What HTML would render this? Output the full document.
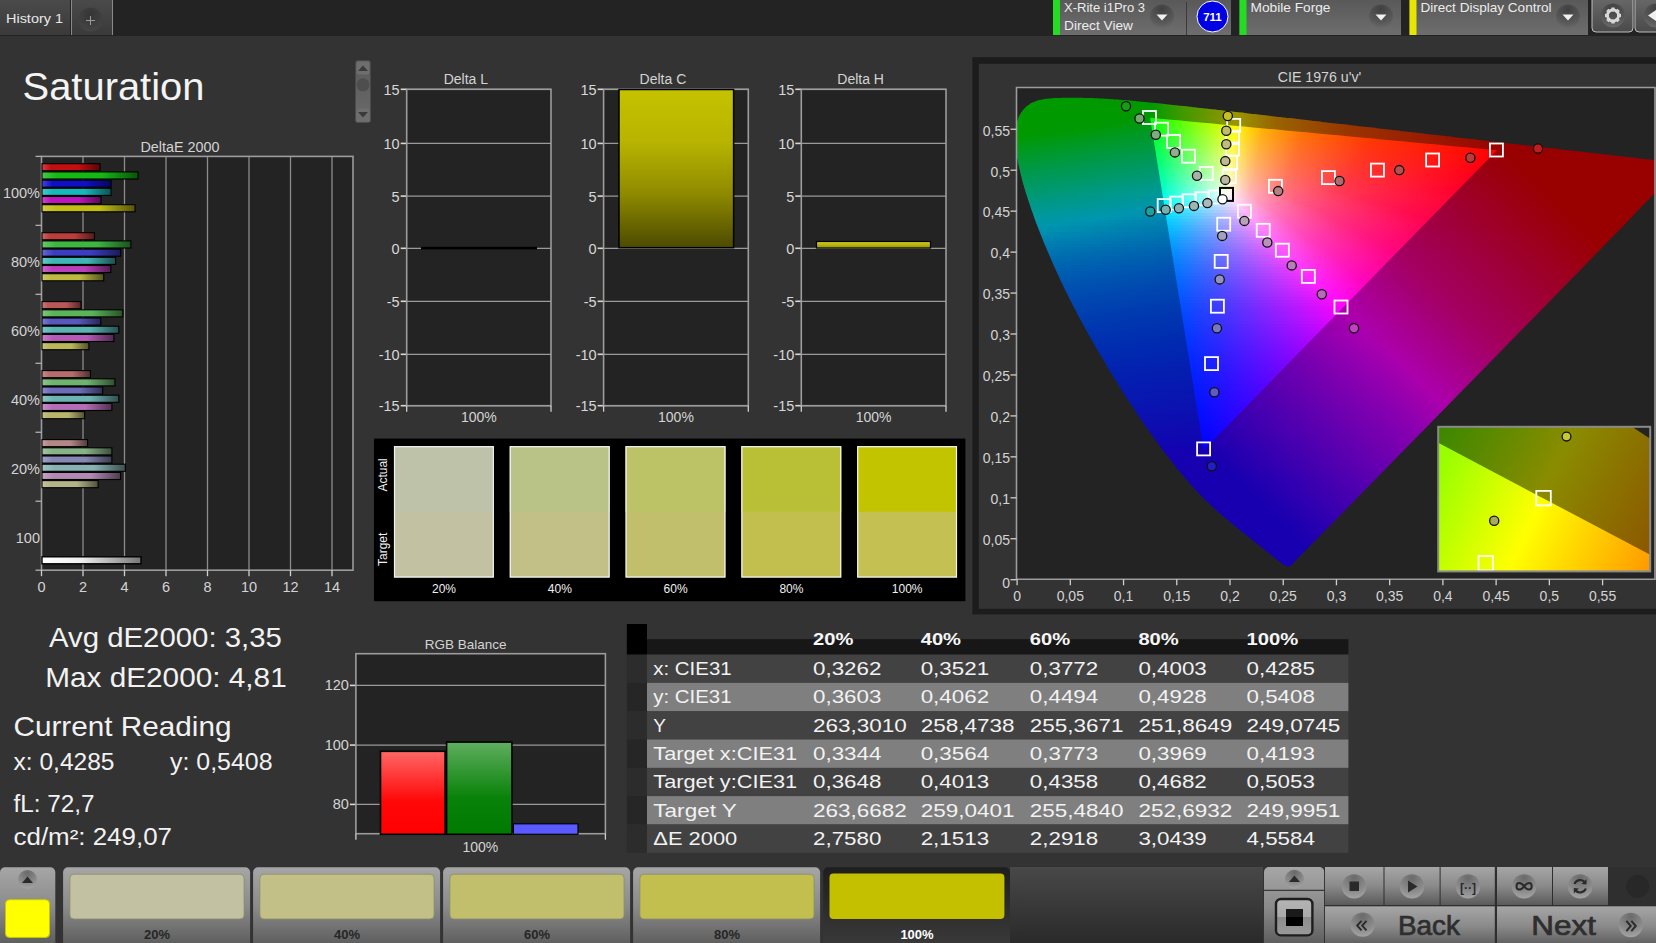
<!DOCTYPE html>
<html><head><meta charset="utf-8"><style>
html,body{margin:0;padding:0;background:#333;overflow:hidden;width:1656px;height:943px}
svg{display:block;font-family:"Liberation Sans",sans-serif}
</style></head><body>
<svg width="1656" height="943" viewBox="0 0 1656 943">
<defs><linearGradient id="tabg" x1="0" y1="0" x2="0" y2="1"><stop offset="0" stop-color="#4a4a4a"/><stop offset="1" stop-color="#3a3a3a"/></linearGradient><radialGradient id="plusg" cx="0.5" cy="0.3" r="0.7"><stop offset="0" stop-color="#353535"/><stop offset="1" stop-color="#454545"/></radialGradient><linearGradient id="devg" x1="0" y1="0" x2="0" y2="1"><stop offset="0" stop-color="#595959"/><stop offset="1" stop-color="#6e6e6e"/></linearGradient><radialGradient id="ddg" cx="0.5" cy="0.2" r="0.8"><stop offset="0" stop-color="#404040"/><stop offset="0.7" stop-color="#585858"/><stop offset="1" stop-color="#6a6a6a"/></radialGradient><linearGradient id="gearg" x1="0" y1="0" x2="0" y2="1"><stop offset="0" stop-color="#6a6a6a"/><stop offset="1" stop-color="#4a4a4a"/></linearGradient><linearGradient id="sbg" x1="0" y1="0" x2="0" y2="1"><stop offset="0" stop-color="#5a5a5a"/><stop offset="1" stop-color="#6a6a6a"/></linearGradient><linearGradient id="de0" x1="0" y1="0" x2="1" y2="0"><stop offset="0" stop-color="#d04444"/><stop offset="0.15" stop-color="#c30f0f"/><stop offset="0.62" stop-color="#c30f0f"/><stop offset="1" stop-color="#570606"/></linearGradient><linearGradient id="de1" x1="0" y1="0" x2="1" y2="0"><stop offset="0" stop-color="#48c848"/><stop offset="0.15" stop-color="#14b914"/><stop offset="0.62" stop-color="#14b914"/><stop offset="1" stop-color="#095309"/></linearGradient><linearGradient id="de2" x1="0" y1="0" x2="1" y2="0"><stop offset="0" stop-color="#4444d4"/><stop offset="0.15" stop-color="#0f0fc8"/><stop offset="0.62" stop-color="#0f0fc8"/><stop offset="1" stop-color="#06065a"/></linearGradient><linearGradient id="de3" x1="0" y1="0" x2="1" y2="0"><stop offset="0" stop-color="#48c8c8"/><stop offset="0.15" stop-color="#14b9b9"/><stop offset="0.62" stop-color="#14b9b9"/><stop offset="1" stop-color="#095353"/></linearGradient><linearGradient id="de4" x1="0" y1="0" x2="1" y2="0"><stop offset="0" stop-color="#cc48cc"/><stop offset="0.15" stop-color="#be14be"/><stop offset="0.62" stop-color="#be14be"/><stop offset="1" stop-color="#550955"/></linearGradient><linearGradient id="de5" x1="0" y1="0" x2="1" y2="0"><stop offset="0" stop-color="#d0cc48"/><stop offset="0.15" stop-color="#c3be14"/><stop offset="0.62" stop-color="#c3be14"/><stop offset="1" stop-color="#575509"/></linearGradient><linearGradient id="de6" x1="0" y1="0" x2="1" y2="0"><stop offset="0" stop-color="#cc6767"/><stop offset="0.15" stop-color="#bd3c3c"/><stop offset="0.62" stop-color="#bd3c3c"/><stop offset="1" stop-color="#551b1b"/></linearGradient><linearGradient id="de7" x1="0" y1="0" x2="1" y2="0"><stop offset="0" stop-color="#69c669"/><stop offset="0.15" stop-color="#3fb63f"/><stop offset="0.62" stop-color="#3fb63f"/><stop offset="1" stop-color="#1c511c"/></linearGradient><linearGradient id="de8" x1="0" y1="0" x2="1" y2="0"><stop offset="0" stop-color="#6767cf"/><stop offset="0.15" stop-color="#3c3cc1"/><stop offset="0.62" stop-color="#3c3cc1"/><stop offset="1" stop-color="#1b1b56"/></linearGradient><linearGradient id="de9" x1="0" y1="0" x2="1" y2="0"><stop offset="0" stop-color="#69c6c6"/><stop offset="0.15" stop-color="#3fb6b6"/><stop offset="0.62" stop-color="#3fb6b6"/><stop offset="1" stop-color="#1c5151"/></linearGradient><linearGradient id="de10" x1="0" y1="0" x2="1" y2="0"><stop offset="0" stop-color="#c969c9"/><stop offset="0.15" stop-color="#ba3fba"/><stop offset="0.62" stop-color="#ba3fba"/><stop offset="1" stop-color="#531c53"/></linearGradient><linearGradient id="de11" x1="0" y1="0" x2="1" y2="0"><stop offset="0" stop-color="#ccc969"/><stop offset="0.15" stop-color="#bdba3f"/><stop offset="0.62" stop-color="#bdba3f"/><stop offset="1" stop-color="#55531c"/></linearGradient><linearGradient id="de12" x1="0" y1="0" x2="1" y2="0"><stop offset="0" stop-color="#c97c7c"/><stop offset="0.15" stop-color="#ba5757"/><stop offset="0.62" stop-color="#ba5757"/><stop offset="1" stop-color="#532727"/></linearGradient><linearGradient id="de13" x1="0" y1="0" x2="1" y2="0"><stop offset="0" stop-color="#7ec47e"/><stop offset="0.15" stop-color="#5ab45a"/><stop offset="0.62" stop-color="#5ab45a"/><stop offset="1" stop-color="#285128"/></linearGradient><linearGradient id="de14" x1="0" y1="0" x2="1" y2="0"><stop offset="0" stop-color="#7c7ccc"/><stop offset="0.15" stop-color="#5757bd"/><stop offset="0.62" stop-color="#5757bd"/><stop offset="1" stop-color="#272755"/></linearGradient><linearGradient id="de15" x1="0" y1="0" x2="1" y2="0"><stop offset="0" stop-color="#7ec4c4"/><stop offset="0.15" stop-color="#5ab4b4"/><stop offset="0.62" stop-color="#5ab4b4"/><stop offset="1" stop-color="#285151"/></linearGradient><linearGradient id="de16" x1="0" y1="0" x2="1" y2="0"><stop offset="0" stop-color="#c77ec7"/><stop offset="0.15" stop-color="#b75ab7"/><stop offset="0.62" stop-color="#b75ab7"/><stop offset="1" stop-color="#522852"/></linearGradient><linearGradient id="de17" x1="0" y1="0" x2="1" y2="0"><stop offset="0" stop-color="#c9c77e"/><stop offset="0.15" stop-color="#bab75a"/><stop offset="0.62" stop-color="#bab75a"/><stop offset="1" stop-color="#535228"/></linearGradient><linearGradient id="de18" x1="0" y1="0" x2="1" y2="0"><stop offset="0" stop-color="#c78c8c"/><stop offset="0.15" stop-color="#b76c6c"/><stop offset="0.62" stop-color="#b76c6c"/><stop offset="1" stop-color="#523030"/></linearGradient><linearGradient id="de19" x1="0" y1="0" x2="1" y2="0"><stop offset="0" stop-color="#8ec48e"/><stop offset="0.15" stop-color="#6eb36e"/><stop offset="0.62" stop-color="#6eb36e"/><stop offset="1" stop-color="#315031"/></linearGradient><linearGradient id="de20" x1="0" y1="0" x2="1" y2="0"><stop offset="0" stop-color="#8c8cc9"/><stop offset="0.15" stop-color="#6c6cba"/><stop offset="0.62" stop-color="#6c6cba"/><stop offset="1" stop-color="#303053"/></linearGradient><linearGradient id="de21" x1="0" y1="0" x2="1" y2="0"><stop offset="0" stop-color="#8ec4c4"/><stop offset="0.15" stop-color="#6eb3b3"/><stop offset="0.62" stop-color="#6eb3b3"/><stop offset="1" stop-color="#315050"/></linearGradient><linearGradient id="de22" x1="0" y1="0" x2="1" y2="0"><stop offset="0" stop-color="#c58ec5"/><stop offset="0.15" stop-color="#b56eb5"/><stop offset="0.62" stop-color="#b56eb5"/><stop offset="1" stop-color="#513151"/></linearGradient><linearGradient id="de23" x1="0" y1="0" x2="1" y2="0"><stop offset="0" stop-color="#c7c58e"/><stop offset="0.15" stop-color="#b7b56e"/><stop offset="0.62" stop-color="#b7b56e"/><stop offset="1" stop-color="#525131"/></linearGradient><linearGradient id="de24" x1="0" y1="0" x2="1" y2="0"><stop offset="0" stop-color="#c4a1a1"/><stop offset="0.15" stop-color="#b48787"/><stop offset="0.62" stop-color="#b48787"/><stop offset="1" stop-color="#513c3c"/></linearGradient><linearGradient id="de25" x1="0" y1="0" x2="1" y2="0"><stop offset="0" stop-color="#a2c3a2"/><stop offset="0.15" stop-color="#88b288"/><stop offset="0.62" stop-color="#88b288"/><stop offset="1" stop-color="#3d503d"/></linearGradient><linearGradient id="de26" x1="0" y1="0" x2="1" y2="0"><stop offset="0" stop-color="#a1a1c5"/><stop offset="0.15" stop-color="#8787b5"/><stop offset="0.62" stop-color="#8787b5"/><stop offset="1" stop-color="#3c3c51"/></linearGradient><linearGradient id="de27" x1="0" y1="0" x2="1" y2="0"><stop offset="0" stop-color="#a2c3c3"/><stop offset="0.15" stop-color="#88b2b2"/><stop offset="0.62" stop-color="#88b2b2"/><stop offset="1" stop-color="#3d5050"/></linearGradient><linearGradient id="de28" x1="0" y1="0" x2="1" y2="0"><stop offset="0" stop-color="#c4a2c4"/><stop offset="0.15" stop-color="#b388b3"/><stop offset="0.62" stop-color="#b388b3"/><stop offset="1" stop-color="#503d50"/></linearGradient><linearGradient id="de29" x1="0" y1="0" x2="1" y2="0"><stop offset="0" stop-color="#c4c4a2"/><stop offset="0.15" stop-color="#b4b388"/><stop offset="0.62" stop-color="#b4b388"/><stop offset="1" stop-color="#51503d"/></linearGradient><linearGradient id="dew" x1="0" y1="0" x2="1" y2="0"><stop offset="0" stop-color="#ffffff"/><stop offset="0.4" stop-color="#eeeeee"/><stop offset="1" stop-color="#777777"/></linearGradient><linearGradient id="dcg" x1="0" y1="0" x2="0" y2="1"><stop offset="0" stop-color="#c4c200"/><stop offset="0.33" stop-color="#b8b400"/><stop offset="0.66" stop-color="#8e8a00"/><stop offset="1" stop-color="#4c4a00"/></linearGradient><linearGradient id="dhg" x1="0" y1="0" x2="0" y2="1"><stop offset="0" stop-color="#d4d020"/><stop offset="1" stop-color="#9a9600"/></linearGradient><linearGradient id="rbr" x1="0" y1="0" x2="0" y2="1"><stop offset="0" stop-color="#ff6666"/><stop offset="0.6" stop-color="#ff0808"/><stop offset="1" stop-color="#ff0000"/></linearGradient><linearGradient id="rbg" x1="0" y1="0" x2="0" y2="1"><stop offset="0" stop-color="#5fae5f"/><stop offset="0.6" stop-color="#0a820a"/><stop offset="1" stop-color="#007a00"/></linearGradient><linearGradient id="btng" x1="0" y1="0" x2="0" y2="1"><stop offset="0" stop-color="#a6a6a6"/><stop offset="0.5" stop-color="#8a8a8a"/><stop offset="1" stop-color="#5a5a5a"/></linearGradient><linearGradient id="btnsel" x1="0" y1="0" x2="0" y2="1"><stop offset="0" stop-color="#1e1e1e"/><stop offset="1" stop-color="#3a3a3a"/></linearGradient><linearGradient id="barbg" x1="0" y1="0" x2="0" y2="1"><stop offset="0" stop-color="#484848"/><stop offset="1" stop-color="#2a2a2a"/></linearGradient><radialGradient id="circg" cx="0.5" cy="0.15" r="0.9"><stop offset="0" stop-color="#6a6a6a"/><stop offset="0.6" stop-color="#8a8a8a"/><stop offset="1" stop-color="#a8a8a8"/></radialGradient><linearGradient id="glossg" x1="0" y1="0" x2="0" y2="1"><stop offset="0" stop-color="#b4b4b4"/><stop offset="0.5" stop-color="#aaaaaa"/><stop offset="0.5" stop-color="#8c8c8c"/><stop offset="1" stop-color="#9a9a9a"/></linearGradient><linearGradient id="glossk" x1="0" y1="0" x2="0" y2="1"><stop offset="0" stop-color="#1a1a1a"/><stop offset="0.5" stop-color="#1a1a1a"/><stop offset="0.5" stop-color="#000"/><stop offset="1" stop-color="#000"/></linearGradient><clipPath id="clipLoc"><path d="M1290.3,566.0 L1290.3,566.0 L1290.3,566.0 L1290.3,566.0 L1290.3,566.0 L1290.3,566.0 L1290.3,566.0 L1290.2,566.0 L1290.2,566.0 L1290.2,566.0 L1290.2,566.0 L1290.2,566.0 L1290.2,566.0 L1290.1,566.0 L1290.1,566.0 L1290.1,566.0 L1290.1,566.0 L1290.1,566.0 L1290.1,566.0 L1290.0,566.0 L1290.0,566.0 L1290.0,566.1 L1290.0,566.1 L1290.0,566.1 L1289.9,566.1 L1289.9,566.1 L1289.9,566.1 L1289.9,566.1 L1289.8,566.1 L1289.8,566.1 L1289.8,566.1 L1289.8,566.1 L1289.7,566.1 L1289.7,566.1 L1289.7,566.1 L1289.7,566.1 L1289.6,566.1 L1289.6,566.1 L1289.6,566.1 L1289.6,566.1 L1289.5,566.1 L1289.5,566.2 L1289.5,566.2 L1289.5,566.2 L1289.5,566.2 L1289.4,566.2 L1289.4,566.2 L1289.4,566.2 L1289.4,566.3 L1289.4,566.3 L1289.4,566.3 L1289.4,566.3 L1289.3,566.3 L1289.3,566.4 L1289.3,566.4 L1289.3,566.4 L1289.2,566.4 L1289.2,566.4 L1289.2,566.4 L1289.2,566.4 L1289.1,566.4 L1289.1,566.4 L1289.1,566.4 L1289.0,566.4 L1289.0,566.5 L1289.0,566.5 L1288.9,566.5 L1288.9,566.5 L1288.9,566.5 L1288.8,566.5 L1288.8,566.5 L1288.8,566.5 L1288.7,566.5 L1288.7,566.5 L1288.6,566.5 L1288.6,566.5 L1288.5,566.5 L1288.5,566.5 L1288.4,566.5 L1288.4,566.5 L1288.3,566.5 L1288.3,566.5 L1288.2,566.4 L1288.2,566.4 L1288.1,566.4 L1288.1,566.4 L1288.0,566.4 L1288.0,566.4 L1287.9,566.4 L1287.9,566.4 L1287.8,566.4 L1287.8,566.4 L1287.7,566.4 L1287.7,566.4 L1287.6,566.4 L1287.5,566.4 L1287.5,566.4 L1287.4,566.4 L1287.4,566.4 L1287.3,566.4 L1287.2,566.4 L1287.2,566.4 L1287.1,566.4 L1287.0,566.3 L1287.0,566.3 L1286.9,566.3 L1286.8,566.3 L1286.7,566.2 L1286.6,566.2 L1286.6,566.2 L1286.5,566.1 L1286.4,566.1 L1286.3,566.1 L1286.2,566.0 L1286.1,566.0 L1286.0,565.9 L1285.9,565.9 L1285.7,565.8 L1285.6,565.8 L1285.5,565.7 L1285.4,565.6 L1285.2,565.5 L1285.1,565.5 L1284.9,565.4 L1284.8,565.3 L1284.6,565.2 L1284.5,565.1 L1284.3,565.0 L1284.1,564.9 L1284.0,564.8 L1283.8,564.7 L1283.6,564.5 L1283.4,564.4 L1283.2,564.3 L1283.0,564.2 L1282.8,564.0 L1282.6,563.9 L1282.4,563.7 L1282.2,563.6 L1282.0,563.4 L1281.8,563.3 L1281.5,563.1 L1281.3,563.0 L1281.1,562.8 L1280.8,562.6 L1280.6,562.5 L1280.4,562.3 L1280.1,562.1 L1279.8,561.9 L1279.6,561.7 L1279.3,561.5 L1279.0,561.3 L1278.7,561.1 L1278.5,560.9 L1278.2,560.6 L1277.9,560.4 L1277.6,560.2 L1277.2,559.9 L1276.9,559.7 L1276.6,559.4 L1276.3,559.2 L1275.9,558.9 L1275.6,558.7 L1275.2,558.4 L1274.9,558.1 L1274.5,557.8 L1274.2,557.5 L1273.8,557.2 L1273.4,556.9 L1273.0,556.6 L1272.6,556.3 L1272.2,556.0 L1271.8,555.7 L1271.4,555.3 L1271.0,555.0 L1270.6,554.7 L1270.2,554.3 L1269.7,554.0 L1269.3,553.6 L1268.8,553.2 L1268.4,552.9 L1267.9,552.5 L1267.5,552.1 L1267.0,551.7 L1266.5,551.3 L1266.0,550.9 L1265.5,550.5 L1265.0,550.1 L1264.5,549.7 L1264.0,549.3 L1263.5,548.9 L1262.9,548.5 L1262.4,548.0 L1261.8,547.6 L1261.3,547.1 L1260.7,546.7 L1260.1,546.2 L1259.5,545.8 L1258.9,545.3 L1258.3,544.8 L1257.7,544.3 L1257.1,543.8 L1256.4,543.3 L1255.8,542.8 L1255.1,542.2 L1254.5,541.7 L1253.8,541.2 L1253.1,540.6 L1252.4,540.1 L1251.7,539.5 L1250.9,538.9 L1250.2,538.3 L1249.5,537.7 L1248.7,537.1 L1248.0,536.5 L1247.2,535.9 L1246.4,535.3 L1245.6,534.7 L1244.8,534.0 L1244.0,533.4 L1243.2,532.7 L1242.3,532.1 L1241.5,531.4 L1240.6,530.7 L1239.8,530.0 L1238.9,529.3 L1238.0,528.6 L1237.1,527.9 L1236.2,527.2 L1235.3,526.4 L1234.4,525.7 L1233.4,524.9 L1232.5,524.1 L1231.5,523.3 L1230.5,522.5 L1229.5,521.6 L1228.5,520.8 L1227.5,519.9 L1226.5,519.1 L1225.4,518.2 L1224.4,517.3 L1223.3,516.4 L1222.2,515.4 L1221.1,514.5 L1220.0,513.5 L1218.9,512.5 L1217.7,511.5 L1216.6,510.5 L1215.4,509.4 L1214.2,508.3 L1213.0,507.2 L1211.8,506.1 L1210.6,505.0 L1209.4,503.8 L1208.1,502.6 L1206.9,501.4 L1205.6,500.2 L1204.3,499.0 L1203.0,497.7 L1201.6,496.3 L1200.3,494.9 L1198.9,493.5 L1197.5,492.0 L1196.1,490.5 L1194.6,488.9 L1193.1,487.3 L1191.6,485.6 L1190.1,483.9 L1188.5,482.1 L1187.0,480.3 L1185.4,478.4 L1183.7,476.5 L1182.1,474.5 L1180.4,472.5 L1178.7,470.5 L1177.0,468.4 L1175.3,466.2 L1173.5,464.0 L1171.8,461.8 L1170.0,459.5 L1168.2,457.2 L1166.3,454.8 L1164.5,452.4 L1162.6,449.9 L1160.8,447.4 L1158.9,444.8 L1157.0,442.2 L1155.0,439.6 L1153.1,436.9 L1151.1,434.1 L1149.1,431.3 L1147.1,428.5 L1145.1,425.6 L1143.1,422.7 L1141.1,419.7 L1139.0,416.7 L1137.0,413.7 L1134.9,410.6 L1132.9,407.5 L1130.8,404.3 L1128.7,401.1 L1126.6,397.9 L1124.5,394.6 L1122.4,391.3 L1120.3,387.9 L1118.2,384.5 L1116.0,381.1 L1113.9,377.6 L1111.8,374.1 L1109.7,370.7 L1107.6,367.2 L1105.5,363.6 L1103.4,360.1 L1101.3,356.5 L1099.2,353.0 L1097.1,349.4 L1095.0,345.8 L1093.0,342.2 L1090.9,338.5 L1088.8,334.8 L1086.8,331.2 L1084.7,327.5 L1082.7,323.8 L1080.7,320.1 L1078.7,316.4 L1076.8,312.8 L1074.9,309.1 L1073.0,305.5 L1071.1,301.8 L1069.3,298.2 L1067.5,294.6 L1065.7,291.0 L1064.0,287.4 L1062.2,283.8 L1060.5,280.2 L1058.9,276.7 L1057.2,273.1 L1055.6,269.6 L1054.0,266.0 L1052.5,262.6 L1051.0,259.1 L1049.5,255.7 L1048.1,252.3 L1046.6,249.0 L1045.3,245.7 L1043.9,242.4 L1042.6,239.1 L1041.3,235.9 L1040.0,232.8 L1038.8,229.6 L1037.6,226.5 L1036.4,223.5 L1035.3,220.4 L1034.2,217.4 L1033.2,214.5 L1032.1,211.6 L1031.1,208.7 L1030.2,205.9 L1029.2,203.1 L1028.3,200.4 L1027.5,197.7 L1026.6,195.1 L1025.8,192.5 L1025.1,190.0 L1024.3,187.5 L1023.6,185.1 L1022.9,182.7 L1022.3,180.4 L1021.7,178.1 L1021.1,175.8 L1020.6,173.6 L1020.1,171.5 L1019.6,169.3 L1019.1,167.2 L1018.7,165.2 L1018.2,163.2 L1017.9,161.2 L1017.5,159.3 L1017.2,157.4 L1016.9,155.6 L1016.6,153.8 L1016.3,152.0 L1016.1,150.3 L1015.9,148.6 L1015.7,147.0 L1015.6,145.4 L1015.5,143.8 L1015.4,142.3 L1015.3,140.8 L1015.3,139.3 L1015.2,137.9 L1015.3,136.4 L1015.3,135.0 L1015.3,133.7 L1015.4,132.3 L1015.5,131.0 L1015.6,129.7 L1015.8,128.5 L1016.0,127.2 L1016.2,126.0 L1016.4,124.9 L1016.6,123.7 L1016.9,122.6 L1017.2,121.5 L1017.5,120.5 L1017.9,119.4 L1018.2,118.4 L1018.6,117.5 L1019.0,116.5 L1019.5,115.6 L1019.9,114.7 L1020.4,113.8 L1020.9,113.0 L1021.4,112.1 L1022.0,111.4 L1022.6,110.6 L1023.2,109.9 L1023.8,109.2 L1024.4,108.5 L1025.1,107.8 L1025.7,107.2 L1026.4,106.6 L1027.1,106.0 L1027.7,105.5 L1028.4,104.9 L1029.2,104.4 L1029.9,104.0 L1030.6,103.5 L1031.4,103.1 L1032.1,102.7 L1032.9,102.3 L1033.7,102.0 L1034.5,101.7 L1035.3,101.4 L1036.1,101.1 L1036.9,100.8 L1037.7,100.6 L1038.5,100.4 L1039.3,100.1 L1040.2,99.9 L1041.0,99.7 L1041.8,99.5 L1042.7,99.4 L1043.5,99.2 L1044.4,99.1 L1045.2,98.9 L1046.1,98.8 L1047.0,98.7 L1047.8,98.6 L1048.7,98.5 L1049.6,98.5 L1050.5,98.4 L1051.4,98.3 L1052.3,98.3 L1053.2,98.2 L1054.1,98.1 L1055.0,98.1 L1055.9,98.0 L1056.8,98.0 L1057.7,98.0 L1058.6,97.9 L1059.5,97.9 L1060.5,97.9 L1061.4,97.9 L1062.3,97.8 L1063.3,97.8 L1064.2,97.8 L1065.1,97.8 L1066.1,97.8 L1067.0,97.8 L1068.0,97.8 L1068.9,97.8 L1069.8,97.8 L1070.8,97.8 L1071.7,97.8 L1072.7,97.8 L1073.6,97.8 L1074.6,97.8 L1075.5,97.8 L1076.5,97.8 L1077.4,97.8 L1078.4,97.8 L1079.3,97.8 L1080.3,97.8 L1081.2,97.8 L1082.2,97.8 L1083.1,97.9 L1084.1,97.9 L1085.1,97.9 L1086.1,97.9 L1087.0,97.9 L1088.0,98.0 L1089.0,98.0 L1090.0,98.0 L1090.9,98.1 L1091.9,98.1 L1092.9,98.1 L1093.9,98.2 L1094.9,98.2 L1095.9,98.3 L1096.9,98.3 L1097.9,98.3 L1098.9,98.4 L1100.0,98.4 L1101.0,98.5 L1102.0,98.6 L1103.1,98.6 L1104.1,98.7 L1105.1,98.7 L1106.2,98.8 L1107.2,98.9 L1108.3,98.9 L1109.4,99.0 L1110.4,99.1 L1111.5,99.2 L1112.6,99.2 L1113.7,99.3 L1114.8,99.4 L1115.8,99.5 L1117.0,99.5 L1118.1,99.6 L1119.2,99.7 L1120.3,99.8 L1121.4,99.9 L1122.6,100.0 L1123.7,100.1 L1124.8,100.2 L1126.0,100.3 L1127.1,100.4 L1128.3,100.5 L1129.5,100.6 L1130.6,100.7 L1131.8,100.8 L1133.0,100.9 L1134.2,101.0 L1135.4,101.1 L1136.6,101.2 L1137.8,101.3 L1139.1,101.5 L1140.3,101.6 L1141.5,101.7 L1142.8,101.8 L1144.1,101.9 L1145.3,102.1 L1146.6,102.2 L1147.9,102.3 L1149.1,102.4 L1150.4,102.6 L1151.7,102.7 L1153.1,102.8 L1154.4,103.0 L1155.7,103.1 L1157.0,103.3 L1158.4,103.4 L1159.7,103.5 L1161.1,103.7 L1162.5,103.8 L1163.8,104.0 L1165.2,104.1 L1166.6,104.3 L1168.0,104.4 L1169.4,104.6 L1170.9,104.7 L1172.3,104.9 L1173.7,105.0 L1175.2,105.2 L1176.6,105.3 L1178.1,105.5 L1179.6,105.7 L1181.1,105.8 L1182.6,106.0 L1184.1,106.1 L1185.6,106.3 L1187.1,106.5 L1188.7,106.7 L1190.2,106.8 L1191.8,107.0 L1193.3,107.2 L1194.9,107.3 L1196.5,107.5 L1198.1,107.7 L1199.7,107.9 L1201.3,108.1 L1202.9,108.2 L1204.6,108.4 L1206.2,108.6 L1207.9,108.8 L1209.5,109.0 L1211.2,109.2 L1212.9,109.4 L1214.6,109.5 L1216.3,109.7 L1218.0,109.9 L1219.7,110.1 L1221.5,110.3 L1223.2,110.5 L1225.0,110.7 L1226.8,110.9 L1228.5,111.1 L1230.3,111.3 L1232.1,111.5 L1233.9,111.8 L1235.8,112.0 L1237.6,112.2 L1239.5,112.4 L1241.3,112.6 L1243.2,112.8 L1245.1,113.0 L1247.0,113.2 L1248.9,113.5 L1250.8,113.7 L1252.7,113.9 L1254.6,114.1 L1256.6,114.3 L1258.5,114.6 L1260.5,114.8 L1262.5,115.0 L1264.5,115.3 L1266.5,115.5 L1268.5,115.7 L1270.5,115.9 L1272.5,116.2 L1274.6,116.4 L1276.6,116.7 L1278.7,116.9 L1280.8,117.1 L1282.8,117.4 L1284.9,117.6 L1287.0,117.9 L1289.2,118.1 L1291.3,118.3 L1293.4,118.6 L1295.6,118.8 L1297.7,119.1 L1299.9,119.3 L1302.1,119.6 L1304.2,119.8 L1306.4,120.1 L1308.6,120.3 L1310.9,120.6 L1313.1,120.9 L1315.3,121.1 L1317.6,121.4 L1319.8,121.6 L1322.1,121.9 L1324.3,122.2 L1326.6,122.4 L1328.9,122.7 L1331.2,122.9 L1333.5,123.2 L1335.8,123.5 L1338.1,123.7 L1340.4,124.0 L1342.8,124.3 L1345.1,124.5 L1347.5,124.8 L1349.8,125.1 L1352.2,125.4 L1354.5,125.6 L1356.9,125.9 L1359.3,126.2 L1361.7,126.5 L1364.1,126.7 L1366.5,127.0 L1368.9,127.3 L1371.3,127.6 L1373.7,127.8 L1376.1,128.1 L1378.5,128.4 L1380.9,128.7 L1383.3,128.9 L1385.7,129.2 L1388.2,129.5 L1390.6,129.8 L1393.0,130.1 L1395.5,130.4 L1397.9,130.6 L1400.3,130.9 L1402.7,131.2 L1405.1,131.5 L1407.5,131.7 L1409.9,132.0 L1412.3,132.3 L1414.7,132.6 L1417.1,132.8 L1419.5,133.1 L1421.8,133.4 L1424.2,133.7 L1426.6,133.9 L1428.9,134.2 L1431.3,134.5 L1433.6,134.8 L1436.0,135.0 L1438.3,135.3 L1440.6,135.6 L1443.0,135.8 L1445.3,136.1 L1447.6,136.4 L1449.9,136.6 L1452.3,136.9 L1454.6,137.2 L1456.9,137.4 L1459.2,137.7 L1461.5,138.0 L1463.8,138.2 L1466.1,138.5 L1468.4,138.8 L1470.6,139.0 L1472.9,139.3 L1475.1,139.5 L1477.3,139.8 L1479.5,140.0 L1481.7,140.3 L1483.9,140.5 L1486.1,140.8 L1488.3,141.0 L1490.4,141.3 L1492.5,141.5 L1494.6,141.8 L1496.7,142.0 L1498.8,142.3 L1500.9,142.5 L1503.0,142.7 L1505.0,143.0 L1507.0,143.2 L1509.0,143.4 L1511.0,143.7 L1513.0,143.9 L1515.0,144.1 L1516.9,144.3 L1518.9,144.6 L1520.8,144.8 L1522.7,145.0 L1524.6,145.2 L1526.5,145.4 L1528.3,145.7 L1530.2,145.9 L1532.0,146.1 L1533.8,146.3 L1535.6,146.5 L1537.4,146.7 L1539.2,146.9 L1540.9,147.1 L1542.7,147.3 L1544.4,147.5 L1546.1,147.7 L1547.8,147.9 L1549.4,148.1 L1551.1,148.3 L1552.7,148.5 L1554.3,148.6 L1555.9,148.8 L1557.5,149.0 L1559.1,149.2 L1560.6,149.4 L1562.2,149.6 L1563.7,149.7 L1565.2,149.9 L1566.7,150.1 L1568.1,150.2 L1569.6,150.4 L1571.0,150.6 L1572.5,150.7 L1573.9,150.9 L1575.3,151.1 L1576.6,151.2 L1578.0,151.4 L1579.3,151.5 L1580.7,151.7 L1582.0,151.8 L1583.3,152.0 L1584.6,152.1 L1585.8,152.3 L1587.1,152.4 L1588.3,152.6 L1589.6,152.7 L1590.8,152.8 L1592.0,153.0 L1593.2,153.1 L1594.4,153.3 L1595.5,153.4 L1596.7,153.5 L1597.8,153.7 L1599.0,153.8 L1600.1,153.9 L1601.2,154.0 L1602.3,154.2 L1603.3,154.3 L1604.4,154.4 L1605.5,154.5 L1606.5,154.7 L1607.6,154.8 L1608.6,154.9 L1609.7,155.0 L1610.7,155.1 L1611.7,155.3 L1612.7,155.4 L1613.7,155.5 L1614.7,155.6 L1615.6,155.7 L1616.6,155.8 L1617.6,155.9 L1618.5,156.0 L1619.5,156.1 L1620.4,156.3 L1621.3,156.4 L1622.2,156.5 L1623.1,156.6 L1624.0,156.7 L1624.9,156.8 L1625.8,156.9 L1626.6,157.0 L1627.5,157.1 L1628.3,157.2 L1629.2,157.3 L1630.0,157.4 L1630.8,157.5 L1631.6,157.6 L1632.4,157.7 L1633.3,157.7 L1634.2,157.8 L1635.1,158.0 L1636.0,158.1 L1636.9,158.2 L1637.9,158.3 L1638.9,158.4 L1639.9,158.5 L1640.9,158.6 L1642.0,158.7 L1643.0,158.9 L1644.1,159.0 L1645.2,159.1 L1646.4,159.3 L1647.5,159.4 L1648.7,159.5 L1649.8,159.6 L1650.9,159.8 L1651.9,159.9 L1653.0,160.0 L1654.0,160.1 L1655.0,160.2 L1655.9,160.4 L1656.8,160.5 L1657.8,160.6 L1658.6,160.7 L1659.5,160.8 L1660.3,160.9 L1661.1,161.0 L1661.9,161.0 L1662.6,161.1 L1663.4,161.2 L1664.1,161.3 L1664.9,161.4 L1665.6,161.5 L1666.4,161.6 L1667.1,161.6 L1667.8,161.7 L1668.6,161.8 L1669.3,161.9 L1670.0,162.0 L1670.8,162.1 L1671.5,162.2 L1672.2,162.2 L1672.9,162.3 L1673.7,162.4 L1674.4,162.5 L1675.1,162.6 L1675.7,162.7 L1676.3,162.8 L1676.9,162.9 L1677.5,163.0 L1678.0,163.1 L1678.5,163.2 L1678.9,163.3 L1679.3,163.5 L1679.7,163.6 L1680.1,163.7 L1680.4,163.9 L1680.7,164.0 L1680.9,164.2 L1681.1,164.3 L1681.3,164.5 L1679.9,166.2 L1677.0,169.4 L1672.6,174.3 L1666.6,180.6 L1659.0,188.6 L1650.0,198.1 L1639.3,209.1 L1627.2,221.7 L1613.5,235.8 L1598.2,251.5 L1581.4,268.8 L1563.1,287.6 L1543.2,307.9 L1521.8,329.8 L1498.8,353.3 L1474.3,378.3 L1451.3,401.8 L1429.8,423.7 L1409.9,444.0 L1391.5,462.8 L1374.7,480.0 L1359.4,495.6 L1345.6,509.7 L1333.3,522.2 L1322.6,533.1 L1313.4,542.5 L1305.7,550.3 L1299.6,556.6 L1295.0,561.3 L1291.9,564.4 Z"/></clipPath><clipPath id="clipTri"><path d="M1496.8,150.2 L1150.1,117.7 L1203.8,449.9 Z"/></clipPath><clipPath id="clipPlot"><rect x="1016.5" y="87.5" width="638.5" height="491.79999999999995"/></clipPath><linearGradient id="e0" gradientUnits="userSpaceOnUse" x1="1016.5" y1="0" x2="1655" y2="0"><stop offset="0.0000" stop-color="#009900"/><stop offset="0.2130" stop-color="#039900"/><stop offset="0.2584" stop-color="#3c9900"/><stop offset="0.3477" stop-color="#999600"/><stop offset="0.4103" stop-color="#996400"/><stop offset="0.5215" stop-color="#993500"/><stop offset="0.7784" stop-color="#990000"/><stop offset="1.0008" stop-color="#990000"/></linearGradient><linearGradient id="e1" gradientUnits="userSpaceOnUse" x1="1016.5" y1="0" x2="1655" y2="0"><stop offset="0.0000" stop-color="#009900"/><stop offset="0.2114" stop-color="#009900"/><stop offset="0.2428" stop-color="#2c9900"/><stop offset="0.3477" stop-color="#999500"/><stop offset="0.4103" stop-color="#996300"/><stop offset="0.5231" stop-color="#993500"/><stop offset="0.7784" stop-color="#990000"/><stop offset="1.0008" stop-color="#990000"/></linearGradient><linearGradient id="e2" gradientUnits="userSpaceOnUse" x1="1016.5" y1="0" x2="1655" y2="0"><stop offset="0.0000" stop-color="#009900"/><stop offset="0.2114" stop-color="#019900"/><stop offset="0.2490" stop-color="#339900"/><stop offset="0.3461" stop-color="#999600"/><stop offset="0.4088" stop-color="#996400"/><stop offset="0.5200" stop-color="#993600"/><stop offset="0.7784" stop-color="#990000"/><stop offset="1.0008" stop-color="#990000"/></linearGradient><linearGradient id="e3" gradientUnits="userSpaceOnUse" x1="1016.5" y1="0" x2="1655" y2="0"><stop offset="0.0000" stop-color="#009900"/><stop offset="0.2114" stop-color="#039900"/><stop offset="0.2537" stop-color="#399900"/><stop offset="0.3461" stop-color="#999600"/><stop offset="0.4088" stop-color="#996400"/><stop offset="0.5200" stop-color="#993600"/><stop offset="0.7768" stop-color="#990000"/><stop offset="1.0008" stop-color="#990000"/></linearGradient><linearGradient id="e4" gradientUnits="userSpaceOnUse" x1="1016.5" y1="0" x2="1655" y2="0"><stop offset="0.0000" stop-color="#009900"/><stop offset="0.2114" stop-color="#049900"/><stop offset="0.2600" stop-color="#409900"/><stop offset="0.3461" stop-color="#999600"/><stop offset="0.4088" stop-color="#996300"/><stop offset="0.5200" stop-color="#993500"/><stop offset="0.7768" stop-color="#990000"/><stop offset="1.0008" stop-color="#990000"/></linearGradient><linearGradient id="e5" gradientUnits="userSpaceOnUse" x1="1016.5" y1="0" x2="1655" y2="0"><stop offset="0.0000" stop-color="#009900"/><stop offset="0.2099" stop-color="#009900"/><stop offset="0.2428" stop-color="#2e9900"/><stop offset="0.3461" stop-color="#999500"/><stop offset="0.4088" stop-color="#996300"/><stop offset="0.5215" stop-color="#993500"/><stop offset="0.7768" stop-color="#990000"/><stop offset="1.0008" stop-color="#990000"/></linearGradient><linearGradient id="e6" gradientUnits="userSpaceOnUse" x1="1016.5" y1="0" x2="1655" y2="0"><stop offset="0.0000" stop-color="#009900"/><stop offset="0.2099" stop-color="#029900"/><stop offset="0.2490" stop-color="#359900"/><stop offset="0.3446" stop-color="#999600"/><stop offset="0.4072" stop-color="#996400"/><stop offset="0.5184" stop-color="#993600"/><stop offset="0.7753" stop-color="#990000"/><stop offset="1.0008" stop-color="#990000"/></linearGradient><linearGradient id="e7" gradientUnits="userSpaceOnUse" x1="1016.5" y1="0" x2="1655" y2="0"><stop offset="0.0000" stop-color="#009900"/><stop offset="0.1989" stop-color="#009904"/><stop offset="0.2114" stop-color="#009908"/><stop offset="0.2130" stop-color="#099900"/><stop offset="0.2960" stop-color="#679900"/><stop offset="0.3446" stop-color="#999600"/><stop offset="0.4072" stop-color="#996400"/><stop offset="0.5184" stop-color="#993600"/><stop offset="0.7753" stop-color="#990000"/><stop offset="1.0008" stop-color="#990000"/></linearGradient><linearGradient id="e8" gradientUnits="userSpaceOnUse" x1="1016.5" y1="0" x2="1655" y2="0"><stop offset="0.0000" stop-color="#009900"/><stop offset="0.1707" stop-color="#009904"/><stop offset="0.2161" stop-color="#009911"/><stop offset="0.2177" stop-color="#119900"/><stop offset="0.3446" stop-color="#999500"/><stop offset="0.4072" stop-color="#996300"/><stop offset="0.5200" stop-color="#993500"/><stop offset="0.7753" stop-color="#990000"/><stop offset="1.0008" stop-color="#990000"/></linearGradient><linearGradient id="e9" gradientUnits="userSpaceOnUse" x1="1016.5" y1="0" x2="1655" y2="0"><stop offset="0.0000" stop-color="#009900"/><stop offset="0.1410" stop-color="#009904"/><stop offset="0.2208" stop-color="#009919"/><stop offset="0.2224" stop-color="#189900"/><stop offset="0.3430" stop-color="#999700"/><stop offset="0.4056" stop-color="#996400"/><stop offset="0.5168" stop-color="#993600"/><stop offset="0.7753" stop-color="#990000"/><stop offset="1.0008" stop-color="#990000"/></linearGradient><linearGradient id="e10" gradientUnits="userSpaceOnUse" x1="1016.5" y1="0" x2="1655" y2="0"><stop offset="0.0000" stop-color="#009900"/><stop offset="0.1128" stop-color="#009904"/><stop offset="0.2271" stop-color="#009921"/><stop offset="0.2287" stop-color="#209900"/><stop offset="0.3430" stop-color="#999600"/><stop offset="0.4056" stop-color="#996400"/><stop offset="0.5168" stop-color="#993600"/><stop offset="0.7737" stop-color="#990000"/><stop offset="1.0008" stop-color="#990000"/></linearGradient><linearGradient id="e11" gradientUnits="userSpaceOnUse" x1="1016.5" y1="0" x2="1655" y2="0"><stop offset="0.0000" stop-color="#009900"/><stop offset="0.0830" stop-color="#009904"/><stop offset="0.2318" stop-color="#009928"/><stop offset="0.2334" stop-color="#269900"/><stop offset="0.3430" stop-color="#999600"/><stop offset="0.4056" stop-color="#996300"/><stop offset="0.5168" stop-color="#993500"/><stop offset="0.7737" stop-color="#990000"/><stop offset="1.0008" stop-color="#990000"/></linearGradient><linearGradient id="e12" gradientUnits="userSpaceOnUse" x1="1016.5" y1="0" x2="1655" y2="0"><stop offset="0.0000" stop-color="#009900"/><stop offset="0.0564" stop-color="#009905"/><stop offset="0.2365" stop-color="#00992f"/><stop offset="0.2381" stop-color="#2c9900"/><stop offset="0.3430" stop-color="#999500"/><stop offset="0.4056" stop-color="#996300"/><stop offset="0.5184" stop-color="#993500"/><stop offset="0.7737" stop-color="#990000"/><stop offset="1.0008" stop-color="#990000"/></linearGradient><linearGradient id="e13" gradientUnits="userSpaceOnUse" x1="1016.5" y1="0" x2="1655" y2="0"><stop offset="0.0000" stop-color="#009900"/><stop offset="0.0439" stop-color="#00990a"/><stop offset="0.2412" stop-color="#009935"/><stop offset="0.2428" stop-color="#329900"/><stop offset="0.3414" stop-color="#999600"/><stop offset="0.4041" stop-color="#996400"/><stop offset="0.5153" stop-color="#993600"/><stop offset="0.7721" stop-color="#990000"/><stop offset="1.0008" stop-color="#990000"/></linearGradient><linearGradient id="e14" gradientUnits="userSpaceOnUse" x1="1016.5" y1="0" x2="1655" y2="0"><stop offset="0.0000" stop-color="#009906"/><stop offset="0.2459" stop-color="#00993b"/><stop offset="0.2475" stop-color="#379900"/><stop offset="0.3414" stop-color="#999600"/><stop offset="0.4041" stop-color="#996400"/><stop offset="0.5153" stop-color="#993600"/><stop offset="0.7721" stop-color="#990000"/><stop offset="1.0008" stop-color="#990000"/></linearGradient><linearGradient id="e15" gradientUnits="userSpaceOnUse" x1="1016.5" y1="0" x2="1655" y2="0"><stop offset="0.0000" stop-color="#00990e"/><stop offset="0.2522" stop-color="#009942"/><stop offset="0.2537" stop-color="#3e9900"/><stop offset="0.3414" stop-color="#999500"/><stop offset="0.4041" stop-color="#996300"/><stop offset="0.5168" stop-color="#993500"/><stop offset="0.7721" stop-color="#990000"/><stop offset="1.0008" stop-color="#990000"/></linearGradient><linearGradient id="e16" gradientUnits="userSpaceOnUse" x1="1016.5" y1="0" x2="1655" y2="0"><stop offset="0.0000" stop-color="#009915"/><stop offset="0.2569" stop-color="#009948"/><stop offset="0.2584" stop-color="#449900"/><stop offset="0.3414" stop-color="#999500"/><stop offset="0.4041" stop-color="#996300"/><stop offset="0.5168" stop-color="#993500"/><stop offset="0.7721" stop-color="#990000"/><stop offset="1.0008" stop-color="#990000"/></linearGradient><linearGradient id="e17" gradientUnits="userSpaceOnUse" x1="1016.5" y1="0" x2="1655" y2="0"><stop offset="0.0000" stop-color="#00991c"/><stop offset="0.2616" stop-color="#00994e"/><stop offset="0.2631" stop-color="#499900"/><stop offset="0.3399" stop-color="#999600"/><stop offset="0.4025" stop-color="#996400"/><stop offset="0.5137" stop-color="#993600"/><stop offset="0.7706" stop-color="#990000"/><stop offset="1.0008" stop-color="#990000"/></linearGradient><linearGradient id="e18" gradientUnits="userSpaceOnUse" x1="1016.5" y1="0" x2="1655" y2="0"><stop offset="0.0000" stop-color="#009922"/><stop offset="0.2662" stop-color="#009955"/><stop offset="0.2678" stop-color="#4f9900"/><stop offset="0.3399" stop-color="#999600"/><stop offset="0.4025" stop-color="#996300"/><stop offset="0.5137" stop-color="#993500"/><stop offset="0.7424" stop-color="#990300"/><stop offset="0.7455" stop-color="#9a0006"/><stop offset="0.7847" stop-color="#990000"/><stop offset="1.0008" stop-color="#990000"/></linearGradient><linearGradient id="e19" gradientUnits="userSpaceOnUse" x1="1016.5" y1="0" x2="1655" y2="0"><stop offset="0.0000" stop-color="#009928"/><stop offset="0.2709" stop-color="#00995b"/><stop offset="0.2725" stop-color="#549900"/><stop offset="0.3399" stop-color="#999500"/><stop offset="0.4025" stop-color="#996300"/><stop offset="0.5153" stop-color="#993500"/><stop offset="0.7283" stop-color="#990600"/><stop offset="0.7298" stop-color="#9a000d"/><stop offset="0.7753" stop-color="#990000"/><stop offset="1.0008" stop-color="#990000"/></linearGradient><linearGradient id="e20" gradientUnits="userSpaceOnUse" x1="1016.5" y1="0" x2="1655" y2="0"><stop offset="0.0000" stop-color="#00992e"/><stop offset="0.2772" stop-color="#009961"/><stop offset="0.2788" stop-color="#5b9900"/><stop offset="0.3383" stop-color="#999600"/><stop offset="0.4009" stop-color="#996400"/><stop offset="0.5121" stop-color="#993600"/><stop offset="0.7157" stop-color="#990900"/><stop offset="0.7173" stop-color="#9b0012"/><stop offset="0.7784" stop-color="#990000"/><stop offset="1.0008" stop-color="#990000"/></linearGradient><linearGradient id="e21" gradientUnits="userSpaceOnUse" x1="1016.5" y1="0" x2="1655" y2="0"><stop offset="0.0000" stop-color="#009933"/><stop offset="0.2819" stop-color="#009968"/><stop offset="0.2835" stop-color="#609900"/><stop offset="0.3383" stop-color="#999600"/><stop offset="0.4009" stop-color="#996400"/><stop offset="0.5121" stop-color="#993600"/><stop offset="0.7032" stop-color="#990b00"/><stop offset="0.7048" stop-color="#9c0017"/><stop offset="0.7831" stop-color="#990000"/><stop offset="1.0008" stop-color="#990000"/></linearGradient><linearGradient id="e22" gradientUnits="userSpaceOnUse" x1="1016.5" y1="0" x2="1655" y2="0"><stop offset="0.0000" stop-color="#009939"/><stop offset="0.2866" stop-color="#00996e"/><stop offset="0.2882" stop-color="#669900"/><stop offset="0.3383" stop-color="#999500"/><stop offset="0.4009" stop-color="#996300"/><stop offset="0.5121" stop-color="#993500"/><stop offset="0.6907" stop-color="#990d00"/><stop offset="0.6922" stop-color="#9c001c"/><stop offset="0.7878" stop-color="#990000"/><stop offset="1.0008" stop-color="#990000"/></linearGradient><linearGradient id="e23" gradientUnits="userSpaceOnUse" x1="1016.5" y1="0" x2="1655" y2="0"><stop offset="0.0000" stop-color="#00993e"/><stop offset="0.2913" stop-color="#009974"/><stop offset="0.2929" stop-color="#6b9900"/><stop offset="0.3383" stop-color="#999500"/><stop offset="0.4009" stop-color="#996300"/><stop offset="0.5137" stop-color="#993500"/><stop offset="0.6782" stop-color="#991000"/><stop offset="0.6797" stop-color="#9d0021"/><stop offset="0.7925" stop-color="#990000"/><stop offset="1.0008" stop-color="#990000"/></linearGradient><linearGradient id="e24" gradientUnits="userSpaceOnUse" x1="1016.5" y1="0" x2="1655" y2="0"><stop offset="0.0000" stop-color="#009944"/><stop offset="0.2976" stop-color="#00997b"/><stop offset="0.2991" stop-color="#729900"/><stop offset="0.3367" stop-color="#999600"/><stop offset="0.3994" stop-color="#996400"/><stop offset="0.5106" stop-color="#993600"/><stop offset="0.6641" stop-color="#991200"/><stop offset="0.6656" stop-color="#9d0026"/><stop offset="0.7987" stop-color="#990000"/><stop offset="1.0008" stop-color="#990000"/></linearGradient><linearGradient id="e25" gradientUnits="userSpaceOnUse" x1="1016.5" y1="0" x2="1655" y2="0"><stop offset="0.0000" stop-color="#009949"/><stop offset="0.3023" stop-color="#009981"/><stop offset="0.3038" stop-color="#789900"/><stop offset="0.3367" stop-color="#999600"/><stop offset="0.3994" stop-color="#996400"/><stop offset="0.5106" stop-color="#993500"/><stop offset="0.6515" stop-color="#991500"/><stop offset="0.6531" stop-color="#9e002b"/><stop offset="0.8034" stop-color="#990000"/><stop offset="1.0008" stop-color="#990000"/></linearGradient><linearGradient id="e26" gradientUnits="userSpaceOnUse" x1="1016.5" y1="0" x2="1655" y2="0"><stop offset="0.0000" stop-color="#00994f"/><stop offset="0.3070" stop-color="#009987"/><stop offset="0.3085" stop-color="#7d9900"/><stop offset="0.3367" stop-color="#999500"/><stop offset="0.3994" stop-color="#996300"/><stop offset="0.5121" stop-color="#993500"/><stop offset="0.6390" stop-color="#991700"/><stop offset="0.6406" stop-color="#9e002f"/><stop offset="0.8081" stop-color="#990000"/><stop offset="1.0008" stop-color="#990000"/></linearGradient><linearGradient id="e27" gradientUnits="userSpaceOnUse" x1="1016.5" y1="0" x2="1655" y2="0"><stop offset="0.0000" stop-color="#009954"/><stop offset="0.3117" stop-color="#00998e"/><stop offset="0.3132" stop-color="#839900"/><stop offset="0.3367" stop-color="#999500"/><stop offset="0.4009" stop-color="#996200"/><stop offset="0.5153" stop-color="#993400"/><stop offset="0.6265" stop-color="#991900"/><stop offset="0.6280" stop-color="#9f0034"/><stop offset="0.8144" stop-color="#990000"/><stop offset="1.0008" stop-color="#990000"/></linearGradient><linearGradient id="e28" gradientUnits="userSpaceOnUse" x1="1016.5" y1="0" x2="1655" y2="0"><stop offset="0.0000" stop-color="#009959"/><stop offset="0.3164" stop-color="#009994"/><stop offset="0.3179" stop-color="#899900"/><stop offset="0.3367" stop-color="#999400"/><stop offset="0.4009" stop-color="#996200"/><stop offset="0.5153" stop-color="#993400"/><stop offset="0.6139" stop-color="#991c00"/><stop offset="0.6155" stop-color="#9f0039"/><stop offset="0.8191" stop-color="#990000"/><stop offset="1.0008" stop-color="#990000"/></linearGradient><linearGradient id="e29" gradientUnits="userSpaceOnUse" x1="1016.5" y1="0" x2="1655" y2="0"><stop offset="0.0000" stop-color="#00995e"/><stop offset="0.3226" stop-color="#00999b"/><stop offset="0.3242" stop-color="#909900"/><stop offset="0.3383" stop-color="#999200"/><stop offset="0.4041" stop-color="#996000"/><stop offset="0.5215" stop-color="#993200"/><stop offset="0.6014" stop-color="#991e00"/><stop offset="0.6030" stop-color="#a0003e"/><stop offset="0.8238" stop-color="#990000"/><stop offset="1.0008" stop-color="#990000"/></linearGradient><linearGradient id="e30" gradientUnits="userSpaceOnUse" x1="1016.5" y1="0" x2="1655" y2="0"><stop offset="0.0000" stop-color="#009964"/><stop offset="0.3273" stop-color="#0099a2"/><stop offset="0.3289" stop-color="#969900"/><stop offset="0.4025" stop-color="#996000"/><stop offset="0.5184" stop-color="#993300"/><stop offset="0.5873" stop-color="#992100"/><stop offset="0.5889" stop-color="#a10044"/><stop offset="0.8285" stop-color="#990000"/><stop offset="1.0008" stop-color="#990000"/></linearGradient><linearGradient id="e31" gradientUnits="userSpaceOnUse" x1="1016.5" y1="0" x2="1655" y2="0"><stop offset="0.0000" stop-color="#009969"/><stop offset="0.3320" stop-color="#0099a9"/><stop offset="0.3336" stop-color="#999600"/><stop offset="0.3962" stop-color="#996400"/><stop offset="0.5074" stop-color="#993600"/><stop offset="0.5748" stop-color="#992400"/><stop offset="0.5764" stop-color="#a10049"/><stop offset="0.8332" stop-color="#990000"/><stop offset="1.0008" stop-color="#990000"/></linearGradient><linearGradient id="e32" gradientUnits="userSpaceOnUse" x1="1016.5" y1="0" x2="1655" y2="0"><stop offset="0.0000" stop-color="#00996e"/><stop offset="0.3367" stop-color="#0099b0"/><stop offset="0.3383" stop-color="#999100"/><stop offset="0.4041" stop-color="#995f00"/><stop offset="0.5231" stop-color="#993100"/><stop offset="0.5623" stop-color="#992700"/><stop offset="0.5638" stop-color="#a2004e"/><stop offset="0.8363" stop-color="#990000"/><stop offset="1.0008" stop-color="#990000"/></linearGradient><linearGradient id="e33" gradientUnits="userSpaceOnUse" x1="1016.5" y1="0" x2="1655" y2="0"><stop offset="0.0000" stop-color="#009974"/><stop offset="0.3305" stop-color="#0095b0"/><stop offset="0.3414" stop-color="#0093b0"/><stop offset="0.3430" stop-color="#998c00"/><stop offset="0.4135" stop-color="#995a00"/><stop offset="0.5419" stop-color="#992c00"/><stop offset="0.5497" stop-color="#992a00"/><stop offset="0.5513" stop-color="#a20054"/><stop offset="0.8410" stop-color="#990000"/><stop offset="1.0008" stop-color="#990000"/></linearGradient><linearGradient id="e34" gradientUnits="userSpaceOnUse" x1="1016.5" y1="0" x2="1655" y2="0"><stop offset="0.0000" stop-color="#009979"/><stop offset="0.3023" stop-color="#0095b0"/><stop offset="0.3477" stop-color="#008eb0"/><stop offset="0.3493" stop-color="#998500"/><stop offset="0.4244" stop-color="#995400"/><stop offset="0.5372" stop-color="#992d00"/><stop offset="0.5388" stop-color="#a30059"/><stop offset="0.8457" stop-color="#990000"/><stop offset="1.0008" stop-color="#990000"/></linearGradient><linearGradient id="e35" gradientUnits="userSpaceOnUse" x1="1016.5" y1="0" x2="1655" y2="0"><stop offset="0.0000" stop-color="#00997f"/><stop offset="0.2725" stop-color="#0095b0"/><stop offset="0.3524" stop-color="#0089b0"/><stop offset="0.3540" stop-color="#998100"/><stop offset="0.4323" stop-color="#995000"/><stop offset="0.5231" stop-color="#993100"/><stop offset="0.5247" stop-color="#a40060"/><stop offset="0.8504" stop-color="#990000"/><stop offset="1.0008" stop-color="#990000"/></linearGradient><linearGradient id="e36" gradientUnits="userSpaceOnUse" x1="1016.5" y1="0" x2="1655" y2="0"><stop offset="0.0000" stop-color="#009984"/><stop offset="0.2443" stop-color="#0095b0"/><stop offset="0.3571" stop-color="#0084b0"/><stop offset="0.3587" stop-color="#997c00"/><stop offset="0.4417" stop-color="#994c00"/><stop offset="0.5106" stop-color="#993400"/><stop offset="0.5121" stop-color="#a40066"/><stop offset="0.8551" stop-color="#990000"/><stop offset="1.0008" stop-color="#990000"/></linearGradient><linearGradient id="e37" gradientUnits="userSpaceOnUse" x1="1016.5" y1="0" x2="1655" y2="0"><stop offset="0.0000" stop-color="#00998a"/><stop offset="0.2146" stop-color="#0095b0"/><stop offset="0.3618" stop-color="#007fb0"/><stop offset="0.3634" stop-color="#997800"/><stop offset="0.4495" stop-color="#994900"/><stop offset="0.4980" stop-color="#993800"/><stop offset="0.4996" stop-color="#a5006c"/><stop offset="0.8598" stop-color="#990000"/><stop offset="1.0008" stop-color="#990000"/></linearGradient><linearGradient id="e38" gradientUnits="userSpaceOnUse" x1="1016.5" y1="0" x2="1655" y2="0"><stop offset="0.0000" stop-color="#00998f"/><stop offset="0.1864" stop-color="#0095b0"/><stop offset="0.3665" stop-color="#007bb0"/><stop offset="0.3681" stop-color="#997400"/><stop offset="0.4589" stop-color="#994500"/><stop offset="0.4855" stop-color="#993c00"/><stop offset="0.4871" stop-color="#a60073"/><stop offset="0.7659" stop-color="#9c001d"/><stop offset="0.8645" stop-color="#990000"/><stop offset="1.0008" stop-color="#990000"/></linearGradient><linearGradient id="e39" gradientUnits="userSpaceOnUse" x1="1016.5" y1="0" x2="1655" y2="0"><stop offset="0.0000" stop-color="#009995"/><stop offset="0.1582" stop-color="#0095b0"/><stop offset="0.3727" stop-color="#0076b0"/><stop offset="0.3743" stop-color="#997000"/><stop offset="0.4699" stop-color="#994100"/><stop offset="0.4730" stop-color="#994000"/><stop offset="0.4745" stop-color="#a7007a"/><stop offset="0.7220" stop-color="#9e002a"/><stop offset="0.8708" stop-color="#990000"/><stop offset="1.0008" stop-color="#990000"/></linearGradient><linearGradient id="e40" gradientUnits="userSpaceOnUse" x1="1016.5" y1="0" x2="1655" y2="0"><stop offset="0.0000" stop-color="#00999b"/><stop offset="0.1300" stop-color="#0095b0"/><stop offset="0.3774" stop-color="#0072b0"/><stop offset="0.3790" stop-color="#996c00"/><stop offset="0.4605" stop-color="#994400"/><stop offset="0.4620" stop-color="#a70081"/><stop offset="0.6907" stop-color="#9f0034"/><stop offset="0.8755" stop-color="#990000"/><stop offset="1.0008" stop-color="#990000"/></linearGradient><linearGradient id="e41" gradientUnits="userSpaceOnUse" x1="1016.5" y1="0" x2="1655" y2="0"><stop offset="0.0000" stop-color="#0099a0"/><stop offset="0.1034" stop-color="#0094b0"/><stop offset="0.3821" stop-color="#006eb0"/><stop offset="0.3837" stop-color="#996900"/><stop offset="0.4464" stop-color="#994900"/><stop offset="0.4479" stop-color="#a80089"/><stop offset="0.6594" stop-color="#a0003f"/><stop offset="0.8802" stop-color="#990000"/><stop offset="1.0008" stop-color="#990000"/></linearGradient><linearGradient id="e42" gradientUnits="userSpaceOnUse" x1="1016.5" y1="0" x2="1655" y2="0"><stop offset="0.0000" stop-color="#0099a6"/><stop offset="0.0814" stop-color="#0093b0"/><stop offset="0.3868" stop-color="#006bb0"/><stop offset="0.3884" stop-color="#996600"/><stop offset="0.4338" stop-color="#994e00"/><stop offset="0.4354" stop-color="#a90091"/><stop offset="0.6343" stop-color="#a10047"/><stop offset="0.8865" stop-color="#990000"/><stop offset="1.0008" stop-color="#990000"/></linearGradient><linearGradient id="e43" gradientUnits="userSpaceOnUse" x1="1016.5" y1="0" x2="1655" y2="0"><stop offset="0.0000" stop-color="#0099ac"/><stop offset="0.3915" stop-color="#0067b0"/><stop offset="0.3931" stop-color="#996300"/><stop offset="0.4213" stop-color="#995400"/><stop offset="0.4229" stop-color="#aa0099"/><stop offset="0.6092" stop-color="#a20051"/><stop offset="0.8896" stop-color="#990000"/><stop offset="1.0008" stop-color="#990000"/></linearGradient><linearGradient id="e44" gradientUnits="userSpaceOnUse" x1="1016.5" y1="0" x2="1655" y2="0"><stop offset="0.0000" stop-color="#0097b0"/><stop offset="0.3978" stop-color="#0064b0"/><stop offset="0.3994" stop-color="#995f00"/><stop offset="0.4088" stop-color="#995a00"/><stop offset="0.4103" stop-color="#ab00a2"/><stop offset="0.5857" stop-color="#a3005a"/><stop offset="0.8943" stop-color="#990000"/><stop offset="1.0008" stop-color="#990000"/></linearGradient><linearGradient id="e45" gradientUnits="userSpaceOnUse" x1="1016.5" y1="0" x2="1655" y2="0"><stop offset="0.0000" stop-color="#0092b0"/><stop offset="0.3994" stop-color="#0061b0"/><stop offset="0.4009" stop-color="#ac00a9"/><stop offset="0.5670" stop-color="#a40062"/><stop offset="0.8990" stop-color="#990000"/><stop offset="1.0008" stop-color="#990000"/></linearGradient><linearGradient id="e46" gradientUnits="userSpaceOnUse" x1="1016.5" y1="0" x2="1655" y2="0"><stop offset="0.0000" stop-color="#008eb0"/><stop offset="0.3978" stop-color="#005fb0"/><stop offset="0.3994" stop-color="#ac00ad"/><stop offset="0.5623" stop-color="#a40065"/><stop offset="0.9037" stop-color="#990000"/><stop offset="1.0008" stop-color="#990000"/></linearGradient><linearGradient id="e47" gradientUnits="userSpaceOnUse" x1="1016.5" y1="0" x2="1655" y2="0"><stop offset="0.0000" stop-color="#0089b0"/><stop offset="0.3962" stop-color="#005cb0"/><stop offset="0.3978" stop-color="#ad00b0"/><stop offset="0.5607" stop-color="#a50067"/><stop offset="0.9084" stop-color="#990000"/><stop offset="1.0008" stop-color="#990000"/></linearGradient><linearGradient id="e48" gradientUnits="userSpaceOnUse" x1="1016.5" y1="0" x2="1655" y2="0"><stop offset="0.0000" stop-color="#0085b0"/><stop offset="0.3947" stop-color="#005ab0"/><stop offset="0.3962" stop-color="#a900b0"/><stop offset="0.5983" stop-color="#a3005c"/><stop offset="0.9131" stop-color="#990000"/><stop offset="1.0008" stop-color="#990000"/></linearGradient><linearGradient id="e49" gradientUnits="userSpaceOnUse" x1="1016.5" y1="0" x2="1655" y2="0"><stop offset="0.0000" stop-color="#0081b0"/><stop offset="0.3947" stop-color="#0057b0"/><stop offset="0.3962" stop-color="#a700b0"/><stop offset="0.4291" stop-color="#ac00a4"/><stop offset="0.6014" stop-color="#a3005d"/><stop offset="0.9178" stop-color="#990000"/><stop offset="1.0008" stop-color="#990000"/></linearGradient><linearGradient id="e50" gradientUnits="userSpaceOnUse" x1="1016.5" y1="0" x2="1655" y2="0"><stop offset="0.0000" stop-color="#007db0"/><stop offset="0.3931" stop-color="#0055b0"/><stop offset="0.3947" stop-color="#a400b0"/><stop offset="0.4244" stop-color="#ac00a9"/><stop offset="0.5904" stop-color="#a40062"/><stop offset="0.9225" stop-color="#990000"/><stop offset="1.0008" stop-color="#990000"/></linearGradient><linearGradient id="e51" gradientUnits="userSpaceOnUse" x1="1016.5" y1="0" x2="1655" y2="0"><stop offset="0.0000" stop-color="#0079b0"/><stop offset="0.3915" stop-color="#0053b0"/><stop offset="0.3931" stop-color="#a100b0"/><stop offset="0.4276" stop-color="#ac00aa"/><stop offset="0.5936" stop-color="#a40063"/><stop offset="0.9272" stop-color="#990000"/><stop offset="1.0008" stop-color="#990000"/></linearGradient><linearGradient id="e52" gradientUnits="userSpaceOnUse" x1="1016.5" y1="0" x2="1655" y2="0"><stop offset="0.0000" stop-color="#0076b0"/><stop offset="0.3900" stop-color="#0051b0"/><stop offset="0.3915" stop-color="#9e00b0"/><stop offset="0.4307" stop-color="#ac00ab"/><stop offset="0.5951" stop-color="#a40064"/><stop offset="0.9319" stop-color="#990000"/><stop offset="1.0008" stop-color="#990000"/></linearGradient><linearGradient id="e53" gradientUnits="userSpaceOnUse" x1="1016.5" y1="0" x2="1655" y2="0"><stop offset="0.0000" stop-color="#0072b0"/><stop offset="0.3884" stop-color="#004fb0"/><stop offset="0.3900" stop-color="#9c00b0"/><stop offset="0.4354" stop-color="#ac00ab"/><stop offset="0.5998" stop-color="#a40064"/><stop offset="0.9366" stop-color="#990000"/><stop offset="1.0008" stop-color="#990000"/></linearGradient><linearGradient id="e54" gradientUnits="userSpaceOnUse" x1="1016.5" y1="0" x2="1655" y2="0"><stop offset="0.0000" stop-color="#006fb0"/><stop offset="0.3868" stop-color="#004db0"/><stop offset="0.3884" stop-color="#9900b0"/><stop offset="0.4401" stop-color="#ac00ab"/><stop offset="0.6045" stop-color="#a40064"/><stop offset="0.9413" stop-color="#990000"/><stop offset="1.0008" stop-color="#990000"/></linearGradient><linearGradient id="e55" gradientUnits="userSpaceOnUse" x1="1016.5" y1="0" x2="1655" y2="0"><stop offset="0.0000" stop-color="#006cb0"/><stop offset="0.3853" stop-color="#004bb0"/><stop offset="0.3868" stop-color="#9600b0"/><stop offset="0.4448" stop-color="#ac00ab"/><stop offset="0.6092" stop-color="#a40064"/><stop offset="0.9475" stop-color="#990000"/><stop offset="1.0008" stop-color="#990000"/></linearGradient><linearGradient id="e56" gradientUnits="userSpaceOnUse" x1="1016.5" y1="0" x2="1655" y2="0"><stop offset="0.0000" stop-color="#0069b0"/><stop offset="0.3837" stop-color="#0049b0"/><stop offset="0.3853" stop-color="#9300b0"/><stop offset="0.4495" stop-color="#ac00ac"/><stop offset="0.6139" stop-color="#a40064"/><stop offset="0.9522" stop-color="#990000"/><stop offset="1.0008" stop-color="#990000"/></linearGradient><linearGradient id="e57" gradientUnits="userSpaceOnUse" x1="1016.5" y1="0" x2="1655" y2="0"><stop offset="0.0000" stop-color="#0066b0"/><stop offset="0.3821" stop-color="#0048b0"/><stop offset="0.3837" stop-color="#9100b0"/><stop offset="0.4542" stop-color="#ac00ac"/><stop offset="0.6186" stop-color="#a40064"/><stop offset="0.9569" stop-color="#990000"/><stop offset="1.0008" stop-color="#990000"/></linearGradient><linearGradient id="e58" gradientUnits="userSpaceOnUse" x1="1016.5" y1="0" x2="1655" y2="0"><stop offset="0.0000" stop-color="#0063b0"/><stop offset="0.3806" stop-color="#0046b0"/><stop offset="0.3821" stop-color="#8e00b0"/><stop offset="0.4589" stop-color="#ac00ac"/><stop offset="0.6233" stop-color="#a40064"/><stop offset="0.9616" stop-color="#990000"/><stop offset="1.0008" stop-color="#990000"/></linearGradient><linearGradient id="e59" gradientUnits="userSpaceOnUse" x1="1016.5" y1="0" x2="1655" y2="0"><stop offset="0.0000" stop-color="#0060b0"/><stop offset="0.3790" stop-color="#0044b0"/><stop offset="0.3806" stop-color="#8b00b0"/><stop offset="0.4636" stop-color="#ac00ac"/><stop offset="0.6280" stop-color="#a40064"/><stop offset="0.9663" stop-color="#990000"/><stop offset="1.0008" stop-color="#990000"/></linearGradient><linearGradient id="e60" gradientUnits="userSpaceOnUse" x1="1016.5" y1="0" x2="1655" y2="0"><stop offset="0.0000" stop-color="#005eb0"/><stop offset="0.3774" stop-color="#0042b0"/><stop offset="0.3790" stop-color="#8900b0"/><stop offset="0.4683" stop-color="#ac00ac"/><stop offset="0.6327" stop-color="#a40064"/><stop offset="0.9710" stop-color="#990000"/><stop offset="1.0008" stop-color="#990000"/></linearGradient><linearGradient id="e61" gradientUnits="userSpaceOnUse" x1="1016.5" y1="0" x2="1655" y2="0"><stop offset="0.0000" stop-color="#005bb0"/><stop offset="0.3759" stop-color="#0041b0"/><stop offset="0.3774" stop-color="#8600b0"/><stop offset="0.4730" stop-color="#ac00ac"/><stop offset="0.6374" stop-color="#a40064"/><stop offset="0.9757" stop-color="#990000"/><stop offset="1.0008" stop-color="#990000"/></linearGradient><linearGradient id="e62" gradientUnits="userSpaceOnUse" x1="1016.5" y1="0" x2="1655" y2="0"><stop offset="0.0000" stop-color="#0059b0"/><stop offset="0.3743" stop-color="#003fb0"/><stop offset="0.3759" stop-color="#8400b0"/><stop offset="0.4777" stop-color="#ac00ac"/><stop offset="0.6421" stop-color="#a40064"/><stop offset="0.9804" stop-color="#990000"/><stop offset="1.0008" stop-color="#990000"/></linearGradient><linearGradient id="e63" gradientUnits="userSpaceOnUse" x1="1016.5" y1="0" x2="1655" y2="0"><stop offset="0.0000" stop-color="#0056b0"/><stop offset="0.3727" stop-color="#003eb0"/><stop offset="0.3743" stop-color="#8100b0"/><stop offset="0.4824" stop-color="#ac00ac"/><stop offset="0.6468" stop-color="#a40064"/><stop offset="0.9851" stop-color="#990000"/><stop offset="1.0008" stop-color="#990000"/></linearGradient><linearGradient id="e64" gradientUnits="userSpaceOnUse" x1="1016.5" y1="0" x2="1655" y2="0"><stop offset="0.0000" stop-color="#0054b0"/><stop offset="0.3712" stop-color="#003cb0"/><stop offset="0.3727" stop-color="#7f00b0"/><stop offset="0.4871" stop-color="#ac00ac"/><stop offset="0.6515" stop-color="#a40064"/><stop offset="0.9898" stop-color="#990000"/><stop offset="1.0008" stop-color="#990000"/></linearGradient><linearGradient id="e65" gradientUnits="userSpaceOnUse" x1="1016.5" y1="0" x2="1655" y2="0"><stop offset="0.0000" stop-color="#0052b0"/><stop offset="0.3696" stop-color="#003bb0"/><stop offset="0.3712" stop-color="#7d00b0"/><stop offset="0.4918" stop-color="#ac00ac"/><stop offset="0.6562" stop-color="#a40064"/><stop offset="0.9945" stop-color="#990000"/><stop offset="1.0008" stop-color="#990000"/></linearGradient><linearGradient id="e66" gradientUnits="userSpaceOnUse" x1="1016.5" y1="0" x2="1655" y2="0"><stop offset="0.0000" stop-color="#0050b0"/><stop offset="0.3681" stop-color="#0039b0"/><stop offset="0.3696" stop-color="#7a00b0"/><stop offset="0.4965" stop-color="#ac00ac"/><stop offset="0.6594" stop-color="#a40065"/><stop offset="0.9992" stop-color="#990000"/><stop offset="1.0008" stop-color="#990000"/></linearGradient><linearGradient id="e67" gradientUnits="userSpaceOnUse" x1="1016.5" y1="0" x2="1655" y2="0"><stop offset="0.0000" stop-color="#004eb0"/><stop offset="0.3665" stop-color="#0038b0"/><stop offset="0.3681" stop-color="#7800b0"/><stop offset="0.5012" stop-color="#ac00ac"/><stop offset="0.6641" stop-color="#a40065"/><stop offset="1.0008" stop-color="#990000"/></linearGradient><linearGradient id="e68" gradientUnits="userSpaceOnUse" x1="1016.5" y1="0" x2="1655" y2="0"><stop offset="0.0000" stop-color="#004cb0"/><stop offset="0.3649" stop-color="#0036b0"/><stop offset="0.3665" stop-color="#7600b0"/><stop offset="0.5059" stop-color="#ac00ac"/><stop offset="0.6688" stop-color="#a40065"/><stop offset="1.0008" stop-color="#990000"/></linearGradient><linearGradient id="e69" gradientUnits="userSpaceOnUse" x1="1016.5" y1="0" x2="1655" y2="0"><stop offset="0.0000" stop-color="#004ab0"/><stop offset="0.3649" stop-color="#0035b0"/><stop offset="0.3665" stop-color="#7400b0"/><stop offset="0.5106" stop-color="#ac00ac"/><stop offset="0.6735" stop-color="#a40065"/><stop offset="1.0008" stop-color="#990000"/></linearGradient><linearGradient id="e70" gradientUnits="userSpaceOnUse" x1="1016.5" y1="0" x2="1655" y2="0"><stop offset="0.0000" stop-color="#0048b0"/><stop offset="0.3634" stop-color="#0033b0"/><stop offset="0.3649" stop-color="#7200b0"/><stop offset="0.5153" stop-color="#ac00ac"/><stop offset="0.6782" stop-color="#a40065"/><stop offset="1.0008" stop-color="#990003"/></linearGradient><linearGradient id="e71" gradientUnits="userSpaceOnUse" x1="1016.5" y1="0" x2="1655" y2="0"><stop offset="0.0000" stop-color="#0046b0"/><stop offset="0.3618" stop-color="#0032b0"/><stop offset="0.3634" stop-color="#7000b0"/><stop offset="0.5200" stop-color="#ac00ac"/><stop offset="0.6829" stop-color="#a40065"/><stop offset="1.0008" stop-color="#9a0005"/></linearGradient><linearGradient id="e72" gradientUnits="userSpaceOnUse" x1="1016.5" y1="0" x2="1655" y2="0"><stop offset="0.0000" stop-color="#0044b0"/><stop offset="0.3602" stop-color="#0031b0"/><stop offset="0.3618" stop-color="#6e00b0"/><stop offset="0.5247" stop-color="#ac00ac"/><stop offset="0.6875" stop-color="#a40065"/><stop offset="1.0008" stop-color="#9a0007"/></linearGradient><linearGradient id="e73" gradientUnits="userSpaceOnUse" x1="1016.5" y1="0" x2="1655" y2="0"><stop offset="0.0000" stop-color="#0042b0"/><stop offset="0.3587" stop-color="#002fb0"/><stop offset="0.3602" stop-color="#6b00b0"/><stop offset="0.5294" stop-color="#ac00ad"/><stop offset="0.6922" stop-color="#a40065"/><stop offset="1.0008" stop-color="#9a0009"/></linearGradient><linearGradient id="e74" gradientUnits="userSpaceOnUse" x1="1016.5" y1="0" x2="1655" y2="0"><stop offset="0.0000" stop-color="#0041b0"/><stop offset="0.3571" stop-color="#002eb0"/><stop offset="0.3587" stop-color="#6900b0"/><stop offset="0.5341" stop-color="#ac00ad"/><stop offset="0.6969" stop-color="#a40065"/><stop offset="1.0008" stop-color="#9a000b"/></linearGradient><linearGradient id="e75" gradientUnits="userSpaceOnUse" x1="1016.5" y1="0" x2="1655" y2="0"><stop offset="0.0000" stop-color="#003fb0"/><stop offset="0.3555" stop-color="#002db0"/><stop offset="0.3571" stop-color="#6700b0"/><stop offset="0.5403" stop-color="#ac00ac"/><stop offset="0.7048" stop-color="#a40064"/><stop offset="1.0008" stop-color="#9a000c"/></linearGradient><linearGradient id="e76" gradientUnits="userSpaceOnUse" x1="1016.5" y1="0" x2="1655" y2="0"><stop offset="0.0000" stop-color="#003db0"/><stop offset="0.3540" stop-color="#002cb0"/><stop offset="0.3555" stop-color="#6500b0"/><stop offset="0.5450" stop-color="#ac00ac"/><stop offset="0.7095" stop-color="#a40064"/><stop offset="1.0008" stop-color="#9a000e"/></linearGradient><linearGradient id="e77" gradientUnits="userSpaceOnUse" x1="1016.5" y1="0" x2="1655" y2="0"><stop offset="0.0000" stop-color="#003cb0"/><stop offset="0.3524" stop-color="#002bb0"/><stop offset="0.3540" stop-color="#6300b0"/><stop offset="0.5497" stop-color="#ac00ac"/><stop offset="0.7142" stop-color="#a40064"/><stop offset="1.0008" stop-color="#9b000f"/></linearGradient><linearGradient id="e78" gradientUnits="userSpaceOnUse" x1="1016.5" y1="0" x2="1655" y2="0"><stop offset="0.0000" stop-color="#003ab0"/><stop offset="0.3508" stop-color="#0029b0"/><stop offset="0.3524" stop-color="#6100b0"/><stop offset="0.5435" stop-color="#ab00b0"/><stop offset="0.7283" stop-color="#a40061"/><stop offset="1.0008" stop-color="#9b0011"/></linearGradient><linearGradient id="e79" gradientUnits="userSpaceOnUse" x1="1016.5" y1="0" x2="1655" y2="0"><stop offset="0.0000" stop-color="#0039b0"/><stop offset="0.3493" stop-color="#0028b0"/><stop offset="0.3508" stop-color="#5f00b0"/><stop offset="0.5450" stop-color="#a900b0"/><stop offset="0.7486" stop-color="#a3005c"/><stop offset="1.0008" stop-color="#9b0012"/></linearGradient><linearGradient id="e80" gradientUnits="userSpaceOnUse" x1="1016.5" y1="0" x2="1655" y2="0"><stop offset="0.0000" stop-color="#0037b0"/><stop offset="0.3477" stop-color="#0027b0"/><stop offset="0.3493" stop-color="#5d00b0"/><stop offset="0.5466" stop-color="#a800b0"/><stop offset="0.5842" stop-color="#ab00a1"/><stop offset="0.7596" stop-color="#a30059"/><stop offset="1.0008" stop-color="#9b0013"/></linearGradient><linearGradient id="e81" gradientUnits="userSpaceOnUse" x1="1016.5" y1="0" x2="1655" y2="0"><stop offset="0.0000" stop-color="#0036b0"/><stop offset="0.3461" stop-color="#0026b0"/><stop offset="0.3477" stop-color="#5b00b0"/><stop offset="0.5466" stop-color="#a600b0"/><stop offset="0.5764" stop-color="#ac00a8"/><stop offset="0.7439" stop-color="#a40060"/><stop offset="1.0008" stop-color="#9b0015"/></linearGradient><linearGradient id="e82" gradientUnits="userSpaceOnUse" x1="1016.5" y1="0" x2="1655" y2="0"><stop offset="0.0000" stop-color="#0034b0"/><stop offset="0.3446" stop-color="#0125b0"/><stop offset="0.3461" stop-color="#5900b0"/><stop offset="0.5482" stop-color="#a400b0"/><stop offset="0.5779" stop-color="#ac00aa"/><stop offset="0.7439" stop-color="#a40062"/><stop offset="1.0008" stop-color="#9b0016"/></linearGradient><linearGradient id="e83" gradientUnits="userSpaceOnUse" x1="1016.5" y1="0" x2="1655" y2="0"><stop offset="0.0000" stop-color="#0033b0"/><stop offset="0.3430" stop-color="#0124b0"/><stop offset="0.3446" stop-color="#5700b0"/><stop offset="0.5497" stop-color="#a300b0"/><stop offset="0.5826" stop-color="#ac00aa"/><stop offset="0.7486" stop-color="#a40062"/><stop offset="1.0008" stop-color="#9c0018"/></linearGradient><linearGradient id="e84" gradientUnits="userSpaceOnUse" x1="1016.5" y1="0" x2="1655" y2="0"><stop offset="0.0000" stop-color="#0031b0"/><stop offset="0.3414" stop-color="#0223b0"/><stop offset="0.3430" stop-color="#5500b0"/><stop offset="0.5513" stop-color="#a100b0"/><stop offset="0.5857" stop-color="#ac00ab"/><stop offset="0.7502" stop-color="#a40063"/><stop offset="1.0008" stop-color="#9c0019"/></linearGradient><linearGradient id="e85" gradientUnits="userSpaceOnUse" x1="1016.5" y1="0" x2="1655" y2="0"><stop offset="0.0000" stop-color="#0030b0"/><stop offset="0.3399" stop-color="#0222b0"/><stop offset="0.3414" stop-color="#5300b0"/><stop offset="0.5513" stop-color="#9f00b0"/><stop offset="0.5904" stop-color="#ac00ab"/><stop offset="0.7549" stop-color="#a40063"/><stop offset="1.0008" stop-color="#9c001a"/></linearGradient><linearGradient id="e86" gradientUnits="userSpaceOnUse" x1="1016.5" y1="0" x2="1655" y2="0"><stop offset="0.0000" stop-color="#002fb0"/><stop offset="0.3383" stop-color="#0320b0"/><stop offset="0.3399" stop-color="#5100b0"/><stop offset="0.5529" stop-color="#9d00b0"/><stop offset="0.5936" stop-color="#ac00ac"/><stop offset="0.7580" stop-color="#a40064"/><stop offset="1.0008" stop-color="#9c001c"/></linearGradient><linearGradient id="e87" gradientUnits="userSpaceOnUse" x1="1016.5" y1="0" x2="1655" y2="0"><stop offset="0.0000" stop-color="#002db0"/><stop offset="0.3367" stop-color="#041fb0"/><stop offset="0.3383" stop-color="#4f00b0"/><stop offset="0.5544" stop-color="#9c00b0"/><stop offset="0.5983" stop-color="#ac00ac"/><stop offset="0.7627" stop-color="#a40064"/><stop offset="1.0008" stop-color="#9c001d"/></linearGradient><linearGradient id="e88" gradientUnits="userSpaceOnUse" x1="1016.5" y1="0" x2="1655" y2="0"><stop offset="0.0000" stop-color="#002cb0"/><stop offset="0.3352" stop-color="#041eb0"/><stop offset="0.3367" stop-color="#4e00b0"/><stop offset="0.5560" stop-color="#9b00b0"/><stop offset="0.6030" stop-color="#ac00ac"/><stop offset="0.7674" stop-color="#a40064"/><stop offset="1.0008" stop-color="#9c001e"/></linearGradient><linearGradient id="e89" gradientUnits="userSpaceOnUse" x1="1016.5" y1="0" x2="1655" y2="0"><stop offset="0.0000" stop-color="#002bb0"/><stop offset="0.3336" stop-color="#051db0"/><stop offset="0.3352" stop-color="#4c00b0"/><stop offset="0.5576" stop-color="#9900b0"/><stop offset="0.6077" stop-color="#ac00ac"/><stop offset="0.7721" stop-color="#a40064"/><stop offset="1.0008" stop-color="#9c0020"/></linearGradient><linearGradient id="e90" gradientUnits="userSpaceOnUse" x1="1016.5" y1="0" x2="1655" y2="0"><stop offset="0.0000" stop-color="#0029b0"/><stop offset="0.3336" stop-color="#051cb0"/><stop offset="0.3352" stop-color="#4a00b0"/><stop offset="0.5607" stop-color="#9800b0"/><stop offset="0.6124" stop-color="#ac00ac"/><stop offset="0.7768" stop-color="#a40064"/><stop offset="1.0008" stop-color="#9d0021"/></linearGradient><linearGradient id="e91" gradientUnits="userSpaceOnUse" x1="1016.5" y1="0" x2="1655" y2="0"><stop offset="0.0000" stop-color="#0028b0"/><stop offset="0.3320" stop-color="#061bb0"/><stop offset="0.3336" stop-color="#4900b0"/><stop offset="0.5623" stop-color="#9700b0"/><stop offset="0.6171" stop-color="#ac00ac"/><stop offset="0.7815" stop-color="#a40064"/><stop offset="1.0008" stop-color="#9d0022"/></linearGradient><linearGradient id="e92" gradientUnits="userSpaceOnUse" x1="1016.5" y1="0" x2="1655" y2="0"><stop offset="0.0000" stop-color="#0027b0"/><stop offset="0.3305" stop-color="#061ab0"/><stop offset="0.3320" stop-color="#4700b0"/><stop offset="0.5638" stop-color="#9600b0"/><stop offset="0.6218" stop-color="#ac00ac"/><stop offset="0.7862" stop-color="#a40064"/><stop offset="1.0008" stop-color="#9d0024"/></linearGradient><linearGradient id="e93" gradientUnits="userSpaceOnUse" x1="1016.5" y1="0" x2="1655" y2="0"><stop offset="0.0000" stop-color="#0026b0"/><stop offset="0.3289" stop-color="#0719b0"/><stop offset="0.3305" stop-color="#4500b0"/><stop offset="0.5654" stop-color="#9400b0"/><stop offset="0.6265" stop-color="#ac00ac"/><stop offset="0.7909" stop-color="#a40064"/><stop offset="1.0008" stop-color="#9d0025"/></linearGradient><linearGradient id="e94" gradientUnits="userSpaceOnUse" x1="1016.5" y1="0" x2="1655" y2="0"><stop offset="0.0000" stop-color="#0125b0"/><stop offset="0.3273" stop-color="#0718b0"/><stop offset="0.3289" stop-color="#4300b0"/><stop offset="0.5670" stop-color="#9300b0"/><stop offset="0.6312" stop-color="#ac00ac"/><stop offset="0.7956" stop-color="#a40064"/><stop offset="1.0008" stop-color="#9d0026"/></linearGradient><linearGradient id="e95" gradientUnits="userSpaceOnUse" x1="1016.5" y1="0" x2="1655" y2="0"><stop offset="0.0000" stop-color="#0123b0"/><stop offset="0.3258" stop-color="#0817b0"/><stop offset="0.3273" stop-color="#4100b0"/><stop offset="0.5685" stop-color="#9200b0"/><stop offset="0.6359" stop-color="#ac00ac"/><stop offset="0.7987" stop-color="#a40065"/><stop offset="1.0008" stop-color="#9d0028"/></linearGradient><linearGradient id="e96" gradientUnits="userSpaceOnUse" x1="1016.5" y1="0" x2="1655" y2="0"><stop offset="0.0000" stop-color="#0222b0"/><stop offset="0.3242" stop-color="#0816b0"/><stop offset="0.3258" stop-color="#3f00b0"/><stop offset="0.5701" stop-color="#9000b0"/><stop offset="0.6406" stop-color="#ac00ac"/><stop offset="0.8034" stop-color="#a40065"/><stop offset="1.0008" stop-color="#9e0029"/></linearGradient><linearGradient id="e97" gradientUnits="userSpaceOnUse" x1="1016.5" y1="0" x2="1655" y2="0"><stop offset="0.0000" stop-color="#0321b0"/><stop offset="0.3226" stop-color="#0915b0"/><stop offset="0.3242" stop-color="#3e00b0"/><stop offset="0.5732" stop-color="#9000b0"/><stop offset="0.6468" stop-color="#ac00ab"/><stop offset="0.8113" stop-color="#a40064"/><stop offset="1.0008" stop-color="#9e002a"/></linearGradient><linearGradient id="e98" gradientUnits="userSpaceOnUse" x1="1016.5" y1="0" x2="1655" y2="0"><stop offset="0.0000" stop-color="#0320b0"/><stop offset="0.3211" stop-color="#0914b0"/><stop offset="0.3226" stop-color="#3c00b0"/><stop offset="0.5748" stop-color="#8e00b0"/><stop offset="0.6515" stop-color="#ac00ab"/><stop offset="0.8160" stop-color="#a40064"/><stop offset="1.0008" stop-color="#9e002c"/></linearGradient><linearGradient id="e99" gradientUnits="userSpaceOnUse" x1="1016.5" y1="0" x2="1655" y2="0"><stop offset="0.0000" stop-color="#041fb0"/><stop offset="0.3195" stop-color="#0a14b0"/><stop offset="0.3211" stop-color="#3a00b0"/><stop offset="0.5764" stop-color="#8d00b0"/><stop offset="0.6562" stop-color="#ac00ab"/><stop offset="0.8207" stop-color="#a40064"/><stop offset="1.0008" stop-color="#9e002d"/></linearGradient><linearGradient id="e100" gradientUnits="userSpaceOnUse" x1="1016.5" y1="0" x2="1655" y2="0"><stop offset="0.0000" stop-color="#041eb0"/><stop offset="0.3179" stop-color="#0a13b0"/><stop offset="0.3195" stop-color="#3800b0"/><stop offset="0.5795" stop-color="#8c00b0"/><stop offset="0.6609" stop-color="#ac00ac"/><stop offset="0.8254" stop-color="#a40064"/><stop offset="1.0008" stop-color="#9e002e"/></linearGradient><linearGradient id="e101" gradientUnits="userSpaceOnUse" x1="1016.5" y1="0" x2="1655" y2="0"><stop offset="0.0000" stop-color="#051db0"/><stop offset="0.3164" stop-color="#0b12b0"/><stop offset="0.3179" stop-color="#3600b0"/><stop offset="0.5826" stop-color="#8c00b0"/><stop offset="0.6656" stop-color="#ac00ac"/><stop offset="0.8301" stop-color="#a40064"/><stop offset="1.0008" stop-color="#9e002f"/></linearGradient><linearGradient id="e102" gradientUnits="userSpaceOnUse" x1="1016.5" y1="0" x2="1655" y2="0"><stop offset="0.0000" stop-color="#051cb0"/><stop offset="0.3148" stop-color="#0b11b0"/><stop offset="0.3164" stop-color="#3500b0"/><stop offset="0.5842" stop-color="#8a00b0"/><stop offset="0.6703" stop-color="#ac00ac"/><stop offset="0.8348" stop-color="#a40064"/><stop offset="1.0008" stop-color="#9e0031"/></linearGradient><linearGradient id="e103" gradientUnits="userSpaceOnUse" x1="1016.5" y1="0" x2="1655" y2="0"><stop offset="0.0000" stop-color="#061bb0"/><stop offset="0.3132" stop-color="#0c10b0"/><stop offset="0.3148" stop-color="#3300b0"/><stop offset="0.5873" stop-color="#8a00b0"/><stop offset="0.6750" stop-color="#ac00ac"/><stop offset="0.8395" stop-color="#a40064"/><stop offset="1.0008" stop-color="#9f0032"/></linearGradient><linearGradient id="e104" gradientUnits="userSpaceOnUse" x1="1016.5" y1="0" x2="1655" y2="0"><stop offset="0.0000" stop-color="#071ab0"/><stop offset="0.3117" stop-color="#0c0fb0"/><stop offset="0.3132" stop-color="#3100b0"/><stop offset="0.5904" stop-color="#8900b0"/><stop offset="0.6797" stop-color="#ac00ac"/><stop offset="0.8442" stop-color="#a40064"/><stop offset="1.0008" stop-color="#9f0033"/></linearGradient><linearGradient id="e105" gradientUnits="userSpaceOnUse" x1="1016.5" y1="0" x2="1655" y2="0"><stop offset="0.0000" stop-color="#0719b0"/><stop offset="0.3101" stop-color="#0d0eb0"/><stop offset="0.3117" stop-color="#2f00b0"/><stop offset="0.5936" stop-color="#8800b0"/><stop offset="0.6844" stop-color="#ac00ac"/><stop offset="0.8489" stop-color="#a40064"/><stop offset="1.0008" stop-color="#9f0035"/></linearGradient><linearGradient id="e106" gradientUnits="userSpaceOnUse" x1="1016.5" y1="0" x2="1655" y2="0"><stop offset="0.0000" stop-color="#0818b0"/><stop offset="0.3085" stop-color="#0d0db0"/><stop offset="0.3101" stop-color="#2d00b0"/><stop offset="0.5967" stop-color="#8800b0"/><stop offset="0.6891" stop-color="#ac00ac"/><stop offset="0.8536" stop-color="#a40064"/><stop offset="1.0008" stop-color="#9f0036"/></linearGradient><linearGradient id="e107" gradientUnits="userSpaceOnUse" x1="1016.5" y1="0" x2="1655" y2="0"><stop offset="0.0000" stop-color="#0817b0"/><stop offset="0.3070" stop-color="#0e0cb0"/><stop offset="0.3085" stop-color="#2b00b0"/><stop offset="0.6014" stop-color="#8800b0"/><stop offset="0.6938" stop-color="#ac00ac"/><stop offset="0.8583" stop-color="#a40064"/><stop offset="1.0008" stop-color="#9f0038"/></linearGradient><linearGradient id="e108" gradientUnits="userSpaceOnUse" x1="1016.5" y1="0" x2="1655" y2="0"><stop offset="0.0000" stop-color="#0916b0"/><stop offset="0.3054" stop-color="#0e0bb0"/><stop offset="0.3070" stop-color="#2900b0"/><stop offset="0.6045" stop-color="#8700b0"/><stop offset="0.6985" stop-color="#ac00ac"/><stop offset="0.8630" stop-color="#a40064"/><stop offset="1.0008" stop-color="#9f0039"/></linearGradient><linearGradient id="e109" gradientUnits="userSpaceOnUse" x1="1016.5" y1="0" x2="1655" y2="0"><stop offset="0.0000" stop-color="#0915b0"/><stop offset="0.3038" stop-color="#0f0ab0"/><stop offset="0.3054" stop-color="#2800b0"/><stop offset="0.6092" stop-color="#8700b0"/><stop offset="0.7032" stop-color="#ac00ac"/><stop offset="0.8677" stop-color="#a40064"/><stop offset="1.0008" stop-color="#a0003a"/></linearGradient><linearGradient id="e110" gradientUnits="userSpaceOnUse" x1="1016.5" y1="0" x2="1655" y2="0"><stop offset="0.0000" stop-color="#0a14b0"/><stop offset="0.3038" stop-color="#0f09b0"/><stop offset="0.3054" stop-color="#2600b0"/><stop offset="0.6139" stop-color="#8700b0"/><stop offset="0.7079" stop-color="#ac00ac"/><stop offset="0.8708" stop-color="#a40065"/><stop offset="1.0008" stop-color="#a0003c"/></linearGradient><linearGradient id="e111" gradientUnits="userSpaceOnUse" x1="1016.5" y1="0" x2="1655" y2="0"><stop offset="0.0000" stop-color="#0a13b0"/><stop offset="0.3023" stop-color="#1008b0"/><stop offset="0.3038" stop-color="#2400b0"/><stop offset="0.6186" stop-color="#8700b0"/><stop offset="0.7126" stop-color="#ac00ac"/><stop offset="0.8755" stop-color="#a40065"/><stop offset="1.0008" stop-color="#a0003d"/></linearGradient><linearGradient id="e112" gradientUnits="userSpaceOnUse" x1="1016.5" y1="0" x2="1655" y2="0"><stop offset="0.0000" stop-color="#0b12b0"/><stop offset="0.3007" stop-color="#1007b0"/><stop offset="0.3023" stop-color="#2200b0"/><stop offset="0.6233" stop-color="#8700b0"/><stop offset="0.7173" stop-color="#ac00ac"/><stop offset="0.8802" stop-color="#a40065"/><stop offset="1.0008" stop-color="#a0003e"/></linearGradient><linearGradient id="e113" gradientUnits="userSpaceOnUse" x1="1016.5" y1="0" x2="1655" y2="0"><stop offset="0.0000" stop-color="#0b11b0"/><stop offset="0.2991" stop-color="#1106b0"/><stop offset="0.3007" stop-color="#2000b0"/><stop offset="0.6296" stop-color="#8700b0"/><stop offset="0.7220" stop-color="#ac00ac"/><stop offset="0.8849" stop-color="#a40065"/><stop offset="1.0008" stop-color="#a00040"/></linearGradient><linearGradient id="e114" gradientUnits="userSpaceOnUse" x1="1016.5" y1="0" x2="1655" y2="0"><stop offset="0.0000" stop-color="#0c10b0"/><stop offset="0.2976" stop-color="#1105b0"/><stop offset="0.2991" stop-color="#1e00b0"/><stop offset="0.6359" stop-color="#8800b0"/><stop offset="0.7283" stop-color="#ac00ac"/><stop offset="0.8927" stop-color="#a40064"/><stop offset="1.0008" stop-color="#a00041"/></linearGradient><linearGradient id="e115" gradientUnits="userSpaceOnUse" x1="1016.5" y1="0" x2="1655" y2="0"><stop offset="0.0000" stop-color="#0c0fb0"/><stop offset="0.2960" stop-color="#1204b0"/><stop offset="0.2976" stop-color="#1b00b0"/><stop offset="0.6421" stop-color="#8800b0"/><stop offset="0.7330" stop-color="#ac00ac"/><stop offset="0.8974" stop-color="#a40064"/><stop offset="1.0008" stop-color="#a00043"/></linearGradient><linearGradient id="e116" gradientUnits="userSpaceOnUse" x1="1016.5" y1="0" x2="1655" y2="0"><stop offset="0.0000" stop-color="#0d0eb0"/><stop offset="0.2944" stop-color="#1302b0"/><stop offset="0.3007" stop-color="#1b00b0"/><stop offset="0.6484" stop-color="#8900b0"/><stop offset="0.7377" stop-color="#ac00ac"/><stop offset="0.9021" stop-color="#a40064"/><stop offset="1.0008" stop-color="#a10044"/></linearGradient><linearGradient id="e117" gradientUnits="userSpaceOnUse" x1="1016.5" y1="0" x2="1655" y2="0"><stop offset="0.0000" stop-color="#0d0db0"/><stop offset="0.2976" stop-color="#1700b0"/><stop offset="0.6594" stop-color="#8b00b0"/><stop offset="0.7424" stop-color="#ac00ac"/><stop offset="0.9068" stop-color="#a40064"/><stop offset="1.0008" stop-color="#a10046"/></linearGradient><linearGradient id="e118" gradientUnits="userSpaceOnUse" x1="1016.5" y1="0" x2="1655" y2="0"><stop offset="0.0000" stop-color="#0e0cb0"/><stop offset="0.3038" stop-color="#1800b0"/><stop offset="0.6625" stop-color="#8b00b0"/><stop offset="0.7471" stop-color="#ac00ac"/><stop offset="0.9115" stop-color="#a40064"/><stop offset="1.0008" stop-color="#a10047"/></linearGradient><linearGradient id="e119" gradientUnits="userSpaceOnUse" x1="1016.5" y1="0" x2="1655" y2="0"><stop offset="0.0000" stop-color="#0e0ab0"/><stop offset="0.3085" stop-color="#1800b0"/><stop offset="0.6672" stop-color="#8b00b0"/><stop offset="0.7518" stop-color="#ac00ac"/><stop offset="0.9162" stop-color="#a40064"/><stop offset="1.0008" stop-color="#a10048"/></linearGradient><linearGradient id="e120" gradientUnits="userSpaceOnUse" x1="1016.5" y1="0" x2="1655" y2="0"><stop offset="0.0000" stop-color="#0f09b0"/><stop offset="0.3132" stop-color="#1800b0"/><stop offset="0.6719" stop-color="#8b00b0"/><stop offset="0.7565" stop-color="#ac00ac"/><stop offset="0.9209" stop-color="#a40064"/><stop offset="1.0008" stop-color="#a1004a"/></linearGradient><linearGradient id="e121" gradientUnits="userSpaceOnUse" x1="1016.5" y1="0" x2="1655" y2="0"><stop offset="0.0000" stop-color="#1008b0"/><stop offset="0.3179" stop-color="#1800b0"/><stop offset="0.6766" stop-color="#8b00b0"/><stop offset="0.7612" stop-color="#ac00ac"/><stop offset="0.9256" stop-color="#a40064"/><stop offset="1.0008" stop-color="#a1004b"/></linearGradient><linearGradient id="e122" gradientUnits="userSpaceOnUse" x1="1016.5" y1="0" x2="1655" y2="0"><stop offset="0.0000" stop-color="#1007b0"/><stop offset="0.3226" stop-color="#1800b0"/><stop offset="0.6813" stop-color="#8b00b0"/><stop offset="0.7659" stop-color="#ac00ac"/><stop offset="0.9303" stop-color="#a40064"/><stop offset="1.0008" stop-color="#a2004d"/></linearGradient><linearGradient id="e123" gradientUnits="userSpaceOnUse" x1="1016.5" y1="0" x2="1655" y2="0"><stop offset="0.0000" stop-color="#1106b0"/><stop offset="0.3273" stop-color="#1800b0"/><stop offset="0.6860" stop-color="#8b00b0"/><stop offset="0.7706" stop-color="#ac00ac"/><stop offset="0.9350" stop-color="#a40064"/><stop offset="1.0008" stop-color="#a2004e"/></linearGradient><linearGradient id="e124" gradientUnits="userSpaceOnUse" x1="1016.5" y1="0" x2="1655" y2="0"><stop offset="0.0000" stop-color="#1105b0"/><stop offset="0.3320" stop-color="#1800b0"/><stop offset="0.6907" stop-color="#8b00b0"/><stop offset="0.7753" stop-color="#ac00ac"/><stop offset="0.9381" stop-color="#a40065"/><stop offset="1.0008" stop-color="#a20050"/></linearGradient><linearGradient id="e125" gradientUnits="userSpaceOnUse" x1="1016.5" y1="0" x2="1655" y2="0"><stop offset="0.0000" stop-color="#1204b0"/><stop offset="0.3367" stop-color="#1700b0"/><stop offset="0.6969" stop-color="#8b00b0"/><stop offset="0.7800" stop-color="#ac00ac"/><stop offset="0.9428" stop-color="#a40065"/><stop offset="1.0008" stop-color="#a20051"/></linearGradient><linearGradient id="e126" gradientUnits="userSpaceOnUse" x1="1016.5" y1="0" x2="1655" y2="0"><stop offset="0.0000" stop-color="#1302b0"/><stop offset="0.3414" stop-color="#1700b0"/><stop offset="0.7016" stop-color="#8b00b0"/><stop offset="0.7847" stop-color="#ac00ac"/><stop offset="0.9475" stop-color="#a40065"/><stop offset="1.0008" stop-color="#a20053"/></linearGradient><linearGradient id="e127" gradientUnits="userSpaceOnUse" x1="1016.5" y1="0" x2="1655" y2="0"><stop offset="0.0000" stop-color="#1401b0"/><stop offset="0.3461" stop-color="#1700b0"/><stop offset="0.7063" stop-color="#8b00b0"/><stop offset="0.7894" stop-color="#ac00ac"/><stop offset="0.9522" stop-color="#a40065"/><stop offset="1.0008" stop-color="#a20054"/></linearGradient><linearGradient id="e128" gradientUnits="userSpaceOnUse" x1="1016.5" y1="0" x2="1655" y2="0"><stop offset="0.0000" stop-color="#1400b0"/><stop offset="0.3508" stop-color="#1700b0"/><stop offset="0.7110" stop-color="#8b00b0"/><stop offset="0.7956" stop-color="#ac00ab"/><stop offset="0.9601" stop-color="#a40064"/><stop offset="1.0008" stop-color="#a30056"/></linearGradient><linearGradient id="e129" gradientUnits="userSpaceOnUse" x1="1016.5" y1="0" x2="1655" y2="0"><stop offset="0.0000" stop-color="#1400b0"/><stop offset="0.3555" stop-color="#1700b0"/><stop offset="0.7157" stop-color="#8b00b0"/><stop offset="0.8003" stop-color="#ac00ac"/><stop offset="0.9648" stop-color="#a40064"/><stop offset="1.0008" stop-color="#a30058"/></linearGradient><linearGradient id="e130" gradientUnits="userSpaceOnUse" x1="1016.5" y1="0" x2="1655" y2="0"><stop offset="0.0000" stop-color="#1400b0"/><stop offset="0.3618" stop-color="#1800b0"/><stop offset="0.7189" stop-color="#8a00b0"/><stop offset="0.8050" stop-color="#ac00ac"/><stop offset="0.9695" stop-color="#a40064"/><stop offset="1.0008" stop-color="#a30059"/></linearGradient><linearGradient id="e131" gradientUnits="userSpaceOnUse" x1="1016.5" y1="0" x2="1655" y2="0"><stop offset="0.0000" stop-color="#1400b0"/><stop offset="0.3665" stop-color="#1800b0"/><stop offset="0.7236" stop-color="#8a00b0"/><stop offset="0.8097" stop-color="#ac00ac"/><stop offset="0.9742" stop-color="#a40064"/><stop offset="1.0008" stop-color="#a3005b"/></linearGradient><linearGradient id="e132" gradientUnits="userSpaceOnUse" x1="1016.5" y1="0" x2="1655" y2="0"><stop offset="0.0000" stop-color="#1400b0"/><stop offset="0.3712" stop-color="#1800b0"/><stop offset="0.7298" stop-color="#8b00b0"/><stop offset="0.8144" stop-color="#ac00ac"/><stop offset="0.9789" stop-color="#a40064"/><stop offset="1.0008" stop-color="#a3005c"/></linearGradient><linearGradient id="e133" gradientUnits="userSpaceOnUse" x1="1016.5" y1="0" x2="1655" y2="0"><stop offset="0.0000" stop-color="#1400b0"/><stop offset="0.3759" stop-color="#1800b0"/><stop offset="0.7345" stop-color="#8b00b0"/><stop offset="0.8191" stop-color="#ac00ac"/><stop offset="0.9836" stop-color="#a40064"/><stop offset="1.0008" stop-color="#a4005e"/></linearGradient><linearGradient id="e134" gradientUnits="userSpaceOnUse" x1="1016.5" y1="0" x2="1655" y2="0"><stop offset="0.0000" stop-color="#1400b0"/><stop offset="0.3806" stop-color="#1800b0"/><stop offset="0.7392" stop-color="#8b00b0"/><stop offset="0.8238" stop-color="#ac00ac"/><stop offset="0.9883" stop-color="#a40064"/><stop offset="1.0008" stop-color="#a40060"/></linearGradient><linearGradient id="e135" gradientUnits="userSpaceOnUse" x1="1016.5" y1="0" x2="1655" y2="0"><stop offset="0.0000" stop-color="#1400b0"/><stop offset="0.3853" stop-color="#1800b0"/><stop offset="0.7439" stop-color="#8b00b0"/><stop offset="0.8285" stop-color="#ac00ac"/><stop offset="0.9930" stop-color="#a40064"/><stop offset="1.0008" stop-color="#a40061"/></linearGradient><linearGradient id="e136" gradientUnits="userSpaceOnUse" x1="1016.5" y1="0" x2="1655" y2="0"><stop offset="0.0000" stop-color="#1400b0"/><stop offset="0.3900" stop-color="#1800b0"/><stop offset="0.7486" stop-color="#8b00b0"/><stop offset="0.8332" stop-color="#ac00ac"/><stop offset="0.9977" stop-color="#a40064"/><stop offset="1.0008" stop-color="#a40063"/></linearGradient><linearGradient id="e137" gradientUnits="userSpaceOnUse" x1="1016.5" y1="0" x2="1655" y2="0"><stop offset="0.0000" stop-color="#1400b0"/><stop offset="0.3947" stop-color="#1800b0"/><stop offset="0.7533" stop-color="#8b00b0"/><stop offset="0.8379" stop-color="#ac00ac"/><stop offset="1.0008" stop-color="#a40065"/></linearGradient><linearGradient id="e138" gradientUnits="userSpaceOnUse" x1="1016.5" y1="0" x2="1655" y2="0"><stop offset="0.0000" stop-color="#1400b0"/><stop offset="0.3994" stop-color="#1800b0"/><stop offset="0.7580" stop-color="#8b00b0"/><stop offset="0.8426" stop-color="#ac00ac"/><stop offset="1.0008" stop-color="#a40066"/></linearGradient><linearGradient id="e139" gradientUnits="userSpaceOnUse" x1="1016.5" y1="0" x2="1655" y2="0"><stop offset="0.0000" stop-color="#1400b0"/><stop offset="0.4041" stop-color="#1800b0"/><stop offset="0.7643" stop-color="#8b00b0"/><stop offset="0.8473" stop-color="#ac00ac"/><stop offset="1.0008" stop-color="#a50068"/></linearGradient><linearGradient id="e140" gradientUnits="userSpaceOnUse" x1="1016.5" y1="0" x2="1655" y2="0"><stop offset="0.0000" stop-color="#1400b0"/><stop offset="0.4088" stop-color="#1700b0"/><stop offset="0.7690" stop-color="#8b00b0"/><stop offset="0.8520" stop-color="#ac00ac"/><stop offset="1.0008" stop-color="#a5006a"/></linearGradient><linearGradient id="e141" gradientUnits="userSpaceOnUse" x1="1016.5" y1="0" x2="1655" y2="0"><stop offset="0.0000" stop-color="#1400b0"/><stop offset="0.4135" stop-color="#1700b0"/><stop offset="0.7737" stop-color="#8b00b0"/><stop offset="0.8567" stop-color="#ac00ac"/><stop offset="1.0008" stop-color="#a5006c"/></linearGradient><linearGradient id="e142" gradientUnits="userSpaceOnUse" x1="1016.5" y1="0" x2="1655" y2="0"><stop offset="0.0000" stop-color="#1400b0"/><stop offset="0.4182" stop-color="#1700b0"/><stop offset="0.7784" stop-color="#8b00b0"/><stop offset="0.8614" stop-color="#ac00ac"/><stop offset="1.0008" stop-color="#a5006d"/></linearGradient><linearGradient id="e143" gradientUnits="userSpaceOnUse" x1="1016.5" y1="0" x2="1655" y2="0"><stop offset="0.0000" stop-color="#1400b0"/><stop offset="0.4229" stop-color="#1700b0"/><stop offset="0.7831" stop-color="#8b00b0"/><stop offset="0.8677" stop-color="#ac00ab"/><stop offset="1.0008" stop-color="#a5006f"/></linearGradient><linearGradient id="e144" gradientUnits="userSpaceOnUse" x1="1016.5" y1="0" x2="1655" y2="0"><stop offset="0.0000" stop-color="#1400b0"/><stop offset="0.4276" stop-color="#1700b0"/><stop offset="0.7878" stop-color="#8b00b0"/><stop offset="0.8724" stop-color="#ac00ac"/><stop offset="1.0008" stop-color="#a60071"/></linearGradient><linearGradient id="e145" gradientUnits="userSpaceOnUse" x1="1016.5" y1="0" x2="1655" y2="0"><stop offset="0.0000" stop-color="#1400b0"/><stop offset="0.4338" stop-color="#1800b0"/><stop offset="0.7909" stop-color="#8a00b0"/><stop offset="0.8771" stop-color="#ac00ac"/><stop offset="1.0008" stop-color="#a60073"/></linearGradient><linearGradient id="e146" gradientUnits="userSpaceOnUse" x1="1016.5" y1="0" x2="1655" y2="0"><stop offset="0.0000" stop-color="#1400b0"/><stop offset="0.4385" stop-color="#1800b0"/><stop offset="0.7972" stop-color="#8b00b0"/><stop offset="0.8818" stop-color="#ac00ac"/><stop offset="1.0008" stop-color="#a60075"/></linearGradient><linearGradient id="e147" gradientUnits="userSpaceOnUse" x1="1016.5" y1="0" x2="1655" y2="0"><stop offset="0.0000" stop-color="#1400b0"/><stop offset="0.4432" stop-color="#1800b0"/><stop offset="0.8019" stop-color="#8b00b0"/><stop offset="0.8865" stop-color="#ac00ac"/><stop offset="1.0008" stop-color="#a60077"/></linearGradient><linearGradient id="e148" gradientUnits="userSpaceOnUse" x1="1016.5" y1="0" x2="1655" y2="0"><stop offset="0.0000" stop-color="#1400b0"/><stop offset="0.4479" stop-color="#1800b0"/><stop offset="0.8066" stop-color="#8b00b0"/><stop offset="0.8912" stop-color="#ac00ac"/><stop offset="1.0008" stop-color="#a70079"/></linearGradient><linearGradient id="e149" gradientUnits="userSpaceOnUse" x1="1016.5" y1="0" x2="1655" y2="0"><stop offset="0.0000" stop-color="#1400b0"/><stop offset="0.4526" stop-color="#1800b0"/><stop offset="0.8113" stop-color="#8b00b0"/><stop offset="0.8958" stop-color="#ac00ac"/><stop offset="1.0008" stop-color="#a7007b"/></linearGradient><linearGradient id="e150" gradientUnits="userSpaceOnUse" x1="1016.5" y1="0" x2="1655" y2="0"><stop offset="0.0000" stop-color="#1400b0"/><stop offset="0.4573" stop-color="#1800b0"/><stop offset="0.8160" stop-color="#8b00b0"/><stop offset="0.9005" stop-color="#ac00ac"/><stop offset="1.0008" stop-color="#a7007c"/></linearGradient><linearGradient id="e151" gradientUnits="userSpaceOnUse" x1="1016.5" y1="0" x2="1655" y2="0"><stop offset="0.0000" stop-color="#1400b0"/><stop offset="0.4620" stop-color="#1800b0"/><stop offset="0.8207" stop-color="#8b00b0"/><stop offset="0.9052" stop-color="#ac00ac"/><stop offset="1.0008" stop-color="#a7007e"/></linearGradient><linearGradient id="e152" gradientUnits="userSpaceOnUse" x1="1016.5" y1="0" x2="1655" y2="0"><stop offset="0.0000" stop-color="#1400b0"/><stop offset="0.4667" stop-color="#1800b0"/><stop offset="0.8254" stop-color="#8b00b0"/><stop offset="0.9099" stop-color="#ac00ac"/><stop offset="1.0008" stop-color="#a70080"/></linearGradient><linearGradient id="e153" gradientUnits="userSpaceOnUse" x1="1016.5" y1="0" x2="1655" y2="0"><stop offset="0.0000" stop-color="#1400b0"/><stop offset="0.4714" stop-color="#1800b0"/><stop offset="0.8301" stop-color="#8b00b0"/><stop offset="0.9146" stop-color="#ac00ac"/><stop offset="1.0008" stop-color="#a80082"/></linearGradient><linearGradient id="e154" gradientUnits="userSpaceOnUse" x1="1016.5" y1="0" x2="1655" y2="0"><stop offset="0.0000" stop-color="#1400b0"/><stop offset="0.4761" stop-color="#1700b0"/><stop offset="0.8363" stop-color="#8b00b0"/><stop offset="0.9193" stop-color="#ac00ac"/><stop offset="1.0008" stop-color="#a80085"/></linearGradient><linearGradient id="e155" gradientUnits="userSpaceOnUse" x1="1016.5" y1="0" x2="1655" y2="0"><stop offset="0.0000" stop-color="#1400b0"/><stop offset="0.4808" stop-color="#1700b0"/><stop offset="0.8410" stop-color="#8b00b0"/><stop offset="0.9240" stop-color="#ac00ac"/><stop offset="1.0008" stop-color="#a80087"/></linearGradient><linearGradient id="e156" gradientUnits="userSpaceOnUse" x1="1016.5" y1="0" x2="1655" y2="0"><stop offset="0.0000" stop-color="#1400b0"/><stop offset="0.4855" stop-color="#1700b0"/><stop offset="0.8457" stop-color="#8b00b0"/><stop offset="0.9287" stop-color="#ac00ac"/><stop offset="1.0008" stop-color="#a80089"/></linearGradient><linearGradient id="t0" gradientUnits="userSpaceOnUse" x1="1150.0" y1="0" x2="1497.0" y2="0"><stop offset="0.0000" stop-color="#00ff03"/><stop offset="0.2190" stop-color="#e1ff00"/><stop offset="0.2478" stop-color="#fffb00"/><stop offset="0.3285" stop-color="#ffb200"/><stop offset="0.4553" stop-color="#ff7000"/><stop offset="0.6686" stop-color="#ff3700"/><stop offset="1.0000" stop-color="#ff0900"/></linearGradient><linearGradient id="t1" gradientUnits="userSpaceOnUse" x1="1150.0" y1="0" x2="1497.0" y2="0"><stop offset="0.0000" stop-color="#00ff0c"/><stop offset="0.2046" stop-color="#d1ff00"/><stop offset="0.2478" stop-color="#fffa00"/><stop offset="0.3285" stop-color="#ffb000"/><stop offset="0.4553" stop-color="#ff6f00"/><stop offset="0.6686" stop-color="#ff3600"/><stop offset="1.0000" stop-color="#ff0900"/></linearGradient><linearGradient id="t2" gradientUnits="userSpaceOnUse" x1="1150.0" y1="0" x2="1497.0" y2="0"><stop offset="0.0000" stop-color="#00ff14"/><stop offset="0.2046" stop-color="#d2ff01"/><stop offset="0.2450" stop-color="#fffc00"/><stop offset="0.3228" stop-color="#ffb300"/><stop offset="0.4467" stop-color="#ff7200"/><stop offset="0.6542" stop-color="#ff3800"/><stop offset="1.0000" stop-color="#ff0800"/></linearGradient><linearGradient id="t3" gradientUnits="userSpaceOnUse" x1="1150.0" y1="0" x2="1497.0" y2="0"><stop offset="0.0000" stop-color="#00ff1c"/><stop offset="0.1960" stop-color="#c8ff0d"/><stop offset="0.2450" stop-color="#fffb08"/><stop offset="0.3228" stop-color="#ffb200"/><stop offset="0.4467" stop-color="#ff7000"/><stop offset="0.6542" stop-color="#ff3700"/><stop offset="1.0000" stop-color="#ff0700"/></linearGradient><linearGradient id="t4" gradientUnits="userSpaceOnUse" x1="1150.0" y1="0" x2="1497.0" y2="0"><stop offset="0.0000" stop-color="#00ff24"/><stop offset="0.0259" stop-color="#16ff22"/><stop offset="0.2133" stop-color="#ddff16"/><stop offset="0.2450" stop-color="#fffa13"/><stop offset="0.3228" stop-color="#ffb107"/><stop offset="0.4438" stop-color="#ff7100"/><stop offset="0.6484" stop-color="#ff3700"/><stop offset="1.0000" stop-color="#ff0600"/></linearGradient><linearGradient id="t5" gradientUnits="userSpaceOnUse" x1="1150.0" y1="0" x2="1497.0" y2="0"><stop offset="0.0000" stop-color="#00ff2c"/><stop offset="0.0202" stop-color="#0fff2b"/><stop offset="0.2133" stop-color="#deff20"/><stop offset="0.2450" stop-color="#fff91d"/><stop offset="0.3228" stop-color="#ffb010"/><stop offset="0.4438" stop-color="#ff6f03"/><stop offset="0.6484" stop-color="#ff3600"/><stop offset="1.0000" stop-color="#ff0500"/></linearGradient><linearGradient id="t6" gradientUnits="userSpaceOnUse" x1="1150.0" y1="0" x2="1497.0" y2="0"><stop offset="0.0000" stop-color="#00ff33"/><stop offset="0.0144" stop-color="#07ff33"/><stop offset="0.2133" stop-color="#deff2a"/><stop offset="0.2421" stop-color="#fffc27"/><stop offset="0.3199" stop-color="#ffb118"/><stop offset="0.4409" stop-color="#ff700a"/><stop offset="0.6455" stop-color="#ff3600"/><stop offset="1.0000" stop-color="#ff0400"/></linearGradient><linearGradient id="t7" gradientUnits="userSpaceOnUse" x1="1150.0" y1="0" x2="1497.0" y2="0"><stop offset="0.0000" stop-color="#00ff3b"/><stop offset="0.0173" stop-color="#09ff3a"/><stop offset="0.2104" stop-color="#dbff34"/><stop offset="0.2421" stop-color="#fffb31"/><stop offset="0.3170" stop-color="#ffb220"/><stop offset="0.4352" stop-color="#ff7111"/><stop offset="0.6340" stop-color="#ff3702"/><stop offset="1.0000" stop-color="#ff0400"/></linearGradient><linearGradient id="t8" gradientUnits="userSpaceOnUse" x1="1150.0" y1="0" x2="1497.0" y2="0"><stop offset="0.0000" stop-color="#00ff43"/><stop offset="0.0173" stop-color="#07ff42"/><stop offset="0.2104" stop-color="#dcff3d"/><stop offset="0.2421" stop-color="#fff93b"/><stop offset="0.3170" stop-color="#ffb128"/><stop offset="0.4352" stop-color="#ff7016"/><stop offset="0.6340" stop-color="#ff3607"/><stop offset="1.0000" stop-color="#ff0300"/></linearGradient><linearGradient id="t9" gradientUnits="userSpaceOnUse" x1="1150.0" y1="0" x2="1497.0" y2="0"><stop offset="0.0000" stop-color="#00ff4a"/><stop offset="0.0173" stop-color="#06ff4a"/><stop offset="0.2104" stop-color="#ddff47"/><stop offset="0.2392" stop-color="#fffc46"/><stop offset="0.3141" stop-color="#ffb230"/><stop offset="0.4294" stop-color="#ff711d"/><stop offset="0.6254" stop-color="#ff370c"/><stop offset="1.0000" stop-color="#ff0200"/></linearGradient><linearGradient id="t10" gradientUnits="userSpaceOnUse" x1="1150.0" y1="0" x2="1497.0" y2="0"><stop offset="0.0000" stop-color="#00ff52"/><stop offset="0.0173" stop-color="#04ff52"/><stop offset="0.2104" stop-color="#ddff51"/><stop offset="0.2392" stop-color="#fffb50"/><stop offset="0.3141" stop-color="#ffb138"/><stop offset="0.4294" stop-color="#ff7023"/><stop offset="0.6254" stop-color="#ff3610"/><stop offset="1.0000" stop-color="#ff0100"/></linearGradient><linearGradient id="t11" gradientUnits="userSpaceOnUse" x1="1150.0" y1="0" x2="1497.0" y2="0"><stop offset="0.0000" stop-color="#00ff5a"/><stop offset="0.0202" stop-color="#06ff5a"/><stop offset="0.2104" stop-color="#deff5b"/><stop offset="0.2392" stop-color="#fffa59"/><stop offset="0.3112" stop-color="#ffb240"/><stop offset="0.4265" stop-color="#ff7029"/><stop offset="0.6196" stop-color="#ff3614"/><stop offset="1.0000" stop-color="#ff0002"/></linearGradient><linearGradient id="t12" gradientUnits="userSpaceOnUse" x1="1150.0" y1="0" x2="1497.0" y2="0"><stop offset="0.0000" stop-color="#00ff62"/><stop offset="0.0202" stop-color="#04ff62"/><stop offset="0.2104" stop-color="#dfff65"/><stop offset="0.2392" stop-color="#fff963"/><stop offset="0.3112" stop-color="#ffb047"/><stop offset="0.4265" stop-color="#ff6f2e"/><stop offset="0.6196" stop-color="#ff3518"/><stop offset="0.9971" stop-color="#ff0005"/><stop offset="1.0000" stop-color="#ff0005"/></linearGradient><linearGradient id="t13" gradientUnits="userSpaceOnUse" x1="1150.0" y1="0" x2="1497.0" y2="0"><stop offset="0.0000" stop-color="#00ff6a"/><stop offset="0.0231" stop-color="#06ff6b"/><stop offset="0.2104" stop-color="#e0ff6f"/><stop offset="0.2363" stop-color="#fffc6f"/><stop offset="0.3084" stop-color="#ffb150"/><stop offset="0.4207" stop-color="#ff7035"/><stop offset="0.6110" stop-color="#ff361d"/><stop offset="0.9856" stop-color="#ff0008"/><stop offset="1.0000" stop-color="#ff0007"/></linearGradient><linearGradient id="t14" gradientUnits="userSpaceOnUse" x1="1150.0" y1="0" x2="1497.0" y2="0"><stop offset="0.0000" stop-color="#00ff72"/><stop offset="0.0231" stop-color="#04ff73"/><stop offset="0.2104" stop-color="#e0ff7a"/><stop offset="0.2363" stop-color="#fffa79"/><stop offset="0.3084" stop-color="#ffb057"/><stop offset="0.4207" stop-color="#ff6f3a"/><stop offset="0.6110" stop-color="#ff3521"/><stop offset="0.9798" stop-color="#ff000b"/><stop offset="1.0000" stop-color="#ff000a"/></linearGradient><linearGradient id="t15" gradientUnits="userSpaceOnUse" x1="1150.0" y1="0" x2="1497.0" y2="0"><stop offset="0.0000" stop-color="#00ff7a"/><stop offset="0.0259" stop-color="#06ff7b"/><stop offset="0.2075" stop-color="#ddff84"/><stop offset="0.2363" stop-color="#fff982"/><stop offset="0.3055" stop-color="#ffb160"/><stop offset="0.4150" stop-color="#ff7041"/><stop offset="0.5994" stop-color="#ff3726"/><stop offset="0.9683" stop-color="#ff000e"/><stop offset="1.0000" stop-color="#ff000d"/></linearGradient><linearGradient id="t16" gradientUnits="userSpaceOnUse" x1="1150.0" y1="0" x2="1497.0" y2="0"><stop offset="0.0000" stop-color="#00ff82"/><stop offset="0.0259" stop-color="#04ff84"/><stop offset="0.2075" stop-color="#deff8e"/><stop offset="0.2334" stop-color="#fffc8f"/><stop offset="0.3026" stop-color="#ffb269"/><stop offset="0.4092" stop-color="#ff7148"/><stop offset="0.5908" stop-color="#ff382b"/><stop offset="0.9568" stop-color="#ff0011"/><stop offset="1.0000" stop-color="#ff0010"/></linearGradient><linearGradient id="t17" gradientUnits="userSpaceOnUse" x1="1150.0" y1="0" x2="1497.0" y2="0"><stop offset="0.0000" stop-color="#00ff8b"/><stop offset="0.0259" stop-color="#03ff8c"/><stop offset="0.2075" stop-color="#dfff99"/><stop offset="0.2334" stop-color="#fffb99"/><stop offset="0.3026" stop-color="#ffb171"/><stop offset="0.4092" stop-color="#ff704e"/><stop offset="0.5908" stop-color="#ff372f"/><stop offset="0.9510" stop-color="#ff0014"/><stop offset="1.0000" stop-color="#ff0012"/></linearGradient><linearGradient id="t18" gradientUnits="userSpaceOnUse" x1="1150.0" y1="0" x2="1497.0" y2="0"><stop offset="0.0000" stop-color="#00ff93"/><stop offset="0.0288" stop-color="#05ff95"/><stop offset="0.2075" stop-color="#e0ffa4"/><stop offset="0.2334" stop-color="#fffaa3"/><stop offset="0.3026" stop-color="#ffb078"/><stop offset="0.4092" stop-color="#ff6f54"/><stop offset="0.5908" stop-color="#ff3633"/><stop offset="0.9452" stop-color="#ff0017"/><stop offset="1.0000" stop-color="#ff0015"/></linearGradient><linearGradient id="t19" gradientUnits="userSpaceOnUse" x1="1150.0" y1="0" x2="1497.0" y2="0"><stop offset="0.0000" stop-color="#00ff9c"/><stop offset="0.0288" stop-color="#03ff9e"/><stop offset="0.2075" stop-color="#e0ffaf"/><stop offset="0.2305" stop-color="#fffdb0"/><stop offset="0.2968" stop-color="#ffb383"/><stop offset="0.4006" stop-color="#ff725c"/><stop offset="0.5735" stop-color="#ff383a"/><stop offset="0.9280" stop-color="#ff001b"/><stop offset="1.0000" stop-color="#ff0017"/></linearGradient><linearGradient id="t20" gradientUnits="userSpaceOnUse" x1="1150.0" y1="0" x2="1497.0" y2="0"><stop offset="0.0000" stop-color="#00ffa4"/><stop offset="0.0317" stop-color="#05ffa7"/><stop offset="0.2046" stop-color="#ddffba"/><stop offset="0.2305" stop-color="#fffbba"/><stop offset="0.2968" stop-color="#ffb28b"/><stop offset="0.4006" stop-color="#ff7062"/><stop offset="0.5735" stop-color="#ff373e"/><stop offset="0.9222" stop-color="#ff001e"/><stop offset="1.0000" stop-color="#ff001a"/></linearGradient><linearGradient id="t21" gradientUnits="userSpaceOnUse" x1="1150.0" y1="0" x2="1497.0" y2="0"><stop offset="0.0000" stop-color="#00ffad"/><stop offset="0.0317" stop-color="#03ffb0"/><stop offset="0.2046" stop-color="#deffc5"/><stop offset="0.2305" stop-color="#fffac5"/><stop offset="0.2968" stop-color="#ffb093"/><stop offset="0.4006" stop-color="#ff6f67"/><stop offset="0.5764" stop-color="#ff3641"/><stop offset="0.9193" stop-color="#ff0021"/><stop offset="1.0000" stop-color="#ff001c"/></linearGradient><linearGradient id="t22" gradientUnits="userSpaceOnUse" x1="1150.0" y1="0" x2="1497.0" y2="0"><stop offset="0.0000" stop-color="#00ffb6"/><stop offset="0.0346" stop-color="#05ffb9"/><stop offset="0.2046" stop-color="#dfffd0"/><stop offset="0.2305" stop-color="#fff9d0"/><stop offset="0.2968" stop-color="#ffaf9b"/><stop offset="0.4006" stop-color="#ff6e6d"/><stop offset="0.5764" stop-color="#ff3546"/><stop offset="0.9135" stop-color="#ff0024"/><stop offset="1.0000" stop-color="#ff001f"/></linearGradient><linearGradient id="t23" gradientUnits="userSpaceOnUse" x1="1150.0" y1="0" x2="1497.0" y2="0"><stop offset="0.0000" stop-color="#00ffbf"/><stop offset="0.0346" stop-color="#03ffc3"/><stop offset="0.2046" stop-color="#dfffdc"/><stop offset="0.2277" stop-color="#fffcde"/><stop offset="0.2911" stop-color="#ffb3a7"/><stop offset="0.3890" stop-color="#ff7277"/><stop offset="0.5562" stop-color="#ff384d"/><stop offset="0.8963" stop-color="#ff0028"/><stop offset="1.0000" stop-color="#ff0021"/></linearGradient><linearGradient id="t24" gradientUnits="userSpaceOnUse" x1="1150.0" y1="0" x2="1497.0" y2="0"><stop offset="0.0000" stop-color="#00ffc8"/><stop offset="0.0375" stop-color="#05ffcd"/><stop offset="0.2017" stop-color="#dcffe7"/><stop offset="0.2277" stop-color="#fffbe9"/><stop offset="0.2911" stop-color="#ffb1af"/><stop offset="0.3890" stop-color="#ff717d"/><stop offset="0.5562" stop-color="#ff3751"/><stop offset="0.8905" stop-color="#ff002b"/><stop offset="1.0000" stop-color="#ff0023"/></linearGradient><linearGradient id="t25" gradientUnits="userSpaceOnUse" x1="1150.0" y1="0" x2="1497.0" y2="0"><stop offset="0.0000" stop-color="#00ffd1"/><stop offset="0.0375" stop-color="#03ffd6"/><stop offset="0.2046" stop-color="#e1fff4"/><stop offset="0.2277" stop-color="#fff9f4"/><stop offset="0.2911" stop-color="#ffb0b8"/><stop offset="0.3890" stop-color="#ff6f83"/><stop offset="0.5562" stop-color="#ff3655"/><stop offset="0.8847" stop-color="#ff002e"/><stop offset="1.0000" stop-color="#ff0026"/></linearGradient><linearGradient id="t26" gradientUnits="userSpaceOnUse" x1="1150.0" y1="0" x2="1497.0" y2="0"><stop offset="0.0000" stop-color="#00ffda"/><stop offset="0.0403" stop-color="#06ffe0"/><stop offset="0.2219" stop-color="#f7f9ff"/><stop offset="0.2392" stop-color="#ffe8f1"/><stop offset="0.3084" stop-color="#ffa0b4"/><stop offset="0.4179" stop-color="#ff617e"/><stop offset="0.6081" stop-color="#ff2950"/><stop offset="0.9049" stop-color="#ff002f"/><stop offset="1.0000" stop-color="#ff0028"/></linearGradient><linearGradient id="t27" gradientUnits="userSpaceOnUse" x1="1150.0" y1="0" x2="1497.0" y2="0"><stop offset="0.0000" stop-color="#00ffe4"/><stop offset="0.0403" stop-color="#04ffea"/><stop offset="0.1729" stop-color="#b0f9ff"/><stop offset="0.2392" stop-color="#ffe6fc"/><stop offset="0.3084" stop-color="#ff9fbc"/><stop offset="0.4179" stop-color="#ff6084"/><stop offset="0.6081" stop-color="#ff2854"/><stop offset="0.8963" stop-color="#ff0032"/><stop offset="1.0000" stop-color="#ff002b"/></linearGradient><linearGradient id="t28" gradientUnits="userSpaceOnUse" x1="1150.0" y1="0" x2="1497.0" y2="0"><stop offset="0.0000" stop-color="#00ffed"/><stop offset="0.0403" stop-color="#01fff4"/><stop offset="0.1354" stop-color="#7bf6ff"/><stop offset="0.2478" stop-color="#ffd9fc"/><stop offset="0.3199" stop-color="#ff94bb"/><stop offset="0.4380" stop-color="#ff5682"/><stop offset="0.6455" stop-color="#ff2052"/><stop offset="0.8905" stop-color="#ff0035"/><stop offset="1.0000" stop-color="#ff002d"/></linearGradient><linearGradient id="t29" gradientUnits="userSpaceOnUse" x1="1150.0" y1="0" x2="1497.0" y2="0"><stop offset="0.0000" stop-color="#00fff7"/><stop offset="0.0432" stop-color="#04ffff"/><stop offset="0.2536" stop-color="#ffd1ff"/><stop offset="0.3314" stop-color="#ff8bbb"/><stop offset="0.4553" stop-color="#ff4f82"/><stop offset="0.6772" stop-color="#ff1950"/><stop offset="0.8847" stop-color="#ff0038"/><stop offset="1.0000" stop-color="#ff002f"/></linearGradient><linearGradient id="t30" gradientUnits="userSpaceOnUse" x1="1150.0" y1="0" x2="1497.0" y2="0"><stop offset="0.0000" stop-color="#00fdff"/><stop offset="0.0432" stop-color="#01f5ff"/><stop offset="0.2594" stop-color="#fbc6ff"/><stop offset="0.3516" stop-color="#ff7db6"/><stop offset="0.4870" stop-color="#ff437d"/><stop offset="0.7320" stop-color="#ff0f4c"/><stop offset="0.8847" stop-color="#ff003b"/><stop offset="1.0000" stop-color="#ff0032"/></linearGradient><linearGradient id="t31" gradientUnits="userSpaceOnUse" x1="1150.0" y1="0" x2="1497.0" y2="0"><stop offset="0.0000" stop-color="#00f4ff"/><stop offset="0.0461" stop-color="#04ebff"/><stop offset="0.2709" stop-color="#ffbaff"/><stop offset="0.3545" stop-color="#ff7abb"/><stop offset="0.4899" stop-color="#ff4181"/><stop offset="0.7291" stop-color="#ff0e4f"/><stop offset="0.8761" stop-color="#ff003f"/><stop offset="1.0000" stop-color="#ff0034"/></linearGradient><linearGradient id="t32" gradientUnits="userSpaceOnUse" x1="1150.0" y1="0" x2="1497.0" y2="0"><stop offset="0.0000" stop-color="#00ebff"/><stop offset="0.0490" stop-color="#06e1ff"/><stop offset="0.2824" stop-color="#ffaefc"/><stop offset="0.3689" stop-color="#ff70b9"/><stop offset="0.5101" stop-color="#ff3a7f"/><stop offset="0.7608" stop-color="#ff094e"/><stop offset="0.8963" stop-color="#ff003f"/><stop offset="1.0000" stop-color="#ff0037"/></linearGradient><linearGradient id="t33" gradientUnits="userSpaceOnUse" x1="1150.0" y1="0" x2="1497.0" y2="0"><stop offset="0.0000" stop-color="#00e2ff"/><stop offset="0.0490" stop-color="#04d9ff"/><stop offset="0.2882" stop-color="#ffa6ff"/><stop offset="0.3775" stop-color="#ff6abb"/><stop offset="0.5216" stop-color="#ff3580"/><stop offset="0.7781" stop-color="#ff054f"/><stop offset="1.0000" stop-color="#ff0039"/></linearGradient><linearGradient id="t34" gradientUnits="userSpaceOnUse" x1="1150.0" y1="0" x2="1497.0" y2="0"><stop offset="0.0000" stop-color="#00daff"/><stop offset="0.0519" stop-color="#05d0ff"/><stop offset="0.2997" stop-color="#ff9bfd"/><stop offset="0.3919" stop-color="#ff62b9"/><stop offset="0.5418" stop-color="#ff2f7f"/><stop offset="0.8098" stop-color="#ff004e"/><stop offset="1.0000" stop-color="#ff003b"/></linearGradient><linearGradient id="t35" gradientUnits="userSpaceOnUse" x1="1150.0" y1="0" x2="1497.0" y2="0"><stop offset="0.0000" stop-color="#00d2ff"/><stop offset="0.0519" stop-color="#04c9ff"/><stop offset="0.3055" stop-color="#ff94ff"/><stop offset="0.4006" stop-color="#ff5cbb"/><stop offset="0.5533" stop-color="#ff2b80"/><stop offset="0.8213" stop-color="#ff0050"/><stop offset="1.0000" stop-color="#ff003e"/></linearGradient><linearGradient id="t36" gradientUnits="userSpaceOnUse" x1="1150.0" y1="0" x2="1497.0" y2="0"><stop offset="0.0000" stop-color="#00cbff"/><stop offset="0.0548" stop-color="#05c1ff"/><stop offset="0.3170" stop-color="#ff8afd"/><stop offset="0.4121" stop-color="#ff56bb"/><stop offset="0.5677" stop-color="#ff2681"/><stop offset="0.8156" stop-color="#ff0053"/><stop offset="1.0000" stop-color="#ff0040"/></linearGradient><linearGradient id="t37" gradientUnits="userSpaceOnUse" x1="1150.0" y1="0" x2="1497.0" y2="0"><stop offset="0.0000" stop-color="#00c4ff"/><stop offset="0.0548" stop-color="#03bbff"/><stop offset="0.3228" stop-color="#fe84ff"/><stop offset="0.4236" stop-color="#ff4fba"/><stop offset="0.5850" stop-color="#ff2180"/><stop offset="0.8098" stop-color="#ff0057"/><stop offset="1.0000" stop-color="#ff0042"/></linearGradient><linearGradient id="t38" gradientUnits="userSpaceOnUse" x1="1150.0" y1="0" x2="1497.0" y2="0"><stop offset="0.0000" stop-color="#00beff"/><stop offset="0.0576" stop-color="#05b4ff"/><stop offset="0.3343" stop-color="#ff7bfd"/><stop offset="0.4352" stop-color="#ff4aba"/><stop offset="0.6023" stop-color="#ff1c80"/><stop offset="0.8012" stop-color="#ff005b"/><stop offset="1.0000" stop-color="#ff0045"/></linearGradient><linearGradient id="t39" gradientUnits="userSpaceOnUse" x1="1150.0" y1="0" x2="1497.0" y2="0"><stop offset="0.0000" stop-color="#00b8ff"/><stop offset="0.0576" stop-color="#03aeff"/><stop offset="0.3401" stop-color="#fe76ff"/><stop offset="0.4467" stop-color="#ff44ba"/><stop offset="0.6167" stop-color="#ff1880"/><stop offset="0.7954" stop-color="#ff005f"/><stop offset="1.0000" stop-color="#ff0047"/></linearGradient><linearGradient id="t40" gradientUnits="userSpaceOnUse" x1="1150.0" y1="0" x2="1497.0" y2="0"><stop offset="0.0000" stop-color="#00b2ff"/><stop offset="0.0605" stop-color="#05a7ff"/><stop offset="0.3516" stop-color="#ff6dfd"/><stop offset="0.4582" stop-color="#ff3fba"/><stop offset="0.6340" stop-color="#ff1480"/><stop offset="0.7896" stop-color="#ff0062"/><stop offset="1.0000" stop-color="#ff0049"/></linearGradient><linearGradient id="t41" gradientUnits="userSpaceOnUse" x1="1150.0" y1="0" x2="1497.0" y2="0"><stop offset="0.0000" stop-color="#00acff"/><stop offset="0.0605" stop-color="#03a2ff"/><stop offset="0.3573" stop-color="#fe68ff"/><stop offset="0.4697" stop-color="#ff39ba"/><stop offset="0.6484" stop-color="#ff1080"/><stop offset="0.7867" stop-color="#ff0066"/><stop offset="1.0000" stop-color="#ff004c"/></linearGradient><linearGradient id="t42" gradientUnits="userSpaceOnUse" x1="1150.0" y1="0" x2="1497.0" y2="0"><stop offset="0.0000" stop-color="#00a7ff"/><stop offset="0.0634" stop-color="#059cff"/><stop offset="0.3689" stop-color="#ff61fd"/><stop offset="0.4813" stop-color="#ff34ba"/><stop offset="0.6657" stop-color="#ff0c80"/><stop offset="0.7867" stop-color="#ff0069"/><stop offset="1.0000" stop-color="#ff004e"/></linearGradient><linearGradient id="t43" gradientUnits="userSpaceOnUse" x1="1150.0" y1="0" x2="1497.0" y2="0"><stop offset="0.0000" stop-color="#00a2ff"/><stop offset="0.0634" stop-color="#0397ff"/><stop offset="0.3746" stop-color="#fe5cff"/><stop offset="0.4928" stop-color="#ff30ba"/><stop offset="0.6801" stop-color="#ff0880"/><stop offset="0.8040" stop-color="#ff0069"/><stop offset="1.0000" stop-color="#ff0050"/></linearGradient><linearGradient id="t44" gradientUnits="userSpaceOnUse" x1="1150.0" y1="0" x2="1497.0" y2="0"><stop offset="0.0000" stop-color="#009dff"/><stop offset="0.0663" stop-color="#0592ff"/><stop offset="0.3862" stop-color="#ff55fd"/><stop offset="0.5043" stop-color="#ff2bba"/><stop offset="0.6974" stop-color="#ff0480"/><stop offset="1.0000" stop-color="#ff0053"/></linearGradient><linearGradient id="t45" gradientUnits="userSpaceOnUse" x1="1150.0" y1="0" x2="1497.0" y2="0"><stop offset="0.0000" stop-color="#0098ff"/><stop offset="0.0663" stop-color="#038dff"/><stop offset="0.3919" stop-color="#fe50ff"/><stop offset="0.5159" stop-color="#ff27ba"/><stop offset="0.7118" stop-color="#ff0080"/><stop offset="1.0000" stop-color="#ff0055"/></linearGradient><linearGradient id="t46" gradientUnits="userSpaceOnUse" x1="1150.0" y1="0" x2="1497.0" y2="0"><stop offset="0.0000" stop-color="#0093ff"/><stop offset="0.0692" stop-color="#0588ff"/><stop offset="0.4035" stop-color="#ff4afd"/><stop offset="0.5274" stop-color="#ff22ba"/><stop offset="0.7291" stop-color="#ff0080"/><stop offset="1.0000" stop-color="#ff0057"/></linearGradient><linearGradient id="t47" gradientUnits="userSpaceOnUse" x1="1150.0" y1="0" x2="1497.0" y2="0"><stop offset="0.0000" stop-color="#008fff"/><stop offset="0.0692" stop-color="#0384ff"/><stop offset="0.4092" stop-color="#fe46ff"/><stop offset="0.5389" stop-color="#ff1eba"/><stop offset="0.7205" stop-color="#ff0085"/><stop offset="1.0000" stop-color="#ff005a"/></linearGradient><linearGradient id="t48" gradientUnits="userSpaceOnUse" x1="1150.0" y1="0" x2="1497.0" y2="0"><stop offset="0.0000" stop-color="#008bff"/><stop offset="0.0720" stop-color="#057fff"/><stop offset="0.4207" stop-color="#ff40fe"/><stop offset="0.5504" stop-color="#ff1aba"/><stop offset="0.7147" stop-color="#ff0089"/><stop offset="1.0000" stop-color="#ff005c"/></linearGradient><linearGradient id="t49" gradientUnits="userSpaceOnUse" x1="1150.0" y1="0" x2="1497.0" y2="0"><stop offset="0.0000" stop-color="#0087ff"/><stop offset="0.0720" stop-color="#037bff"/><stop offset="0.4294" stop-color="#ff3bfe"/><stop offset="0.5591" stop-color="#ff17bb"/><stop offset="0.7061" stop-color="#ff008f"/><stop offset="1.0000" stop-color="#ff005e"/></linearGradient><linearGradient id="t50" gradientUnits="userSpaceOnUse" x1="1150.0" y1="0" x2="1497.0" y2="0"><stop offset="0.0000" stop-color="#0083ff"/><stop offset="0.0749" stop-color="#0577ff"/><stop offset="0.4380" stop-color="#ff36fe"/><stop offset="0.5706" stop-color="#ff13bb"/><stop offset="0.7003" stop-color="#ff0093"/><stop offset="1.0000" stop-color="#ff0061"/></linearGradient><linearGradient id="t51" gradientUnits="userSpaceOnUse" x1="1150.0" y1="0" x2="1497.0" y2="0"><stop offset="0.0000" stop-color="#007fff"/><stop offset="0.0749" stop-color="#0374ff"/><stop offset="0.4467" stop-color="#ff32fe"/><stop offset="0.5821" stop-color="#ff0fbb"/><stop offset="0.6945" stop-color="#ff0098"/><stop offset="1.0000" stop-color="#ff0063"/></linearGradient><linearGradient id="t52" gradientUnits="userSpaceOnUse" x1="1150.0" y1="0" x2="1497.0" y2="0"><stop offset="0.0000" stop-color="#007bff"/><stop offset="0.0778" stop-color="#0470ff"/><stop offset="0.4553" stop-color="#ff2dfe"/><stop offset="0.5937" stop-color="#ff0bbb"/><stop offset="0.6945" stop-color="#ff009c"/><stop offset="0.9942" stop-color="#ff0066"/><stop offset="1.0000" stop-color="#ff0065"/></linearGradient><linearGradient id="t53" gradientUnits="userSpaceOnUse" x1="1150.0" y1="0" x2="1497.0" y2="0"><stop offset="0.0000" stop-color="#0078ff"/><stop offset="0.0778" stop-color="#036cff"/><stop offset="0.4640" stop-color="#ff29fe"/><stop offset="0.6052" stop-color="#ff07bb"/><stop offset="0.7205" stop-color="#ff0099"/><stop offset="1.0000" stop-color="#ff0068"/></linearGradient><linearGradient id="t54" gradientUnits="userSpaceOnUse" x1="1150.0" y1="0" x2="1497.0" y2="0"><stop offset="0.0000" stop-color="#0074ff"/><stop offset="0.0807" stop-color="#0469ff"/><stop offset="0.4726" stop-color="#ff25fe"/><stop offset="0.6167" stop-color="#ff03bb"/><stop offset="0.8530" stop-color="#ff0080"/><stop offset="1.0000" stop-color="#ff006a"/></linearGradient><linearGradient id="t55" gradientUnits="userSpaceOnUse" x1="1150.0" y1="0" x2="1497.0" y2="0"><stop offset="0.0000" stop-color="#0071ff"/><stop offset="0.0836" stop-color="#0565ff"/><stop offset="0.4813" stop-color="#ff21fe"/><stop offset="0.6282" stop-color="#ff00ba"/><stop offset="0.8674" stop-color="#ff0080"/><stop offset="1.0000" stop-color="#ff006c"/></linearGradient><linearGradient id="t56" gradientUnits="userSpaceOnUse" x1="1150.0" y1="0" x2="1497.0" y2="0"><stop offset="0.0000" stop-color="#006eff"/><stop offset="0.0836" stop-color="#0462ff"/><stop offset="0.4899" stop-color="#ff1dfe"/><stop offset="0.6398" stop-color="#ff00ba"/><stop offset="0.8847" stop-color="#ff0080"/><stop offset="1.0000" stop-color="#ff006f"/></linearGradient><linearGradient id="t57" gradientUnits="userSpaceOnUse" x1="1150.0" y1="0" x2="1497.0" y2="0"><stop offset="0.0000" stop-color="#006bff"/><stop offset="0.0865" stop-color="#055fff"/><stop offset="0.4986" stop-color="#ff19fe"/><stop offset="0.6340" stop-color="#ff00c0"/><stop offset="0.8703" stop-color="#ff0085"/><stop offset="1.0000" stop-color="#ff0071"/></linearGradient><linearGradient id="t58" gradientUnits="userSpaceOnUse" x1="1150.0" y1="0" x2="1497.0" y2="0"><stop offset="0.0000" stop-color="#0068ff"/><stop offset="0.0865" stop-color="#045cff"/><stop offset="0.5072" stop-color="#ff15fe"/><stop offset="0.6282" stop-color="#ff00c6"/><stop offset="0.8588" stop-color="#ff008a"/><stop offset="1.0000" stop-color="#ff0073"/></linearGradient><linearGradient id="t59" gradientUnits="userSpaceOnUse" x1="1150.0" y1="0" x2="1497.0" y2="0"><stop offset="0.0000" stop-color="#0065ff"/><stop offset="0.0893" stop-color="#0559ff"/><stop offset="0.5159" stop-color="#ff11fe"/><stop offset="0.6196" stop-color="#ff00cd"/><stop offset="0.8415" stop-color="#ff0090"/><stop offset="1.0000" stop-color="#ff0076"/></linearGradient><linearGradient id="t60" gradientUnits="userSpaceOnUse" x1="1150.0" y1="0" x2="1497.0" y2="0"><stop offset="0.0000" stop-color="#0062ff"/><stop offset="0.0893" stop-color="#0456ff"/><stop offset="0.5245" stop-color="#ff0dfe"/><stop offset="0.6167" stop-color="#ff00d2"/><stop offset="0.8329" stop-color="#ff0095"/><stop offset="1.0000" stop-color="#ff0078"/></linearGradient><linearGradient id="t61" gradientUnits="userSpaceOnUse" x1="1150.0" y1="0" x2="1497.0" y2="0"><stop offset="0.0000" stop-color="#0060ff"/><stop offset="0.0922" stop-color="#0553ff"/><stop offset="0.5360" stop-color="#ff09fc"/><stop offset="0.6196" stop-color="#ff00d5"/><stop offset="0.8357" stop-color="#ff0097"/><stop offset="1.0000" stop-color="#ff007a"/></linearGradient><linearGradient id="t62" gradientUnits="userSpaceOnUse" x1="1150.0" y1="0" x2="1497.0" y2="0"><stop offset="0.0000" stop-color="#005dff"/><stop offset="0.0922" stop-color="#0450ff"/><stop offset="0.5418" stop-color="#ff06fe"/><stop offset="0.7061" stop-color="#ff00bb"/><stop offset="0.9741" stop-color="#ff0081"/><stop offset="1.0000" stop-color="#ff007d"/></linearGradient><linearGradient id="t63" gradientUnits="userSpaceOnUse" x1="1150.0" y1="0" x2="1497.0" y2="0"><stop offset="0.0000" stop-color="#005aff"/><stop offset="0.0951" stop-color="#054eff"/><stop offset="0.5533" stop-color="#ff01fd"/><stop offset="0.7233" stop-color="#ff00b9"/><stop offset="1.0000" stop-color="#ff007f"/></linearGradient><linearGradient id="t64" gradientUnits="userSpaceOnUse" x1="1150.0" y1="0" x2="1497.0" y2="0"><stop offset="0.0000" stop-color="#0058ff"/><stop offset="0.0951" stop-color="#044bff"/><stop offset="0.5591" stop-color="#ff00fe"/><stop offset="0.7291" stop-color="#ff00bb"/><stop offset="1.0000" stop-color="#ff0082"/></linearGradient><linearGradient id="t65" gradientUnits="userSpaceOnUse" x1="1150.0" y1="0" x2="1497.0" y2="0"><stop offset="0.0000" stop-color="#0055ff"/><stop offset="0.0980" stop-color="#0548ff"/><stop offset="0.5706" stop-color="#ff00fd"/><stop offset="0.7464" stop-color="#ff00b9"/><stop offset="1.0000" stop-color="#ff0084"/></linearGradient><linearGradient id="t66" gradientUnits="userSpaceOnUse" x1="1150.0" y1="0" x2="1497.0" y2="0"><stop offset="0.0000" stop-color="#0053ff"/><stop offset="0.0980" stop-color="#0446ff"/><stop offset="0.5648" stop-color="#fa00ff"/><stop offset="0.7867" stop-color="#ff00b1"/><stop offset="1.0000" stop-color="#ff0086"/></linearGradient><linearGradient id="t67" gradientUnits="userSpaceOnUse" x1="1150.0" y1="0" x2="1497.0" y2="0"><stop offset="0.0000" stop-color="#0051ff"/><stop offset="0.1009" stop-color="#0544ff"/><stop offset="0.5562" stop-color="#f100ff"/><stop offset="0.5994" stop-color="#ff00f7"/><stop offset="0.7867" stop-color="#ff00b4"/><stop offset="1.0000" stop-color="#ff0089"/></linearGradient><linearGradient id="t68" gradientUnits="userSpaceOnUse" x1="1150.0" y1="0" x2="1497.0" y2="0"><stop offset="0.0000" stop-color="#004fff"/><stop offset="0.1009" stop-color="#0442ff"/><stop offset="0.5476" stop-color="#e900ff"/><stop offset="0.6052" stop-color="#ff00f9"/><stop offset="0.7925" stop-color="#ff00b6"/><stop offset="1.0000" stop-color="#ff008b"/></linearGradient><linearGradient id="t69" gradientUnits="userSpaceOnUse" x1="1150.0" y1="0" x2="1497.0" y2="0"><stop offset="0.0000" stop-color="#004cff"/><stop offset="0.1037" stop-color="#053fff"/><stop offset="0.5389" stop-color="#e000ff"/><stop offset="0.6110" stop-color="#ff00fa"/><stop offset="0.8012" stop-color="#ff00b7"/><stop offset="1.0000" stop-color="#ff008d"/></linearGradient><linearGradient id="t70" gradientUnits="userSpaceOnUse" x1="1150.0" y1="0" x2="1497.0" y2="0"><stop offset="0.0000" stop-color="#004aff"/><stop offset="0.1037" stop-color="#043dff"/><stop offset="0.5331" stop-color="#da00ff"/><stop offset="0.6196" stop-color="#ff00fa"/><stop offset="0.8098" stop-color="#ff00b8"/><stop offset="1.0000" stop-color="#ff0090"/></linearGradient><linearGradient id="t71" gradientUnits="userSpaceOnUse" x1="1150.0" y1="0" x2="1497.0" y2="0"><stop offset="0.0000" stop-color="#0048ff"/><stop offset="0.1066" stop-color="#053bff"/><stop offset="0.5245" stop-color="#d200ff"/><stop offset="0.6282" stop-color="#ff00fa"/><stop offset="0.8213" stop-color="#ff00b8"/><stop offset="1.0000" stop-color="#ff0092"/></linearGradient><linearGradient id="t72" gradientUnits="userSpaceOnUse" x1="1150.0" y1="0" x2="1497.0" y2="0"><stop offset="0.0000" stop-color="#0046ff"/><stop offset="0.1066" stop-color="#0439ff"/><stop offset="0.5159" stop-color="#cb00ff"/><stop offset="0.6369" stop-color="#ff00fa"/><stop offset="0.8329" stop-color="#ff00b8"/><stop offset="1.0000" stop-color="#ff0095"/></linearGradient><linearGradient id="t73" gradientUnits="userSpaceOnUse" x1="1150.0" y1="0" x2="1497.0" y2="0"><stop offset="0.0000" stop-color="#0044ff"/><stop offset="0.1095" stop-color="#0537ff"/><stop offset="0.5072" stop-color="#c300ff"/><stop offset="0.6455" stop-color="#ff00fa"/><stop offset="0.8444" stop-color="#ff00b8"/><stop offset="1.0000" stop-color="#ff0097"/></linearGradient><linearGradient id="t74" gradientUnits="userSpaceOnUse" x1="1150.0" y1="0" x2="1497.0" y2="0"><stop offset="0.0000" stop-color="#0042ff"/><stop offset="0.1095" stop-color="#0435ff"/><stop offset="0.4986" stop-color="#bc00ff"/><stop offset="0.6542" stop-color="#ff00fa"/><stop offset="0.8559" stop-color="#ff00b8"/><stop offset="1.0000" stop-color="#ff0099"/></linearGradient><linearGradient id="t75" gradientUnits="userSpaceOnUse" x1="1150.0" y1="0" x2="1497.0" y2="0"><stop offset="0.0000" stop-color="#0041ff"/><stop offset="0.1124" stop-color="#0533ff"/><stop offset="0.4928" stop-color="#b700ff"/><stop offset="0.6628" stop-color="#ff00fa"/><stop offset="0.8674" stop-color="#ff00b8"/><stop offset="1.0000" stop-color="#ff009c"/></linearGradient><linearGradient id="t76" gradientUnits="userSpaceOnUse" x1="1150.0" y1="0" x2="1497.0" y2="0"><stop offset="0.0000" stop-color="#003fff"/><stop offset="0.1124" stop-color="#0431ff"/><stop offset="0.4841" stop-color="#b000ff"/><stop offset="0.6715" stop-color="#ff00fb"/><stop offset="0.8790" stop-color="#ff00b8"/><stop offset="1.0000" stop-color="#ff009e"/></linearGradient><linearGradient id="t77" gradientUnits="userSpaceOnUse" x1="1150.0" y1="0" x2="1497.0" y2="0"><stop offset="0.0000" stop-color="#003dff"/><stop offset="0.1153" stop-color="#052fff"/><stop offset="0.4755" stop-color="#a900ff"/><stop offset="0.6801" stop-color="#ff00fb"/><stop offset="0.8905" stop-color="#ff00b8"/><stop offset="1.0000" stop-color="#ff00a1"/></linearGradient><linearGradient id="t78" gradientUnits="userSpaceOnUse" x1="1150.0" y1="0" x2="1497.0" y2="0"><stop offset="0.0000" stop-color="#003bff"/><stop offset="0.1153" stop-color="#042dff"/><stop offset="0.4669" stop-color="#a300ff"/><stop offset="0.6888" stop-color="#ff00fb"/><stop offset="0.9020" stop-color="#ff00b7"/><stop offset="1.0000" stop-color="#ff00a3"/></linearGradient><linearGradient id="t79" gradientUnits="userSpaceOnUse" x1="1150.0" y1="0" x2="1497.0" y2="0"><stop offset="0.0000" stop-color="#0039ff"/><stop offset="0.1182" stop-color="#052bff"/><stop offset="0.4582" stop-color="#9d00ff"/><stop offset="0.6974" stop-color="#ff00fb"/><stop offset="0.9135" stop-color="#ff00b7"/><stop offset="1.0000" stop-color="#ff00a5"/></linearGradient><linearGradient id="t80" gradientUnits="userSpaceOnUse" x1="1150.0" y1="0" x2="1497.0" y2="0"><stop offset="0.0000" stop-color="#0038ff"/><stop offset="0.1210" stop-color="#0529ff"/><stop offset="0.4524" stop-color="#9800ff"/><stop offset="0.7061" stop-color="#ff00fb"/><stop offset="0.9251" stop-color="#ff00b7"/><stop offset="1.0000" stop-color="#ff00a8"/></linearGradient><linearGradient id="t81" gradientUnits="userSpaceOnUse" x1="1150.0" y1="0" x2="1497.0" y2="0"><stop offset="0.0000" stop-color="#0036ff"/><stop offset="0.1210" stop-color="#0528ff"/><stop offset="0.4438" stop-color="#9200ff"/><stop offset="0.7147" stop-color="#ff00fb"/><stop offset="0.9366" stop-color="#ff00b7"/><stop offset="1.0000" stop-color="#ff00aa"/></linearGradient><linearGradient id="t82" gradientUnits="userSpaceOnUse" x1="1150.0" y1="0" x2="1497.0" y2="0"><stop offset="0.0000" stop-color="#0035ff"/><stop offset="0.1239" stop-color="#0526ff"/><stop offset="0.4352" stop-color="#8c00ff"/><stop offset="0.7262" stop-color="#ff00fa"/><stop offset="0.9510" stop-color="#ff00b7"/><stop offset="1.0000" stop-color="#ff00ad"/></linearGradient><linearGradient id="t83" gradientUnits="userSpaceOnUse" x1="1150.0" y1="0" x2="1497.0" y2="0"><stop offset="0.0000" stop-color="#0033ff"/><stop offset="0.1239" stop-color="#0425ff"/><stop offset="0.4294" stop-color="#8800ff"/><stop offset="0.7349" stop-color="#ff00fa"/><stop offset="0.9625" stop-color="#ff00b7"/><stop offset="1.0000" stop-color="#ff00af"/></linearGradient><linearGradient id="t84" gradientUnits="userSpaceOnUse" x1="1150.0" y1="0" x2="1497.0" y2="0"><stop offset="0.0000" stop-color="#0031ff"/><stop offset="0.1268" stop-color="#0523ff"/><stop offset="0.4207" stop-color="#8200ff"/><stop offset="0.7435" stop-color="#ff00fa"/><stop offset="0.9741" stop-color="#ff00b7"/><stop offset="1.0000" stop-color="#ff00b1"/></linearGradient><linearGradient id="t85" gradientUnits="userSpaceOnUse" x1="1150.0" y1="0" x2="1497.0" y2="0"><stop offset="0.0000" stop-color="#0030ff"/><stop offset="0.1268" stop-color="#0421ff"/><stop offset="0.4121" stop-color="#7d00ff"/><stop offset="0.7522" stop-color="#ff00fa"/><stop offset="0.9856" stop-color="#ff00b7"/><stop offset="1.0000" stop-color="#ff00b4"/></linearGradient><linearGradient id="t86" gradientUnits="userSpaceOnUse" x1="1150.0" y1="0" x2="1497.0" y2="0"><stop offset="0.0000" stop-color="#002eff"/><stop offset="0.1297" stop-color="#0520ff"/><stop offset="0.4063" stop-color="#7800ff"/><stop offset="0.7608" stop-color="#ff00fa"/><stop offset="0.9971" stop-color="#ff00b7"/><stop offset="1.0000" stop-color="#ff00b6"/></linearGradient><linearGradient id="t87" gradientUnits="userSpaceOnUse" x1="1150.0" y1="0" x2="1497.0" y2="0"><stop offset="0.0000" stop-color="#002dff"/><stop offset="0.1297" stop-color="#041eff"/><stop offset="0.3977" stop-color="#7300ff"/><stop offset="0.7695" stop-color="#ff00fa"/><stop offset="1.0000" stop-color="#ff00b9"/></linearGradient><linearGradient id="t88" gradientUnits="userSpaceOnUse" x1="1150.0" y1="0" x2="1497.0" y2="0"><stop offset="0.0000" stop-color="#002cff"/><stop offset="0.1326" stop-color="#051dff"/><stop offset="0.3890" stop-color="#6e00ff"/><stop offset="0.7781" stop-color="#ff00fa"/><stop offset="1.0000" stop-color="#ff00bb"/></linearGradient><linearGradient id="t89" gradientUnits="userSpaceOnUse" x1="1150.0" y1="0" x2="1497.0" y2="0"><stop offset="0.0000" stop-color="#002aff"/><stop offset="0.1326" stop-color="#041bff"/><stop offset="0.3804" stop-color="#6900ff"/><stop offset="0.7867" stop-color="#ff00fa"/><stop offset="1.0000" stop-color="#ff00be"/></linearGradient><linearGradient id="t90" gradientUnits="userSpaceOnUse" x1="1150.0" y1="0" x2="1497.0" y2="0"><stop offset="0.0000" stop-color="#0029ff"/><stop offset="0.1354" stop-color="#051aff"/><stop offset="0.3746" stop-color="#6500ff"/><stop offset="0.7954" stop-color="#ff00fa"/><stop offset="1.0000" stop-color="#ff00c0"/></linearGradient><linearGradient id="t91" gradientUnits="userSpaceOnUse" x1="1150.0" y1="0" x2="1497.0" y2="0"><stop offset="0.0000" stop-color="#0027ff"/><stop offset="0.1354" stop-color="#0418ff"/><stop offset="0.3660" stop-color="#6100ff"/><stop offset="0.8040" stop-color="#ff00fa"/><stop offset="1.0000" stop-color="#ff00c3"/></linearGradient><linearGradient id="t92" gradientUnits="userSpaceOnUse" x1="1150.0" y1="0" x2="1497.0" y2="0"><stop offset="0.0000" stop-color="#0026ff"/><stop offset="0.1383" stop-color="#0517ff"/><stop offset="0.3573" stop-color="#5c00ff"/><stop offset="0.8127" stop-color="#ff00fa"/><stop offset="1.0000" stop-color="#ff00c5"/></linearGradient><linearGradient id="t93" gradientUnits="userSpaceOnUse" x1="1150.0" y1="0" x2="1497.0" y2="0"><stop offset="0.0000" stop-color="#0025ff"/><stop offset="0.1383" stop-color="#0416ff"/><stop offset="0.3516" stop-color="#5800ff"/><stop offset="0.8213" stop-color="#ff00fa"/><stop offset="1.0000" stop-color="#ff00c7"/></linearGradient><linearGradient id="t94" gradientUnits="userSpaceOnUse" x1="1150.0" y1="0" x2="1497.0" y2="0"><stop offset="0.0000" stop-color="#0024ff"/><stop offset="0.1412" stop-color="#0514ff"/><stop offset="0.3429" stop-color="#5400ff"/><stop offset="0.8300" stop-color="#ff00fb"/><stop offset="1.0000" stop-color="#ff00ca"/></linearGradient><linearGradient id="t95" gradientUnits="userSpaceOnUse" x1="1150.0" y1="0" x2="1497.0" y2="0"><stop offset="0.0000" stop-color="#0022ff"/><stop offset="0.1412" stop-color="#0413ff"/><stop offset="0.3372" stop-color="#5000ff"/><stop offset="0.8386" stop-color="#ff00fb"/><stop offset="1.0000" stop-color="#ff00cc"/></linearGradient><linearGradient id="t96" gradientUnits="userSpaceOnUse" x1="1150.0" y1="0" x2="1497.0" y2="0"><stop offset="0.0000" stop-color="#0021ff"/><stop offset="0.1441" stop-color="#0511ff"/><stop offset="0.3314" stop-color="#4d00ff"/><stop offset="0.8473" stop-color="#ff00fb"/><stop offset="1.0000" stop-color="#ff00cf"/></linearGradient><linearGradient id="t97" gradientUnits="userSpaceOnUse" x1="1150.0" y1="0" x2="1497.0" y2="0"><stop offset="0.0000" stop-color="#0020ff"/><stop offset="0.1441" stop-color="#0410ff"/><stop offset="0.3256" stop-color="#4a00ff"/><stop offset="0.8559" stop-color="#ff00fb"/><stop offset="1.0000" stop-color="#ff00d1"/></linearGradient><linearGradient id="t98" gradientUnits="userSpaceOnUse" x1="1150.0" y1="0" x2="1497.0" y2="0"><stop offset="0.0000" stop-color="#001fff"/><stop offset="0.1470" stop-color="#050fff"/><stop offset="0.3199" stop-color="#4600ff"/><stop offset="0.8646" stop-color="#ff00fb"/><stop offset="1.0000" stop-color="#ff00d4"/></linearGradient><linearGradient id="t99" gradientUnits="userSpaceOnUse" x1="1150.0" y1="0" x2="1497.0" y2="0"><stop offset="0.0000" stop-color="#001eff"/><stop offset="0.1470" stop-color="#040eff"/><stop offset="0.3141" stop-color="#4300ff"/><stop offset="0.8732" stop-color="#ff00fb"/><stop offset="1.0000" stop-color="#ff00d6"/></linearGradient><linearGradient id="t100" gradientUnits="userSpaceOnUse" x1="1150.0" y1="0" x2="1497.0" y2="0"><stop offset="0.0000" stop-color="#001cff"/><stop offset="0.1499" stop-color="#050cff"/><stop offset="0.3084" stop-color="#4000ff"/><stop offset="0.8818" stop-color="#ff00fb"/><stop offset="1.0000" stop-color="#ff00d9"/></linearGradient><linearGradient id="t101" gradientUnits="userSpaceOnUse" x1="1150.0" y1="0" x2="1497.0" y2="0"><stop offset="0.0000" stop-color="#001bff"/><stop offset="0.1527" stop-color="#050bff"/><stop offset="0.3084" stop-color="#3f00ff"/><stop offset="0.8934" stop-color="#ff00fa"/><stop offset="1.0000" stop-color="#ff00db"/></linearGradient><linearGradient id="t102" gradientUnits="userSpaceOnUse" x1="1150.0" y1="0" x2="1497.0" y2="0"><stop offset="0.0000" stop-color="#001aff"/><stop offset="0.1527" stop-color="#050aff"/><stop offset="0.3055" stop-color="#3d00ff"/><stop offset="0.9020" stop-color="#ff00fa"/><stop offset="1.0000" stop-color="#ff00de"/></linearGradient><linearGradient id="t103" gradientUnits="userSpaceOnUse" x1="1150.0" y1="0" x2="1497.0" y2="0"><stop offset="0.0000" stop-color="#0019ff"/><stop offset="0.1556" stop-color="#0508ff"/><stop offset="0.3141" stop-color="#3f00ff"/><stop offset="0.9107" stop-color="#ff00fa"/><stop offset="1.0000" stop-color="#ff00e0"/></linearGradient><linearGradient id="t104" gradientUnits="userSpaceOnUse" x1="1150.0" y1="0" x2="1497.0" y2="0"><stop offset="0.0000" stop-color="#0018ff"/><stop offset="0.1556" stop-color="#0507ff"/><stop offset="0.3343" stop-color="#4500ff"/><stop offset="0.9193" stop-color="#ff00fa"/><stop offset="1.0000" stop-color="#ff00e3"/></linearGradient><linearGradient id="t105" gradientUnits="userSpaceOnUse" x1="1150.0" y1="0" x2="1497.0" y2="0"><stop offset="0.0000" stop-color="#0017ff"/><stop offset="0.1585" stop-color="#0506ff"/><stop offset="0.4928" stop-color="#7700ff"/><stop offset="0.9280" stop-color="#ff00fa"/><stop offset="1.0000" stop-color="#ff00e5"/></linearGradient><linearGradient id="t106" gradientUnits="userSpaceOnUse" x1="1150.0" y1="0" x2="1497.0" y2="0"><stop offset="0.0000" stop-color="#0016ff"/><stop offset="0.1585" stop-color="#0505ff"/><stop offset="0.9280" stop-color="#ff00fd"/><stop offset="1.0000" stop-color="#ff00e8"/></linearGradient><linearGradient id="t107" gradientUnits="userSpaceOnUse" x1="1150.0" y1="0" x2="1497.0" y2="0"><stop offset="0.0000" stop-color="#0015ff"/><stop offset="0.1614" stop-color="#0503ff"/><stop offset="0.9366" stop-color="#ff00fd"/><stop offset="1.0000" stop-color="#ff00ea"/></linearGradient><linearGradient id="t108" gradientUnits="userSpaceOnUse" x1="1150.0" y1="0" x2="1497.0" y2="0"><stop offset="0.0000" stop-color="#0014ff"/><stop offset="0.1614" stop-color="#0502ff"/><stop offset="0.9452" stop-color="#ff00fd"/><stop offset="1.0000" stop-color="#ff00ed"/></linearGradient><linearGradient id="t109" gradientUnits="userSpaceOnUse" x1="1150.0" y1="0" x2="1497.0" y2="0"><stop offset="0.0000" stop-color="#0013ff"/><stop offset="0.1643" stop-color="#0501ff"/><stop offset="0.9539" stop-color="#ff00fd"/><stop offset="1.0000" stop-color="#ff00f0"/></linearGradient><linearGradient id="t110" gradientUnits="userSpaceOnUse" x1="1150.0" y1="0" x2="1497.0" y2="0"><stop offset="0.0000" stop-color="#0012ff"/><stop offset="0.1643" stop-color="#0500ff"/><stop offset="0.9625" stop-color="#ff00fd"/><stop offset="1.0000" stop-color="#ff00f2"/></linearGradient><linearGradient id="insBright" gradientUnits="userSpaceOnUse" x1="1440" y1="470" x2="1650" y2="570"><stop offset="0" stop-color="#99ff00"/><stop offset="0.45" stop-color="#ffff00"/><stop offset="1" stop-color="#ff9900"/></linearGradient><linearGradient id="insDark" gradientUnits="userSpaceOnUse" x1="1440" y1="430" x2="1650" y2="540"><stop offset="0" stop-color="#3c8800"/><stop offset="0.5" stop-color="#8a8c00"/><stop offset="1" stop-color="#8c5a00"/></linearGradient><clipPath id="clipIns"><rect x="1438.2" y="426.8" width="212.0" height="144.59999999999997"/></clipPath></defs>
<rect x="0" y="0" width="1656" height="943" fill="#333333"/>
<rect x="0" y="0" width="1656" height="36" fill="#232323"/>
<rect x="0" y="0" width="70" height="35" fill="url(#tabg)"/>
<rect x="71" y="0" width="41" height="35" fill="url(#tabg)"/>
<line x1="71.5" y1="0" x2="71.5" y2="35" stroke="#8a8a8a" stroke-width="1"/>
<line x1="112.5" y1="0" x2="112.5" y2="35" stroke="#8a8a8a" stroke-width="1"/>
<circle cx="90.5" cy="19.5" r="12" fill="url(#plusg)"/>
<line x1="86" y1="20.5" x2="95" y2="20.5" stroke="#9a9a9a" stroke-width="1"/>
<line x1="90.5" y1="16" x2="90.5" y2="25" stroke="#9a9a9a" stroke-width="1"/>
<text x="6" y="23" font-size="13" fill="#e8e8e8" textLength="57" lengthAdjust="spacingAndGlyphs">History 1</text>
<rect x="1053" y="0" width="178" height="35" fill="url(#devg)"/>
<rect x="1053" y="0" width="7" height="35" fill="#22dd22"/>
<circle cx="1162" cy="16.5" r="12" fill="url(#ddg)"/>
<path d="M1156.5,14.5 L1167.5,14.5 L1162,20.5 Z" fill="#f0f0f0"/>
<text x="1064" y="12" font-size="13" fill="#ececec" textLength="81" lengthAdjust="spacingAndGlyphs">X-Rite i1Pro 3</text>
<text x="1064" y="30" font-size="13" fill="#ececec" textLength="69" lengthAdjust="spacingAndGlyphs">Direct View</text>
<line x1="1186.5" y1="2" x2="1186.5" y2="35" stroke="#3a3a3a" stroke-width="1"/>
<circle cx="1212.5" cy="16.5" r="15.5" fill="#0000e6" stroke="#ffffff" stroke-width="1"/>
<text x="1212.5" y="21" font-size="11.5" fill="#ffffff" text-anchor="middle" font-weight="bold" textLength="18.5" lengthAdjust="spacingAndGlyphs">711</text>
<rect x="1239.5" y="0" width="161.5" height="35" fill="url(#devg)"/>
<rect x="1239.5" y="0" width="7" height="35" fill="#22dd22"/>
<circle cx="1381" cy="16.5" r="12" fill="url(#ddg)"/>
<path d="M1375.5,14.5 L1386.5,14.5 L1381,20.5 Z" fill="#f0f0f0"/>
<text x="1250.5" y="12" font-size="13" fill="#ececec" textLength="80" lengthAdjust="spacingAndGlyphs">Mobile Forge</text>
<rect x="1409.5" y="0" width="178.5" height="35" fill="url(#devg)"/>
<rect x="1409.5" y="0" width="7" height="35" fill="#e6e600"/>
<circle cx="1568" cy="16.5" r="12" fill="url(#ddg)"/>
<path d="M1562.5,14.5 L1573.5,14.5 L1568,20.5 Z" fill="#f0f0f0"/>
<text x="1420.5" y="12.2" font-size="13" fill="#ececec" textLength="131" lengthAdjust="spacingAndGlyphs">Direct Display Control</text>
<rect x="1592" y="-4" width="41" height="36" rx="4" fill="url(#gearg)" stroke="#bdbdbd" stroke-width="1"/>
<circle cx="1613" cy="15.5" r="12" fill="url(#ddg)"/>
<rect x="1611.3" y="7.5" width="3.4" height="4" fill="#d8d8d8" transform="rotate(0 1613 15.5)"/><rect x="1611.3" y="7.5" width="3.4" height="4" fill="#d8d8d8" transform="rotate(45 1613 15.5)"/><rect x="1611.3" y="7.5" width="3.4" height="4" fill="#d8d8d8" transform="rotate(90 1613 15.5)"/><rect x="1611.3" y="7.5" width="3.4" height="4" fill="#d8d8d8" transform="rotate(135 1613 15.5)"/><rect x="1611.3" y="7.5" width="3.4" height="4" fill="#d8d8d8" transform="rotate(180 1613 15.5)"/><rect x="1611.3" y="7.5" width="3.4" height="4" fill="#d8d8d8" transform="rotate(225 1613 15.5)"/><rect x="1611.3" y="7.5" width="3.4" height="4" fill="#d8d8d8" transform="rotate(270 1613 15.5)"/><rect x="1611.3" y="7.5" width="3.4" height="4" fill="#d8d8d8" transform="rotate(315 1613 15.5)"/>
<circle cx="1613" cy="15.5" r="5.6" fill="none" stroke="#d8d8d8" stroke-width="2.6"/>
<rect x="1635" y="-4" width="30" height="36" rx="4" fill="url(#gearg)" stroke="#bdbdbd" stroke-width="1"/>
<circle cx="1656" cy="15.5" r="12" fill="url(#ddg)"/>
<path d="M1648,15.5 L1656,10 L1656,21 Z" fill="#f0f0f0"/>
<text x="22.5" y="100" font-size="38" fill="#f4f4f4" textLength="182" lengthAdjust="spacingAndGlyphs">Saturation</text>
<rect x="355.5" y="60.5" width="15" height="62" rx="2" fill="url(#sbg)"/>
<rect x="356.5" y="61.5" width="13" height="13" rx="2" fill="#6e6e6e"/>
<rect x="356.5" y="108.5" width="13" height="13" rx="2" fill="#6e6e6e"/>
<path d="M358,71 L368,71 L363,65.5 Z" fill="#3a3a3a"/>
<path d="M358,112 L368,112 L363,117.5 Z" fill="#3a3a3a"/>
<circle cx="363" cy="84.8" r="6.5" fill="#4e4e4e"/>
<rect x="41.5" y="156.4" width="311.5" height="413.80000000000007" fill="#232323"/>
<line x1="83.0" y1="156.4" x2="83.0" y2="570.2" stroke="#8c8c8c" stroke-width="1.3"/>
<line x1="124.5" y1="156.4" x2="124.5" y2="570.2" stroke="#8c8c8c" stroke-width="1.3"/>
<line x1="166.0" y1="156.4" x2="166.0" y2="570.2" stroke="#8c8c8c" stroke-width="1.3"/>
<line x1="207.5" y1="156.4" x2="207.5" y2="570.2" stroke="#8c8c8c" stroke-width="1.3"/>
<line x1="249.0" y1="156.4" x2="249.0" y2="570.2" stroke="#8c8c8c" stroke-width="1.3"/>
<line x1="290.5" y1="156.4" x2="290.5" y2="570.2" stroke="#8c8c8c" stroke-width="1.3"/>
<line x1="332.0" y1="156.4" x2="332.0" y2="570.2" stroke="#8c8c8c" stroke-width="1.3"/>
<rect x="41.5" y="156.4" width="311.5" height="413.80000000000007" fill="none" stroke="#9c9c9c" stroke-width="1.6"/>
<text x="180" y="151.5" font-size="14" fill="#d4d4d4" text-anchor="middle" textLength="79" lengthAdjust="spacingAndGlyphs">DeltaE 2000</text>
<line x1="35.5" y1="156.4" x2="41.5" y2="156.4" stroke="#b0b0b0" stroke-width="1.3"/>
<line x1="35.5" y1="225.36666666666667" x2="41.5" y2="225.36666666666667" stroke="#b0b0b0" stroke-width="1.3"/>
<line x1="35.5" y1="294.33333333333337" x2="41.5" y2="294.33333333333337" stroke="#b0b0b0" stroke-width="1.3"/>
<line x1="35.5" y1="363.30000000000007" x2="41.5" y2="363.30000000000007" stroke="#b0b0b0" stroke-width="1.3"/>
<line x1="35.5" y1="432.26666666666677" x2="41.5" y2="432.26666666666677" stroke="#b0b0b0" stroke-width="1.3"/>
<line x1="35.5" y1="501.23333333333346" x2="41.5" y2="501.23333333333346" stroke="#b0b0b0" stroke-width="1.3"/>
<line x1="35.5" y1="570.2" x2="41.5" y2="570.2" stroke="#b0b0b0" stroke-width="1.3"/>
<line x1="41.5" y1="570.2" x2="41.5" y2="576.2" stroke="#d0d0d0" stroke-width="1.3"/>
<text x="41.5" y="592" font-size="14.5" fill="#d4d4d4" text-anchor="middle">0</text>
<line x1="83.0" y1="570.2" x2="83.0" y2="576.2" stroke="#d0d0d0" stroke-width="1.3"/>
<text x="83.0" y="592" font-size="14.5" fill="#d4d4d4" text-anchor="middle">2</text>
<line x1="124.5" y1="570.2" x2="124.5" y2="576.2" stroke="#d0d0d0" stroke-width="1.3"/>
<text x="124.5" y="592" font-size="14.5" fill="#d4d4d4" text-anchor="middle">4</text>
<line x1="166.0" y1="570.2" x2="166.0" y2="576.2" stroke="#d0d0d0" stroke-width="1.3"/>
<text x="166.0" y="592" font-size="14.5" fill="#d4d4d4" text-anchor="middle">6</text>
<line x1="207.5" y1="570.2" x2="207.5" y2="576.2" stroke="#d0d0d0" stroke-width="1.3"/>
<text x="207.5" y="592" font-size="14.5" fill="#d4d4d4" text-anchor="middle">8</text>
<line x1="249.0" y1="570.2" x2="249.0" y2="576.2" stroke="#d0d0d0" stroke-width="1.3"/>
<text x="249.0" y="592" font-size="14.5" fill="#d4d4d4" text-anchor="middle">10</text>
<line x1="290.5" y1="570.2" x2="290.5" y2="576.2" stroke="#d0d0d0" stroke-width="1.3"/>
<text x="290.5" y="592" font-size="14.5" fill="#d4d4d4" text-anchor="middle">12</text>
<line x1="332.0" y1="570.2" x2="332.0" y2="576.2" stroke="#d0d0d0" stroke-width="1.3"/>
<text x="332.0" y="592" font-size="14.5" fill="#d4d4d4" text-anchor="middle">14</text>
<text x="40" y="197.88333333333335" font-size="14.5" fill="#d4d4d4" text-anchor="end">100%</text>
<text x="40" y="266.85" font-size="14.5" fill="#d4d4d4" text-anchor="end">80%</text>
<text x="40" y="335.8166666666667" font-size="14.5" fill="#d4d4d4" text-anchor="end">60%</text>
<text x="40" y="404.7833333333334" font-size="14.5" fill="#d4d4d4" text-anchor="end">40%</text>
<text x="40" y="473.7500000000001" font-size="14.5" fill="#d4d4d4" text-anchor="end">20%</text>
<text x="40" y="542.7166666666668" font-size="14.5" fill="#d4d4d4" text-anchor="end">100</text>
<rect x="42.0" y="163.7" width="58.0" height="7.1" fill="url(#de0)" stroke="#000" stroke-width="1.1"/>
<rect x="42.0" y="171.9" width="96.1" height="7.1" fill="url(#de1)" stroke="#000" stroke-width="1.1"/>
<rect x="42.0" y="180.1" width="69.1" height="7.1" fill="url(#de2)" stroke="#000" stroke-width="1.1"/>
<rect x="42.0" y="188.3" width="69.1" height="7.1" fill="url(#de3)" stroke="#000" stroke-width="1.1"/>
<rect x="42.0" y="196.5" width="59.1" height="7.1" fill="url(#de4)" stroke="#000" stroke-width="1.1"/>
<rect x="42.0" y="204.7" width="93.0" height="7.1" fill="url(#de5)" stroke="#000" stroke-width="1.1"/>
<rect x="42.0" y="232.7" width="52.5" height="7.1" fill="url(#de6)" stroke="#000" stroke-width="1.1"/>
<rect x="42.0" y="240.9" width="88.9" height="7.1" fill="url(#de7)" stroke="#000" stroke-width="1.1"/>
<rect x="42.0" y="249.1" width="78.7" height="7.1" fill="url(#de8)" stroke="#000" stroke-width="1.1"/>
<rect x="42.0" y="257.3" width="73.6" height="7.1" fill="url(#de9)" stroke="#000" stroke-width="1.1"/>
<rect x="42.0" y="265.5" width="68.8" height="7.1" fill="url(#de10)" stroke="#000" stroke-width="1.1"/>
<rect x="42.0" y="273.7" width="61.7" height="7.1" fill="url(#de11)" stroke="#000" stroke-width="1.1"/>
<rect x="42.0" y="301.6" width="39.0" height="7.1" fill="url(#de12)" stroke="#000" stroke-width="1.1"/>
<rect x="42.0" y="309.8" width="80.8" height="7.1" fill="url(#de13)" stroke="#000" stroke-width="1.1"/>
<rect x="42.0" y="318.0" width="58.8" height="7.1" fill="url(#de14)" stroke="#000" stroke-width="1.1"/>
<rect x="42.0" y="326.2" width="76.8" height="7.1" fill="url(#de15)" stroke="#000" stroke-width="1.1"/>
<rect x="42.0" y="334.4" width="71.9" height="7.1" fill="url(#de16)" stroke="#000" stroke-width="1.1"/>
<rect x="42.0" y="342.6" width="46.9" height="7.1" fill="url(#de17)" stroke="#000" stroke-width="1.1"/>
<rect x="42.0" y="370.6" width="48.5" height="7.1" fill="url(#de18)" stroke="#000" stroke-width="1.1"/>
<rect x="42.0" y="378.8" width="72.9" height="7.1" fill="url(#de19)" stroke="#000" stroke-width="1.1"/>
<rect x="42.0" y="387.0" width="60.7" height="7.1" fill="url(#de20)" stroke="#000" stroke-width="1.1"/>
<rect x="42.0" y="395.2" width="76.8" height="7.1" fill="url(#de21)" stroke="#000" stroke-width="1.1"/>
<rect x="42.0" y="403.4" width="69.9" height="7.1" fill="url(#de22)" stroke="#000" stroke-width="1.1"/>
<rect x="42.0" y="411.6" width="42.6" height="7.1" fill="url(#de23)" stroke="#000" stroke-width="1.1"/>
<rect x="42.0" y="439.6" width="45.6" height="7.1" fill="url(#de24)" stroke="#000" stroke-width="1.1"/>
<rect x="42.0" y="447.8" width="69.9" height="7.1" fill="url(#de25)" stroke="#000" stroke-width="1.1"/>
<rect x="42.0" y="456.0" width="69.9" height="7.1" fill="url(#de26)" stroke="#000" stroke-width="1.1"/>
<rect x="42.0" y="464.2" width="83.4" height="7.1" fill="url(#de27)" stroke="#000" stroke-width="1.1"/>
<rect x="42.0" y="472.4" width="78.5" height="7.1" fill="url(#de28)" stroke="#000" stroke-width="1.1"/>
<rect x="42.0" y="480.6" width="56.1" height="7.1" fill="url(#de29)" stroke="#000" stroke-width="1.1"/>
<rect x="42.0" y="556.8" width="99.0" height="7" fill="url(#dew)" stroke="#000" stroke-width="1.4"/>
<rect x="406.7" y="89.3" width="144.3" height="316.4" fill="#232323"/>
<line x1="406.7" y1="89.3" x2="551" y2="89.3" stroke="#9a9a9a" stroke-width="1.3"/>
<line x1="400.7" y1="89.3" x2="406.7" y2="89.3" stroke="#d8d8d8" stroke-width="1.6"/>
<text x="399.7" y="94.89999999999999" font-size="14.5" fill="#d8d8d8" text-anchor="end">15</text>
<line x1="406.7" y1="143.4" x2="551" y2="143.4" stroke="#9a9a9a" stroke-width="1.3"/>
<line x1="400.7" y1="143.4" x2="406.7" y2="143.4" stroke="#d8d8d8" stroke-width="1.6"/>
<text x="399.7" y="149.0" font-size="14.5" fill="#d8d8d8" text-anchor="end">10</text>
<line x1="406.7" y1="196.1" x2="551" y2="196.1" stroke="#9a9a9a" stroke-width="1.3"/>
<line x1="400.7" y1="196.1" x2="406.7" y2="196.1" stroke="#d8d8d8" stroke-width="1.6"/>
<text x="399.7" y="201.7" font-size="14.5" fill="#d8d8d8" text-anchor="end">5</text>
<line x1="406.7" y1="248.3" x2="551" y2="248.3" stroke="#9a9a9a" stroke-width="1.3"/>
<line x1="400.7" y1="248.3" x2="406.7" y2="248.3" stroke="#d8d8d8" stroke-width="1.6"/>
<text x="399.7" y="253.9" font-size="14.5" fill="#d8d8d8" text-anchor="end">0</text>
<line x1="406.7" y1="301.3" x2="551" y2="301.3" stroke="#9a9a9a" stroke-width="1.3"/>
<line x1="400.7" y1="301.3" x2="406.7" y2="301.3" stroke="#d8d8d8" stroke-width="1.6"/>
<text x="399.7" y="306.90000000000003" font-size="14.5" fill="#d8d8d8" text-anchor="end">-5</text>
<line x1="406.7" y1="354.3" x2="551" y2="354.3" stroke="#9a9a9a" stroke-width="1.3"/>
<line x1="400.7" y1="354.3" x2="406.7" y2="354.3" stroke="#d8d8d8" stroke-width="1.6"/>
<text x="399.7" y="359.90000000000003" font-size="14.5" fill="#d8d8d8" text-anchor="end">-10</text>
<line x1="406.7" y1="405.7" x2="551" y2="405.7" stroke="#9a9a9a" stroke-width="1.3"/>
<line x1="400.7" y1="405.7" x2="406.7" y2="405.7" stroke="#d8d8d8" stroke-width="1.6"/>
<text x="399.7" y="411.3" font-size="14.5" fill="#d8d8d8" text-anchor="end">-15</text>
<rect x="406.7" y="89.3" width="144.3" height="316.4" fill="none" stroke="#9c9c9c" stroke-width="1.6"/>
<line x1="406.7" y1="405.7" x2="406.7" y2="411.7" stroke="#d0d0d0" stroke-width="1.3"/>
<line x1="551" y1="405.7" x2="551" y2="411.7" stroke="#d0d0d0" stroke-width="1.3"/>
<text x="465.85" y="84" font-size="14" fill="#d4d4d4" text-anchor="middle">Delta L</text>
<text x="478.85" y="422" font-size="14" fill="#d4d4d4" text-anchor="middle">100%</text>
<rect x="603.6" y="89.3" width="144.69999999999993" height="316.4" fill="#232323"/>
<line x1="603.6" y1="89.3" x2="748.3" y2="89.3" stroke="#9a9a9a" stroke-width="1.3"/>
<line x1="597.6" y1="89.3" x2="603.6" y2="89.3" stroke="#d8d8d8" stroke-width="1.6"/>
<text x="596.6" y="94.89999999999999" font-size="14.5" fill="#d8d8d8" text-anchor="end">15</text>
<line x1="603.6" y1="143.4" x2="748.3" y2="143.4" stroke="#9a9a9a" stroke-width="1.3"/>
<line x1="597.6" y1="143.4" x2="603.6" y2="143.4" stroke="#d8d8d8" stroke-width="1.6"/>
<text x="596.6" y="149.0" font-size="14.5" fill="#d8d8d8" text-anchor="end">10</text>
<line x1="603.6" y1="196.1" x2="748.3" y2="196.1" stroke="#9a9a9a" stroke-width="1.3"/>
<line x1="597.6" y1="196.1" x2="603.6" y2="196.1" stroke="#d8d8d8" stroke-width="1.6"/>
<text x="596.6" y="201.7" font-size="14.5" fill="#d8d8d8" text-anchor="end">5</text>
<line x1="603.6" y1="248.3" x2="748.3" y2="248.3" stroke="#9a9a9a" stroke-width="1.3"/>
<line x1="597.6" y1="248.3" x2="603.6" y2="248.3" stroke="#d8d8d8" stroke-width="1.6"/>
<text x="596.6" y="253.9" font-size="14.5" fill="#d8d8d8" text-anchor="end">0</text>
<line x1="603.6" y1="301.3" x2="748.3" y2="301.3" stroke="#9a9a9a" stroke-width="1.3"/>
<line x1="597.6" y1="301.3" x2="603.6" y2="301.3" stroke="#d8d8d8" stroke-width="1.6"/>
<text x="596.6" y="306.90000000000003" font-size="14.5" fill="#d8d8d8" text-anchor="end">-5</text>
<line x1="603.6" y1="354.3" x2="748.3" y2="354.3" stroke="#9a9a9a" stroke-width="1.3"/>
<line x1="597.6" y1="354.3" x2="603.6" y2="354.3" stroke="#d8d8d8" stroke-width="1.6"/>
<text x="596.6" y="359.90000000000003" font-size="14.5" fill="#d8d8d8" text-anchor="end">-10</text>
<line x1="603.6" y1="405.7" x2="748.3" y2="405.7" stroke="#9a9a9a" stroke-width="1.3"/>
<line x1="597.6" y1="405.7" x2="603.6" y2="405.7" stroke="#d8d8d8" stroke-width="1.6"/>
<text x="596.6" y="411.3" font-size="14.5" fill="#d8d8d8" text-anchor="end">-15</text>
<rect x="603.6" y="89.3" width="144.69999999999993" height="316.4" fill="none" stroke="#9c9c9c" stroke-width="1.6"/>
<line x1="603.6" y1="405.7" x2="603.6" y2="411.7" stroke="#d0d0d0" stroke-width="1.3"/>
<line x1="748.3" y1="405.7" x2="748.3" y2="411.7" stroke="#d0d0d0" stroke-width="1.3"/>
<text x="662.95" y="84" font-size="14" fill="#d4d4d4" text-anchor="middle">Delta C</text>
<text x="675.95" y="422" font-size="14" fill="#d4d4d4" text-anchor="middle">100%</text>
<rect x="801.3" y="89.3" width="144.70000000000005" height="316.4" fill="#232323"/>
<line x1="801.3" y1="89.3" x2="946" y2="89.3" stroke="#9a9a9a" stroke-width="1.3"/>
<line x1="795.3" y1="89.3" x2="801.3" y2="89.3" stroke="#d8d8d8" stroke-width="1.6"/>
<text x="794.3" y="94.89999999999999" font-size="14.5" fill="#d8d8d8" text-anchor="end">15</text>
<line x1="801.3" y1="143.4" x2="946" y2="143.4" stroke="#9a9a9a" stroke-width="1.3"/>
<line x1="795.3" y1="143.4" x2="801.3" y2="143.4" stroke="#d8d8d8" stroke-width="1.6"/>
<text x="794.3" y="149.0" font-size="14.5" fill="#d8d8d8" text-anchor="end">10</text>
<line x1="801.3" y1="196.1" x2="946" y2="196.1" stroke="#9a9a9a" stroke-width="1.3"/>
<line x1="795.3" y1="196.1" x2="801.3" y2="196.1" stroke="#d8d8d8" stroke-width="1.6"/>
<text x="794.3" y="201.7" font-size="14.5" fill="#d8d8d8" text-anchor="end">5</text>
<line x1="801.3" y1="248.3" x2="946" y2="248.3" stroke="#9a9a9a" stroke-width="1.3"/>
<line x1="795.3" y1="248.3" x2="801.3" y2="248.3" stroke="#d8d8d8" stroke-width="1.6"/>
<text x="794.3" y="253.9" font-size="14.5" fill="#d8d8d8" text-anchor="end">0</text>
<line x1="801.3" y1="301.3" x2="946" y2="301.3" stroke="#9a9a9a" stroke-width="1.3"/>
<line x1="795.3" y1="301.3" x2="801.3" y2="301.3" stroke="#d8d8d8" stroke-width="1.6"/>
<text x="794.3" y="306.90000000000003" font-size="14.5" fill="#d8d8d8" text-anchor="end">-5</text>
<line x1="801.3" y1="354.3" x2="946" y2="354.3" stroke="#9a9a9a" stroke-width="1.3"/>
<line x1="795.3" y1="354.3" x2="801.3" y2="354.3" stroke="#d8d8d8" stroke-width="1.6"/>
<text x="794.3" y="359.90000000000003" font-size="14.5" fill="#d8d8d8" text-anchor="end">-10</text>
<line x1="801.3" y1="405.7" x2="946" y2="405.7" stroke="#9a9a9a" stroke-width="1.3"/>
<line x1="795.3" y1="405.7" x2="801.3" y2="405.7" stroke="#d8d8d8" stroke-width="1.6"/>
<text x="794.3" y="411.3" font-size="14.5" fill="#d8d8d8" text-anchor="end">-15</text>
<rect x="801.3" y="89.3" width="144.70000000000005" height="316.4" fill="none" stroke="#9c9c9c" stroke-width="1.6"/>
<line x1="801.3" y1="405.7" x2="801.3" y2="411.7" stroke="#d0d0d0" stroke-width="1.3"/>
<line x1="946" y1="405.7" x2="946" y2="411.7" stroke="#d0d0d0" stroke-width="1.3"/>
<text x="860.65" y="84" font-size="14" fill="#d4d4d4" text-anchor="middle">Delta H</text>
<text x="873.65" y="422" font-size="14" fill="#d4d4d4" text-anchor="middle">100%</text>
<rect x="421" y="246.8" width="116" height="2.6" fill="#000"/>
<rect x="619" y="89.5" width="114.6" height="158.2" fill="url(#dcg)" stroke="#000" stroke-width="1.5"/>
<rect x="816.5" y="241.5" width="114" height="6.5" fill="url(#dhg)" stroke="#000" stroke-width="1.2"/>
<rect x="374" y="438.6" width="591.4" height="162.6" fill="#000000"/>
<rect x="394.0" y="446.2" width="99.8" height="131.3" fill="#c2c2a2"/>
<rect x="394.0" y="446.2" width="99.8" height="65.5" fill="#bdc2a8"/>
<rect x="394.5" y="446.7" width="98.8" height="130.3" fill="none" stroke="#f2f2f2" stroke-width="1.2"/>
<text x="444.0" y="592.5" font-size="12" fill="#f0f0f0" text-anchor="middle">20%</text>
<rect x="509.8" y="446.2" width="99.8" height="131.3" fill="#c2c087"/>
<rect x="509.8" y="446.2" width="99.8" height="65.5" fill="#bac387"/>
<rect x="510.3" y="446.7" width="98.8" height="130.3" fill="none" stroke="#f2f2f2" stroke-width="1.2"/>
<text x="559.8" y="592.5" font-size="12" fill="#f0f0f0" text-anchor="middle">40%</text>
<rect x="625.6" y="446.2" width="99.8" height="131.3" fill="#c2bf6c"/>
<rect x="625.6" y="446.2" width="99.8" height="65.5" fill="#bcc266"/>
<rect x="626.1" y="446.7" width="98.8" height="130.3" fill="none" stroke="#f2f2f2" stroke-width="1.2"/>
<text x="675.6" y="592.5" font-size="12" fill="#f0f0f0" text-anchor="middle">60%</text>
<rect x="741.4" y="446.2" width="99.8" height="131.3" fill="#c2bf4e"/>
<rect x="741.4" y="446.2" width="99.8" height="65.5" fill="#b9c035"/>
<rect x="741.9" y="446.7" width="98.8" height="130.3" fill="none" stroke="#f2f2f2" stroke-width="1.2"/>
<text x="791.4" y="592.5" font-size="12" fill="#f0f0f0" text-anchor="middle">80%</text>
<rect x="857.2" y="446.2" width="99.8" height="131.3" fill="#c4c052"/>
<rect x="857.2" y="446.2" width="99.8" height="65.5" fill="#c2c400"/>
<rect x="857.7" y="446.7" width="98.8" height="130.3" fill="none" stroke="#f2f2f2" stroke-width="1.2"/>
<text x="907.2" y="592.5" font-size="12" fill="#f0f0f0" text-anchor="middle">100%</text>
<text x="0" y="0" font-size="12" fill="#f0f0f0" text-anchor="middle" transform="translate(386.5 474.9) rotate(-90)">Actual</text>
<text x="0" y="0" font-size="12" fill="#f0f0f0" text-anchor="middle" transform="translate(386.5 549.3) rotate(-90)">Target</text>
<text x="48.9" y="646.7" font-size="28" fill="#f2f2f2" textLength="233" lengthAdjust="spacingAndGlyphs">Avg dE2000: 3,35</text>
<text x="45.2" y="687.3" font-size="28" fill="#f2f2f2" textLength="241.5" lengthAdjust="spacingAndGlyphs">Max dE2000: 4,81</text>
<text x="13.5" y="735.6" font-size="28" fill="#f2f2f2" textLength="218" lengthAdjust="spacingAndGlyphs">Current Reading</text>
<text x="13.5" y="769.6" font-size="23" fill="#f2f2f2" textLength="101" lengthAdjust="spacingAndGlyphs">x: 0,4285</text>
<text x="170" y="769.6" font-size="23" fill="#f2f2f2" textLength="102.5" lengthAdjust="spacingAndGlyphs">y: 0,5408</text>
<text x="13.5" y="811.7" font-size="23" fill="#f2f2f2" textLength="81" lengthAdjust="spacingAndGlyphs">fL: 72,7</text>
<text x="13.5" y="845" font-size="23" fill="#f2f2f2" textLength="158.5" lengthAdjust="spacingAndGlyphs">cd/m²: 249,07</text>
<rect x="355.9" y="653.7" width="249.5" height="180.0" fill="#232323"/>
<line x1="355.9" y1="685.4" x2="605.4" y2="685.4" stroke="#9a9a9a" stroke-width="1.3"/>
<line x1="349.9" y1="685.4" x2="355.9" y2="685.4" stroke="#d8d8d8" stroke-width="1.6"/>
<text x="348.9" y="690.4" font-size="14.5" fill="#d4d4d4" text-anchor="end">120</text>
<line x1="355.9" y1="745.1" x2="605.4" y2="745.1" stroke="#9a9a9a" stroke-width="1.3"/>
<line x1="349.9" y1="745.1" x2="355.9" y2="745.1" stroke="#d8d8d8" stroke-width="1.6"/>
<text x="348.9" y="750.1" font-size="14.5" fill="#d4d4d4" text-anchor="end">100</text>
<line x1="355.9" y1="804.4" x2="605.4" y2="804.4" stroke="#9a9a9a" stroke-width="1.3"/>
<line x1="349.9" y1="804.4" x2="355.9" y2="804.4" stroke="#d8d8d8" stroke-width="1.6"/>
<text x="348.9" y="809.4" font-size="14.5" fill="#d4d4d4" text-anchor="end">80</text>
<rect x="355.9" y="653.7" width="249.5" height="180.0" fill="none" stroke="#9c9c9c" stroke-width="1.6"/>
<line x1="355.9" y1="833.7" x2="355.9" y2="839.7" stroke="#d0d0d0" stroke-width="1.3"/>
<line x1="605.4" y1="833.7" x2="605.4" y2="839.7" stroke="#d0d0d0" stroke-width="1.3"/>
<text x="465.7" y="649" font-size="13.5" fill="#d4d4d4" text-anchor="middle">RGB Balance</text>
<text x="480.4" y="851.5" font-size="14" fill="#d4d4d4" text-anchor="middle">100%</text>
<rect x="380.5" y="751.3" width="64.6" height="83" fill="url(#rbr)" stroke="#000" stroke-width="1.6"/>
<rect x="446.6" y="742.1" width="65.3" height="92.2" fill="url(#rbg)" stroke="#000" stroke-width="1.6"/>
<rect x="513.4" y="823.8" width="64.6" height="10.5" fill="#5a5aff" stroke="#000" stroke-width="1.2"/>
<rect x="626.9" y="624" width="721.5000000000001" height="15.2" fill="#333333"/>
<rect x="626.9" y="639.2" width="721.5000000000001" height="15.4" fill="#171717"/>
<rect x="626.9" y="624" width="20.1" height="30.6" fill="#000000"/>
<rect x="647.0" y="654.6" width="701.4000000000001" height="28.500000000000004" fill="#424242"/>
<rect x="626.9" y="654.6" width="20.1" height="28.500000000000004" fill="#2c2c2c"/>
<text x="653.3" y="675.1" font-size="19" fill="#f2f2f2" textLength="78.3" lengthAdjust="spacingAndGlyphs">x: CIE31</text>
<text x="813" y="675.1" font-size="19" fill="#f2f2f2" textLength="68.4" lengthAdjust="spacingAndGlyphs">0,3262</text>
<text x="920.7" y="675.1" font-size="19" fill="#f2f2f2" textLength="68.4" lengthAdjust="spacingAndGlyphs">0,3521</text>
<text x="1029.8" y="675.1" font-size="19" fill="#f2f2f2" textLength="68.4" lengthAdjust="spacingAndGlyphs">0,3772</text>
<text x="1138.4" y="675.1" font-size="19" fill="#f2f2f2" textLength="68.4" lengthAdjust="spacingAndGlyphs">0,4003</text>
<text x="1246.5" y="675.1" font-size="19" fill="#f2f2f2" textLength="68.4" lengthAdjust="spacingAndGlyphs">0,4285</text>
<rect x="647.0" y="682.9" width="701.4000000000001" height="28.500000000000004" fill="#7f7f7f"/>
<rect x="626.9" y="682.9" width="20.1" height="28.500000000000004" fill="#262626"/>
<text x="653.3" y="703.4" font-size="19" fill="#f2f2f2" textLength="78.2" lengthAdjust="spacingAndGlyphs">y: CIE31</text>
<text x="813" y="703.4" font-size="19" fill="#f2f2f2" textLength="68.4" lengthAdjust="spacingAndGlyphs">0,3603</text>
<text x="920.7" y="703.4" font-size="19" fill="#f2f2f2" textLength="68.4" lengthAdjust="spacingAndGlyphs">0,4062</text>
<text x="1029.8" y="703.4" font-size="19" fill="#f2f2f2" textLength="68.4" lengthAdjust="spacingAndGlyphs">0,4494</text>
<text x="1138.4" y="703.4" font-size="19" fill="#f2f2f2" textLength="68.4" lengthAdjust="spacingAndGlyphs">0,4928</text>
<text x="1246.5" y="703.4" font-size="19" fill="#f2f2f2" textLength="68.4" lengthAdjust="spacingAndGlyphs">0,5408</text>
<rect x="647.0" y="711.2" width="701.4000000000001" height="28.500000000000004" fill="#424242"/>
<rect x="626.9" y="711.2" width="20.1" height="28.500000000000004" fill="#2c2c2c"/>
<text x="653.3" y="731.7" font-size="19" fill="#f2f2f2">Y</text>
<text x="813" y="731.7" font-size="19" fill="#f2f2f2" textLength="93.8" lengthAdjust="spacingAndGlyphs">263,3010</text>
<text x="920.7" y="731.7" font-size="19" fill="#f2f2f2" textLength="93.8" lengthAdjust="spacingAndGlyphs">258,4738</text>
<text x="1029.8" y="731.7" font-size="19" fill="#f2f2f2" textLength="93.8" lengthAdjust="spacingAndGlyphs">255,3671</text>
<text x="1138.4" y="731.7" font-size="19" fill="#f2f2f2" textLength="93.8" lengthAdjust="spacingAndGlyphs">251,8649</text>
<text x="1246.5" y="731.7" font-size="19" fill="#f2f2f2" textLength="93.8" lengthAdjust="spacingAndGlyphs">249,0745</text>
<rect x="647.0" y="739.5" width="701.4000000000001" height="28.500000000000004" fill="#7f7f7f"/>
<rect x="626.9" y="739.5" width="20.1" height="28.500000000000004" fill="#262626"/>
<text x="653.3" y="760.0" font-size="19" fill="#f2f2f2" textLength="143.9" lengthAdjust="spacingAndGlyphs">Target x:CIE31</text>
<text x="813" y="760.0" font-size="19" fill="#f2f2f2" textLength="68.4" lengthAdjust="spacingAndGlyphs">0,3344</text>
<text x="920.7" y="760.0" font-size="19" fill="#f2f2f2" textLength="68.4" lengthAdjust="spacingAndGlyphs">0,3564</text>
<text x="1029.8" y="760.0" font-size="19" fill="#f2f2f2" textLength="68.4" lengthAdjust="spacingAndGlyphs">0,3773</text>
<text x="1138.4" y="760.0" font-size="19" fill="#f2f2f2" textLength="68.4" lengthAdjust="spacingAndGlyphs">0,3969</text>
<text x="1246.5" y="760.0" font-size="19" fill="#f2f2f2" textLength="68.4" lengthAdjust="spacingAndGlyphs">0,4193</text>
<rect x="647.0" y="767.8000000000001" width="701.4000000000001" height="28.500000000000004" fill="#424242"/>
<rect x="626.9" y="767.8000000000001" width="20.1" height="28.500000000000004" fill="#2c2c2c"/>
<text x="653.3" y="788.3000000000001" font-size="19" fill="#f2f2f2" textLength="143.9" lengthAdjust="spacingAndGlyphs">Target y:CIE31</text>
<text x="813" y="788.3000000000001" font-size="19" fill="#f2f2f2" textLength="68.4" lengthAdjust="spacingAndGlyphs">0,3648</text>
<text x="920.7" y="788.3000000000001" font-size="19" fill="#f2f2f2" textLength="68.4" lengthAdjust="spacingAndGlyphs">0,4013</text>
<text x="1029.8" y="788.3000000000001" font-size="19" fill="#f2f2f2" textLength="68.4" lengthAdjust="spacingAndGlyphs">0,4358</text>
<text x="1138.4" y="788.3000000000001" font-size="19" fill="#f2f2f2" textLength="68.4" lengthAdjust="spacingAndGlyphs">0,4682</text>
<text x="1246.5" y="788.3000000000001" font-size="19" fill="#f2f2f2" textLength="68.4" lengthAdjust="spacingAndGlyphs">0,5053</text>
<rect x="647.0" y="796.1" width="701.4000000000001" height="28.500000000000004" fill="#7f7f7f"/>
<rect x="626.9" y="796.1" width="20.1" height="28.500000000000004" fill="#262626"/>
<text x="653.3" y="816.6" font-size="19" fill="#f2f2f2" textLength="83.6" lengthAdjust="spacingAndGlyphs">Target Y</text>
<text x="813" y="816.6" font-size="19" fill="#f2f2f2" textLength="93.8" lengthAdjust="spacingAndGlyphs">263,6682</text>
<text x="920.7" y="816.6" font-size="19" fill="#f2f2f2" textLength="93.8" lengthAdjust="spacingAndGlyphs">259,0401</text>
<text x="1029.8" y="816.6" font-size="19" fill="#f2f2f2" textLength="93.8" lengthAdjust="spacingAndGlyphs">255,4840</text>
<text x="1138.4" y="816.6" font-size="19" fill="#f2f2f2" textLength="93.8" lengthAdjust="spacingAndGlyphs">252,6932</text>
<text x="1246.5" y="816.6" font-size="19" fill="#f2f2f2" textLength="93.8" lengthAdjust="spacingAndGlyphs">249,9951</text>
<rect x="647.0" y="824.4000000000001" width="701.4000000000001" height="28.500000000000004" fill="#424242"/>
<rect x="626.9" y="824.4000000000001" width="20.1" height="28.500000000000004" fill="#2c2c2c"/>
<text x="653.3" y="844.9000000000001" font-size="19" fill="#f2f2f2" textLength="84" lengthAdjust="spacingAndGlyphs">ΔE 2000</text>
<text x="813" y="844.9000000000001" font-size="19" fill="#f2f2f2" textLength="68.4" lengthAdjust="spacingAndGlyphs">2,7580</text>
<text x="920.7" y="844.9000000000001" font-size="19" fill="#f2f2f2" textLength="68.4" lengthAdjust="spacingAndGlyphs">2,1513</text>
<text x="1029.8" y="844.9000000000001" font-size="19" fill="#f2f2f2" textLength="68.4" lengthAdjust="spacingAndGlyphs">2,2918</text>
<text x="1138.4" y="844.9000000000001" font-size="19" fill="#f2f2f2" textLength="68.4" lengthAdjust="spacingAndGlyphs">3,0439</text>
<text x="1246.5" y="844.9000000000001" font-size="19" fill="#f2f2f2" textLength="68.4" lengthAdjust="spacingAndGlyphs">4,5584</text>
<text x="813" y="645" font-size="17" fill="#f6f6f6" font-weight="bold" textLength="40.3" lengthAdjust="spacingAndGlyphs">20%</text>
<text x="920.7" y="645" font-size="17" fill="#f6f6f6" font-weight="bold" textLength="40.3" lengthAdjust="spacingAndGlyphs">40%</text>
<text x="1029.8" y="645" font-size="17" fill="#f6f6f6" font-weight="bold" textLength="40.3" lengthAdjust="spacingAndGlyphs">60%</text>
<text x="1138.4" y="645" font-size="17" fill="#f6f6f6" font-weight="bold" textLength="40.3" lengthAdjust="spacingAndGlyphs">80%</text>
<text x="1246.5" y="645" font-size="17" fill="#f6f6f6" font-weight="bold" textLength="51.8" lengthAdjust="spacingAndGlyphs">100%</text>
<rect x="1010" y="867" width="253" height="76" fill="url(#barbg)"/>
<rect x="0" y="867.2" width="55.3" height="80" rx="5" fill="url(#btng)"/>
<circle cx="27.5" cy="879.3" r="9.4" fill="url(#circg)"/>
<path d="M22,883 L33,883 L27.5,876.5 Z" fill="#2a2a2a"/>
<rect x="5.5" y="899.7" width="44" height="37.7" rx="4" fill="#ffff00" stroke="#c8c800" stroke-width="1"/>
<rect x="63.1" y="867.2" width="187" height="80" rx="5" fill="url(#btng)"/>
<rect x="69.9" y="874.2" width="174.2" height="44.8" rx="4" fill="#c2c2a2" stroke="#8a8a6a" stroke-width="0.8"/>
<text x="157.1" y="938.5" font-size="13" fill="#262626" text-anchor="middle" font-weight="bold">20%</text>
<rect x="253.1" y="867.2" width="187" height="80" rx="5" fill="url(#btng)"/>
<rect x="259.9" y="874.2" width="174.2" height="44.8" rx="4" fill="#c2c087" stroke="#8a8a6a" stroke-width="0.8"/>
<text x="347.1" y="938.5" font-size="13" fill="#262626" text-anchor="middle" font-weight="bold">40%</text>
<rect x="443.1" y="867.2" width="187" height="80" rx="5" fill="url(#btng)"/>
<rect x="449.90000000000003" y="874.2" width="174.2" height="44.8" rx="4" fill="#c2bf6c" stroke="#8a8a6a" stroke-width="0.8"/>
<text x="537.1" y="938.5" font-size="13" fill="#262626" text-anchor="middle" font-weight="bold">60%</text>
<rect x="633.1" y="867.2" width="187" height="80" rx="5" fill="url(#btng)"/>
<rect x="639.9" y="874.2" width="174.2" height="44.8" rx="4" fill="#c2bf4e" stroke="#8a8a6a" stroke-width="0.8"/>
<text x="727.1" y="938.5" font-size="13" fill="#262626" text-anchor="middle" font-weight="bold">80%</text>
<rect x="823.2" y="867.2" width="186.8" height="80" rx="5" fill="url(#btnsel)"/>
<rect x="829.5" y="873.5" width="174.9" height="45.5" rx="4" fill="#c4c000"/>
<text x="917" y="938.5" font-size="13" fill="#ffffff" text-anchor="middle" font-weight="bold">100%</text>
<rect x="1264" y="867" width="60.3" height="80" rx="5" fill="url(#btng)"/>
<line x1="1264" y1="890.3" x2="1324.3" y2="890.3" stroke="#3a3a3a" stroke-width="1.3"/>
<circle cx="1294.4" cy="879.2" r="9.5" fill="url(#circg)"/>
<path d="M1289,882 L1300,882 L1294.4,875.5 Z" fill="#2a2a2a"/>
<rect x="1276" y="899" width="36.4" height="36.4" rx="5" fill="url(#glossg)" stroke="#1e1e1e" stroke-width="2.4"/>
<rect x="1286" y="909" width="17" height="17" fill="url(#glossk)"/>
<rect x="1324.3" y="867" width="331.7" height="76" fill="#2e2e2e"/>
<rect x="1325" y="867" width="58.5" height="38" fill="url(#btng)"/>
<rect x="1384.5" y="867" width="55.09999999999991" height="38" fill="url(#btng)"/>
<rect x="1440.6" y="867" width="54.200000000000045" height="38" fill="url(#btng)"/>
<rect x="1497" y="867" width="55" height="38" fill="url(#btng)"/>
<rect x="1553" y="867" width="55" height="38" fill="url(#btng)"/>
<rect x="1608" y="867" width="48" height="38" fill="#2f2f2f"/>
<circle cx="1637.6" cy="886.3" r="11.5" fill="#282828"/>
<rect x="1325" y="906.3" width="169.8" height="40" fill="url(#btng)"/>
<rect x="1497" y="906.3" width="159" height="40" fill="url(#btng)"/>
<circle cx="1354.1" cy="886.4" r="12.2" fill="url(#circg)"/>
<circle cx="1412" cy="886.4" r="12.2" fill="url(#circg)"/>
<circle cx="1468" cy="886.4" r="12.2" fill="url(#circg)"/>
<circle cx="1524.1" cy="886.4" r="12.2" fill="url(#circg)"/>
<circle cx="1580.2" cy="886.4" r="12.2" fill="url(#circg)"/>
<rect x="1349.5" y="881.5" width="9.5" height="9.5" fill="#2a2a2a"/>
<path d="M1408,880.5 L1408,892.5 L1417.5,886.5 Z" fill="#2a2a2a"/>
<text x="1468" y="892" font-size="12" fill="#2a2a2a" text-anchor="middle" font-weight="bold">[··]</text>
<path d="M1524.1,886.3 C1521,882 1516.5,882 1516.5,886.3 C1516.5,890.6 1521,890.6 1524.1,886.3 C1527.2,882 1531.7,882 1531.7,886.3 C1531.7,890.6 1527.2,890.6 1524.1,886.3 Z" fill="none" stroke="#2a2a2a" stroke-width="2"/>
<path d="M1574.5,884 A6,6 0 0 1 1585,882.5 M1585.8,888.5 A6,6 0 0 1 1575.3,890" fill="none" stroke="#2a2a2a" stroke-width="2.2"/>
<path d="M1586.5,879 L1586.5,884.5 L1581.5,884 Z M1573.8,893.5 L1573.8,888 L1578.8,888.5 Z" fill="#2a2a2a"/>
<circle cx="1362.6" cy="924.6" r="12.2" fill="url(#circg)"/>
<circle cx="1630.7" cy="925" r="12.2" fill="url(#circg)"/>
<path d="M1361.5,920.8 L1357.2,925.6 L1361.5,930.4 M1366.5,920.8 L1362.2,925.6 L1366.5,930.4" fill="none" stroke="#2a2a2a" stroke-width="1.9"/>
<path d="M1626.3,920.9 L1630.8,926 L1626.3,931.1 M1631.3,920.9 L1635.8,926 L1631.3,931.1" fill="none" stroke="#2a2a2a" stroke-width="1.9"/>
<text x="1398" y="934.8" font-size="27" fill="#2e2e2e" textLength="62" lengthAdjust="spacingAndGlyphs" stroke="#2e2e2e" stroke-width="0.7">Back</text>
<text x="1531.3" y="934.8" font-size="27" fill="#2e2e2e" textLength="64.6" lengthAdjust="spacingAndGlyphs" stroke="#2e2e2e" stroke-width="0.7">Next</text>
<rect x="972.4" y="57.2" width="683.6" height="557.2" fill="#1c1c1c"/>
<rect x="978.8" y="63.8" width="677.2" height="545" fill="#333333"/>
<rect x="1016.5" y="87.5" width="638.5" height="491.79999999999995" fill="#232323"/>
<text x="1319.5" y="82" font-size="14.5" fill="#d4d4d4" text-anchor="middle" textLength="83.5" lengthAdjust="spacingAndGlyphs">CIE 1976 u'v'</text>
<g clip-path="url(#clipPlot)"><g clip-path="url(#clipLoc)"><rect x="1016.5" y="97.0" width="638.5" height="3.6" fill="url(#e0)"/><rect x="1016.5" y="100.0" width="638.5" height="3.6" fill="url(#e1)"/><rect x="1016.5" y="103.0" width="638.5" height="3.6" fill="url(#e2)"/><rect x="1016.5" y="106.0" width="638.5" height="3.6" fill="url(#e3)"/><rect x="1016.5" y="109.0" width="638.5" height="3.6" fill="url(#e4)"/><rect x="1016.5" y="112.0" width="638.5" height="3.6" fill="url(#e5)"/><rect x="1016.5" y="115.0" width="638.5" height="3.6" fill="url(#e6)"/><rect x="1016.5" y="118.0" width="638.5" height="3.6" fill="url(#e7)"/><rect x="1016.5" y="121.0" width="638.5" height="3.6" fill="url(#e8)"/><rect x="1016.5" y="124.0" width="638.5" height="3.6" fill="url(#e9)"/><rect x="1016.5" y="127.0" width="638.5" height="3.6" fill="url(#e10)"/><rect x="1016.5" y="130.0" width="638.5" height="3.6" fill="url(#e11)"/><rect x="1016.5" y="133.0" width="638.5" height="3.6" fill="url(#e12)"/><rect x="1016.5" y="136.0" width="638.5" height="3.6" fill="url(#e13)"/><rect x="1016.5" y="139.0" width="638.5" height="3.6" fill="url(#e14)"/><rect x="1016.5" y="142.0" width="638.5" height="3.6" fill="url(#e15)"/><rect x="1016.5" y="145.0" width="638.5" height="3.6" fill="url(#e16)"/><rect x="1016.5" y="148.0" width="638.5" height="3.6" fill="url(#e17)"/><rect x="1016.5" y="151.0" width="638.5" height="3.6" fill="url(#e18)"/><rect x="1016.5" y="154.0" width="638.5" height="3.6" fill="url(#e19)"/><rect x="1016.5" y="157.0" width="638.5" height="3.6" fill="url(#e20)"/><rect x="1016.5" y="160.0" width="638.5" height="3.6" fill="url(#e21)"/><rect x="1016.5" y="163.0" width="638.5" height="3.6" fill="url(#e22)"/><rect x="1016.5" y="166.0" width="638.5" height="3.6" fill="url(#e23)"/><rect x="1016.5" y="169.0" width="638.5" height="3.6" fill="url(#e24)"/><rect x="1016.5" y="172.0" width="638.5" height="3.6" fill="url(#e25)"/><rect x="1016.5" y="175.0" width="638.5" height="3.6" fill="url(#e26)"/><rect x="1016.5" y="178.0" width="638.5" height="3.6" fill="url(#e27)"/><rect x="1016.5" y="181.0" width="638.5" height="3.6" fill="url(#e28)"/><rect x="1016.5" y="184.0" width="638.5" height="3.6" fill="url(#e29)"/><rect x="1016.5" y="187.0" width="638.5" height="3.6" fill="url(#e30)"/><rect x="1016.5" y="190.0" width="638.5" height="3.6" fill="url(#e31)"/><rect x="1016.5" y="193.0" width="638.5" height="3.6" fill="url(#e32)"/><rect x="1016.5" y="196.0" width="638.5" height="3.6" fill="url(#e33)"/><rect x="1016.5" y="199.0" width="638.5" height="3.6" fill="url(#e34)"/><rect x="1016.5" y="202.0" width="638.5" height="3.6" fill="url(#e35)"/><rect x="1016.5" y="205.0" width="638.5" height="3.6" fill="url(#e36)"/><rect x="1016.5" y="208.0" width="638.5" height="3.6" fill="url(#e37)"/><rect x="1016.5" y="211.0" width="638.5" height="3.6" fill="url(#e38)"/><rect x="1016.5" y="214.0" width="638.5" height="3.6" fill="url(#e39)"/><rect x="1016.5" y="217.0" width="638.5" height="3.6" fill="url(#e40)"/><rect x="1016.5" y="220.0" width="638.5" height="3.6" fill="url(#e41)"/><rect x="1016.5" y="223.0" width="638.5" height="3.6" fill="url(#e42)"/><rect x="1016.5" y="226.0" width="638.5" height="3.6" fill="url(#e43)"/><rect x="1016.5" y="229.0" width="638.5" height="3.6" fill="url(#e44)"/><rect x="1016.5" y="232.0" width="638.5" height="3.6" fill="url(#e45)"/><rect x="1016.5" y="235.0" width="638.5" height="3.6" fill="url(#e46)"/><rect x="1016.5" y="238.0" width="638.5" height="3.6" fill="url(#e47)"/><rect x="1016.5" y="241.0" width="638.5" height="3.6" fill="url(#e48)"/><rect x="1016.5" y="244.0" width="638.5" height="3.6" fill="url(#e49)"/><rect x="1016.5" y="247.0" width="638.5" height="3.6" fill="url(#e50)"/><rect x="1016.5" y="250.0" width="638.5" height="3.6" fill="url(#e51)"/><rect x="1016.5" y="253.0" width="638.5" height="3.6" fill="url(#e52)"/><rect x="1016.5" y="256.0" width="638.5" height="3.6" fill="url(#e53)"/><rect x="1016.5" y="259.0" width="638.5" height="3.6" fill="url(#e54)"/><rect x="1016.5" y="262.0" width="638.5" height="3.6" fill="url(#e55)"/><rect x="1016.5" y="265.0" width="638.5" height="3.6" fill="url(#e56)"/><rect x="1016.5" y="268.0" width="638.5" height="3.6" fill="url(#e57)"/><rect x="1016.5" y="271.0" width="638.5" height="3.6" fill="url(#e58)"/><rect x="1016.5" y="274.0" width="638.5" height="3.6" fill="url(#e59)"/><rect x="1016.5" y="277.0" width="638.5" height="3.6" fill="url(#e60)"/><rect x="1016.5" y="280.0" width="638.5" height="3.6" fill="url(#e61)"/><rect x="1016.5" y="283.0" width="638.5" height="3.6" fill="url(#e62)"/><rect x="1016.5" y="286.0" width="638.5" height="3.6" fill="url(#e63)"/><rect x="1016.5" y="289.0" width="638.5" height="3.6" fill="url(#e64)"/><rect x="1016.5" y="292.0" width="638.5" height="3.6" fill="url(#e65)"/><rect x="1016.5" y="295.0" width="638.5" height="3.6" fill="url(#e66)"/><rect x="1016.5" y="298.0" width="638.5" height="3.6" fill="url(#e67)"/><rect x="1016.5" y="301.0" width="638.5" height="3.6" fill="url(#e68)"/><rect x="1016.5" y="304.0" width="638.5" height="3.6" fill="url(#e69)"/><rect x="1016.5" y="307.0" width="638.5" height="3.6" fill="url(#e70)"/><rect x="1016.5" y="310.0" width="638.5" height="3.6" fill="url(#e71)"/><rect x="1016.5" y="313.0" width="638.5" height="3.6" fill="url(#e72)"/><rect x="1016.5" y="316.0" width="638.5" height="3.6" fill="url(#e73)"/><rect x="1016.5" y="319.0" width="638.5" height="3.6" fill="url(#e74)"/><rect x="1016.5" y="322.0" width="638.5" height="3.6" fill="url(#e75)"/><rect x="1016.5" y="325.0" width="638.5" height="3.6" fill="url(#e76)"/><rect x="1016.5" y="328.0" width="638.5" height="3.6" fill="url(#e77)"/><rect x="1016.5" y="331.0" width="638.5" height="3.6" fill="url(#e78)"/><rect x="1016.5" y="334.0" width="638.5" height="3.6" fill="url(#e79)"/><rect x="1016.5" y="337.0" width="638.5" height="3.6" fill="url(#e80)"/><rect x="1016.5" y="340.0" width="638.5" height="3.6" fill="url(#e81)"/><rect x="1016.5" y="343.0" width="638.5" height="3.6" fill="url(#e82)"/><rect x="1016.5" y="346.0" width="638.5" height="3.6" fill="url(#e83)"/><rect x="1016.5" y="349.0" width="638.5" height="3.6" fill="url(#e84)"/><rect x="1016.5" y="352.0" width="638.5" height="3.6" fill="url(#e85)"/><rect x="1016.5" y="355.0" width="638.5" height="3.6" fill="url(#e86)"/><rect x="1016.5" y="358.0" width="638.5" height="3.6" fill="url(#e87)"/><rect x="1016.5" y="361.0" width="638.5" height="3.6" fill="url(#e88)"/><rect x="1016.5" y="364.0" width="638.5" height="3.6" fill="url(#e89)"/><rect x="1016.5" y="367.0" width="638.5" height="3.6" fill="url(#e90)"/><rect x="1016.5" y="370.0" width="638.5" height="3.6" fill="url(#e91)"/><rect x="1016.5" y="373.0" width="638.5" height="3.6" fill="url(#e92)"/><rect x="1016.5" y="376.0" width="638.5" height="3.6" fill="url(#e93)"/><rect x="1016.5" y="379.0" width="638.5" height="3.6" fill="url(#e94)"/><rect x="1016.5" y="382.0" width="638.5" height="3.6" fill="url(#e95)"/><rect x="1016.5" y="385.0" width="638.5" height="3.6" fill="url(#e96)"/><rect x="1016.5" y="388.0" width="638.5" height="3.6" fill="url(#e97)"/><rect x="1016.5" y="391.0" width="638.5" height="3.6" fill="url(#e98)"/><rect x="1016.5" y="394.0" width="638.5" height="3.6" fill="url(#e99)"/><rect x="1016.5" y="397.0" width="638.5" height="3.6" fill="url(#e100)"/><rect x="1016.5" y="400.0" width="638.5" height="3.6" fill="url(#e101)"/><rect x="1016.5" y="403.0" width="638.5" height="3.6" fill="url(#e102)"/><rect x="1016.5" y="406.0" width="638.5" height="3.6" fill="url(#e103)"/><rect x="1016.5" y="409.0" width="638.5" height="3.6" fill="url(#e104)"/><rect x="1016.5" y="412.0" width="638.5" height="3.6" fill="url(#e105)"/><rect x="1016.5" y="415.0" width="638.5" height="3.6" fill="url(#e106)"/><rect x="1016.5" y="418.0" width="638.5" height="3.6" fill="url(#e107)"/><rect x="1016.5" y="421.0" width="638.5" height="3.6" fill="url(#e108)"/><rect x="1016.5" y="424.0" width="638.5" height="3.6" fill="url(#e109)"/><rect x="1016.5" y="427.0" width="638.5" height="3.6" fill="url(#e110)"/><rect x="1016.5" y="430.0" width="638.5" height="3.6" fill="url(#e111)"/><rect x="1016.5" y="433.0" width="638.5" height="3.6" fill="url(#e112)"/><rect x="1016.5" y="436.0" width="638.5" height="3.6" fill="url(#e113)"/><rect x="1016.5" y="439.0" width="638.5" height="3.6" fill="url(#e114)"/><rect x="1016.5" y="442.0" width="638.5" height="3.6" fill="url(#e115)"/><rect x="1016.5" y="445.0" width="638.5" height="3.6" fill="url(#e116)"/><rect x="1016.5" y="448.0" width="638.5" height="3.6" fill="url(#e117)"/><rect x="1016.5" y="451.0" width="638.5" height="3.6" fill="url(#e118)"/><rect x="1016.5" y="454.0" width="638.5" height="3.6" fill="url(#e119)"/><rect x="1016.5" y="457.0" width="638.5" height="3.6" fill="url(#e120)"/><rect x="1016.5" y="460.0" width="638.5" height="3.6" fill="url(#e121)"/><rect x="1016.5" y="463.0" width="638.5" height="3.6" fill="url(#e122)"/><rect x="1016.5" y="466.0" width="638.5" height="3.6" fill="url(#e123)"/><rect x="1016.5" y="469.0" width="638.5" height="3.6" fill="url(#e124)"/><rect x="1016.5" y="472.0" width="638.5" height="3.6" fill="url(#e125)"/><rect x="1016.5" y="475.0" width="638.5" height="3.6" fill="url(#e126)"/><rect x="1016.5" y="478.0" width="638.5" height="3.6" fill="url(#e127)"/><rect x="1016.5" y="481.0" width="638.5" height="3.6" fill="url(#e128)"/><rect x="1016.5" y="484.0" width="638.5" height="3.6" fill="url(#e129)"/><rect x="1016.5" y="487.0" width="638.5" height="3.6" fill="url(#e130)"/><rect x="1016.5" y="490.0" width="638.5" height="3.6" fill="url(#e131)"/><rect x="1016.5" y="493.0" width="638.5" height="3.6" fill="url(#e132)"/><rect x="1016.5" y="496.0" width="638.5" height="3.6" fill="url(#e133)"/><rect x="1016.5" y="499.0" width="638.5" height="3.6" fill="url(#e134)"/><rect x="1016.5" y="502.0" width="638.5" height="3.6" fill="url(#e135)"/><rect x="1016.5" y="505.0" width="638.5" height="3.6" fill="url(#e136)"/><rect x="1016.5" y="508.0" width="638.5" height="3.6" fill="url(#e137)"/><rect x="1016.5" y="511.0" width="638.5" height="3.6" fill="url(#e138)"/><rect x="1016.5" y="514.0" width="638.5" height="3.6" fill="url(#e139)"/><rect x="1016.5" y="517.0" width="638.5" height="3.6" fill="url(#e140)"/><rect x="1016.5" y="520.0" width="638.5" height="3.6" fill="url(#e141)"/><rect x="1016.5" y="523.0" width="638.5" height="3.6" fill="url(#e142)"/><rect x="1016.5" y="526.0" width="638.5" height="3.6" fill="url(#e143)"/><rect x="1016.5" y="529.0" width="638.5" height="3.6" fill="url(#e144)"/><rect x="1016.5" y="532.0" width="638.5" height="3.6" fill="url(#e145)"/><rect x="1016.5" y="535.0" width="638.5" height="3.6" fill="url(#e146)"/><rect x="1016.5" y="538.0" width="638.5" height="3.6" fill="url(#e147)"/><rect x="1016.5" y="541.0" width="638.5" height="3.6" fill="url(#e148)"/><rect x="1016.5" y="544.0" width="638.5" height="3.6" fill="url(#e149)"/><rect x="1016.5" y="547.0" width="638.5" height="3.6" fill="url(#e150)"/><rect x="1016.5" y="550.0" width="638.5" height="3.6" fill="url(#e151)"/><rect x="1016.5" y="553.0" width="638.5" height="3.6" fill="url(#e152)"/><rect x="1016.5" y="556.0" width="638.5" height="3.6" fill="url(#e153)"/><rect x="1016.5" y="559.0" width="638.5" height="3.6" fill="url(#e154)"/><rect x="1016.5" y="562.0" width="638.5" height="3.6" fill="url(#e155)"/><rect x="1016.5" y="565.0" width="638.5" height="3.6" fill="url(#e156)"/></g></g>
<g clip-path="url(#clipTri)"><rect x="1150.0" y="117.0" width="347.0" height="3.6" fill="url(#t0)"/><rect x="1150.0" y="120.0" width="347.0" height="3.6" fill="url(#t1)"/><rect x="1150.0" y="123.0" width="347.0" height="3.6" fill="url(#t2)"/><rect x="1150.0" y="126.0" width="347.0" height="3.6" fill="url(#t3)"/><rect x="1150.0" y="129.0" width="347.0" height="3.6" fill="url(#t4)"/><rect x="1150.0" y="132.0" width="347.0" height="3.6" fill="url(#t5)"/><rect x="1150.0" y="135.0" width="347.0" height="3.6" fill="url(#t6)"/><rect x="1150.0" y="138.0" width="347.0" height="3.6" fill="url(#t7)"/><rect x="1150.0" y="141.0" width="347.0" height="3.6" fill="url(#t8)"/><rect x="1150.0" y="144.0" width="347.0" height="3.6" fill="url(#t9)"/><rect x="1150.0" y="147.0" width="347.0" height="3.6" fill="url(#t10)"/><rect x="1150.0" y="150.0" width="347.0" height="3.6" fill="url(#t11)"/><rect x="1150.0" y="153.0" width="347.0" height="3.6" fill="url(#t12)"/><rect x="1150.0" y="156.0" width="347.0" height="3.6" fill="url(#t13)"/><rect x="1150.0" y="159.0" width="347.0" height="3.6" fill="url(#t14)"/><rect x="1150.0" y="162.0" width="347.0" height="3.6" fill="url(#t15)"/><rect x="1150.0" y="165.0" width="347.0" height="3.6" fill="url(#t16)"/><rect x="1150.0" y="168.0" width="347.0" height="3.6" fill="url(#t17)"/><rect x="1150.0" y="171.0" width="347.0" height="3.6" fill="url(#t18)"/><rect x="1150.0" y="174.0" width="347.0" height="3.6" fill="url(#t19)"/><rect x="1150.0" y="177.0" width="347.0" height="3.6" fill="url(#t20)"/><rect x="1150.0" y="180.0" width="347.0" height="3.6" fill="url(#t21)"/><rect x="1150.0" y="183.0" width="347.0" height="3.6" fill="url(#t22)"/><rect x="1150.0" y="186.0" width="347.0" height="3.6" fill="url(#t23)"/><rect x="1150.0" y="189.0" width="347.0" height="3.6" fill="url(#t24)"/><rect x="1150.0" y="192.0" width="347.0" height="3.6" fill="url(#t25)"/><rect x="1150.0" y="195.0" width="347.0" height="3.6" fill="url(#t26)"/><rect x="1150.0" y="198.0" width="347.0" height="3.6" fill="url(#t27)"/><rect x="1150.0" y="201.0" width="347.0" height="3.6" fill="url(#t28)"/><rect x="1150.0" y="204.0" width="347.0" height="3.6" fill="url(#t29)"/><rect x="1150.0" y="207.0" width="347.0" height="3.6" fill="url(#t30)"/><rect x="1150.0" y="210.0" width="347.0" height="3.6" fill="url(#t31)"/><rect x="1150.0" y="213.0" width="347.0" height="3.6" fill="url(#t32)"/><rect x="1150.0" y="216.0" width="347.0" height="3.6" fill="url(#t33)"/><rect x="1150.0" y="219.0" width="347.0" height="3.6" fill="url(#t34)"/><rect x="1150.0" y="222.0" width="347.0" height="3.6" fill="url(#t35)"/><rect x="1150.0" y="225.0" width="347.0" height="3.6" fill="url(#t36)"/><rect x="1150.0" y="228.0" width="347.0" height="3.6" fill="url(#t37)"/><rect x="1150.0" y="231.0" width="347.0" height="3.6" fill="url(#t38)"/><rect x="1150.0" y="234.0" width="347.0" height="3.6" fill="url(#t39)"/><rect x="1150.0" y="237.0" width="347.0" height="3.6" fill="url(#t40)"/><rect x="1150.0" y="240.0" width="347.0" height="3.6" fill="url(#t41)"/><rect x="1150.0" y="243.0" width="347.0" height="3.6" fill="url(#t42)"/><rect x="1150.0" y="246.0" width="347.0" height="3.6" fill="url(#t43)"/><rect x="1150.0" y="249.0" width="347.0" height="3.6" fill="url(#t44)"/><rect x="1150.0" y="252.0" width="347.0" height="3.6" fill="url(#t45)"/><rect x="1150.0" y="255.0" width="347.0" height="3.6" fill="url(#t46)"/><rect x="1150.0" y="258.0" width="347.0" height="3.6" fill="url(#t47)"/><rect x="1150.0" y="261.0" width="347.0" height="3.6" fill="url(#t48)"/><rect x="1150.0" y="264.0" width="347.0" height="3.6" fill="url(#t49)"/><rect x="1150.0" y="267.0" width="347.0" height="3.6" fill="url(#t50)"/><rect x="1150.0" y="270.0" width="347.0" height="3.6" fill="url(#t51)"/><rect x="1150.0" y="273.0" width="347.0" height="3.6" fill="url(#t52)"/><rect x="1150.0" y="276.0" width="347.0" height="3.6" fill="url(#t53)"/><rect x="1150.0" y="279.0" width="347.0" height="3.6" fill="url(#t54)"/><rect x="1150.0" y="282.0" width="347.0" height="3.6" fill="url(#t55)"/><rect x="1150.0" y="285.0" width="347.0" height="3.6" fill="url(#t56)"/><rect x="1150.0" y="288.0" width="347.0" height="3.6" fill="url(#t57)"/><rect x="1150.0" y="291.0" width="347.0" height="3.6" fill="url(#t58)"/><rect x="1150.0" y="294.0" width="347.0" height="3.6" fill="url(#t59)"/><rect x="1150.0" y="297.0" width="347.0" height="3.6" fill="url(#t60)"/><rect x="1150.0" y="300.0" width="347.0" height="3.6" fill="url(#t61)"/><rect x="1150.0" y="303.0" width="347.0" height="3.6" fill="url(#t62)"/><rect x="1150.0" y="306.0" width="347.0" height="3.6" fill="url(#t63)"/><rect x="1150.0" y="309.0" width="347.0" height="3.6" fill="url(#t64)"/><rect x="1150.0" y="312.0" width="347.0" height="3.6" fill="url(#t65)"/><rect x="1150.0" y="315.0" width="347.0" height="3.6" fill="url(#t66)"/><rect x="1150.0" y="318.0" width="347.0" height="3.6" fill="url(#t67)"/><rect x="1150.0" y="321.0" width="347.0" height="3.6" fill="url(#t68)"/><rect x="1150.0" y="324.0" width="347.0" height="3.6" fill="url(#t69)"/><rect x="1150.0" y="327.0" width="347.0" height="3.6" fill="url(#t70)"/><rect x="1150.0" y="330.0" width="347.0" height="3.6" fill="url(#t71)"/><rect x="1150.0" y="333.0" width="347.0" height="3.6" fill="url(#t72)"/><rect x="1150.0" y="336.0" width="347.0" height="3.6" fill="url(#t73)"/><rect x="1150.0" y="339.0" width="347.0" height="3.6" fill="url(#t74)"/><rect x="1150.0" y="342.0" width="347.0" height="3.6" fill="url(#t75)"/><rect x="1150.0" y="345.0" width="347.0" height="3.6" fill="url(#t76)"/><rect x="1150.0" y="348.0" width="347.0" height="3.6" fill="url(#t77)"/><rect x="1150.0" y="351.0" width="347.0" height="3.6" fill="url(#t78)"/><rect x="1150.0" y="354.0" width="347.0" height="3.6" fill="url(#t79)"/><rect x="1150.0" y="357.0" width="347.0" height="3.6" fill="url(#t80)"/><rect x="1150.0" y="360.0" width="347.0" height="3.6" fill="url(#t81)"/><rect x="1150.0" y="363.0" width="347.0" height="3.6" fill="url(#t82)"/><rect x="1150.0" y="366.0" width="347.0" height="3.6" fill="url(#t83)"/><rect x="1150.0" y="369.0" width="347.0" height="3.6" fill="url(#t84)"/><rect x="1150.0" y="372.0" width="347.0" height="3.6" fill="url(#t85)"/><rect x="1150.0" y="375.0" width="347.0" height="3.6" fill="url(#t86)"/><rect x="1150.0" y="378.0" width="347.0" height="3.6" fill="url(#t87)"/><rect x="1150.0" y="381.0" width="347.0" height="3.6" fill="url(#t88)"/><rect x="1150.0" y="384.0" width="347.0" height="3.6" fill="url(#t89)"/><rect x="1150.0" y="387.0" width="347.0" height="3.6" fill="url(#t90)"/><rect x="1150.0" y="390.0" width="347.0" height="3.6" fill="url(#t91)"/><rect x="1150.0" y="393.0" width="347.0" height="3.6" fill="url(#t92)"/><rect x="1150.0" y="396.0" width="347.0" height="3.6" fill="url(#t93)"/><rect x="1150.0" y="399.0" width="347.0" height="3.6" fill="url(#t94)"/><rect x="1150.0" y="402.0" width="347.0" height="3.6" fill="url(#t95)"/><rect x="1150.0" y="405.0" width="347.0" height="3.6" fill="url(#t96)"/><rect x="1150.0" y="408.0" width="347.0" height="3.6" fill="url(#t97)"/><rect x="1150.0" y="411.0" width="347.0" height="3.6" fill="url(#t98)"/><rect x="1150.0" y="414.0" width="347.0" height="3.6" fill="url(#t99)"/><rect x="1150.0" y="417.0" width="347.0" height="3.6" fill="url(#t100)"/><rect x="1150.0" y="420.0" width="347.0" height="3.6" fill="url(#t101)"/><rect x="1150.0" y="423.0" width="347.0" height="3.6" fill="url(#t102)"/><rect x="1150.0" y="426.0" width="347.0" height="3.6" fill="url(#t103)"/><rect x="1150.0" y="429.0" width="347.0" height="3.6" fill="url(#t104)"/><rect x="1150.0" y="432.0" width="347.0" height="3.6" fill="url(#t105)"/><rect x="1150.0" y="435.0" width="347.0" height="3.6" fill="url(#t106)"/><rect x="1150.0" y="438.0" width="347.0" height="3.6" fill="url(#t107)"/><rect x="1150.0" y="441.0" width="347.0" height="3.6" fill="url(#t108)"/><rect x="1150.0" y="444.0" width="347.0" height="3.6" fill="url(#t109)"/><rect x="1150.0" y="447.0" width="347.0" height="3.6" fill="url(#t110)"/></g>
<path d="M1016.5,87.5 L1655,87.5 L1655,579.3 L1016.5,579.3 Z" fill="none" stroke="#9c9c9c" stroke-width="1.6"/>
<line x1="1017.1" y1="579.3" x2="1017.1" y2="585.3" stroke="#d0d0d0" stroke-width="1.3"/>
<text x="1017.1" y="601" font-size="14" fill="#d4d4d4" text-anchor="middle">0</text>
<line x1="1010.5" y1="579.7" x2="1016.5" y2="579.7" stroke="#d0d0d0" stroke-width="1.3"/>
<text x="1010.0" y="587.5" font-size="14" fill="#d4d4d4" text-anchor="end">0</text>
<line x1="1070.325" y1="579.3" x2="1070.325" y2="585.3" stroke="#d0d0d0" stroke-width="1.3"/>
<text x="1070.325" y="601" font-size="14" fill="#d4d4d4" text-anchor="middle">0,05</text>
<line x1="1010.5" y1="538.75" x2="1016.5" y2="538.75" stroke="#d0d0d0" stroke-width="1.3"/>
<text x="1010.0" y="545.05" font-size="14" fill="#d4d4d4" text-anchor="end">0,05</text>
<line x1="1123.55" y1="579.3" x2="1123.55" y2="585.3" stroke="#d0d0d0" stroke-width="1.3"/>
<text x="1123.55" y="601" font-size="14" fill="#d4d4d4" text-anchor="middle">0,1</text>
<line x1="1010.5" y1="497.80000000000007" x2="1016.5" y2="497.80000000000007" stroke="#d0d0d0" stroke-width="1.3"/>
<text x="1010.0" y="504.1000000000001" font-size="14" fill="#d4d4d4" text-anchor="end">0,1</text>
<line x1="1176.775" y1="579.3" x2="1176.775" y2="585.3" stroke="#d0d0d0" stroke-width="1.3"/>
<text x="1176.775" y="601" font-size="14" fill="#d4d4d4" text-anchor="middle">0,15</text>
<line x1="1010.5" y1="456.85" x2="1016.5" y2="456.85" stroke="#d0d0d0" stroke-width="1.3"/>
<text x="1010.0" y="463.15000000000003" font-size="14" fill="#d4d4d4" text-anchor="end">0,15</text>
<line x1="1230.0" y1="579.3" x2="1230.0" y2="585.3" stroke="#d0d0d0" stroke-width="1.3"/>
<text x="1230.0" y="601" font-size="14" fill="#d4d4d4" text-anchor="middle">0,2</text>
<line x1="1010.5" y1="415.90000000000003" x2="1016.5" y2="415.90000000000003" stroke="#d0d0d0" stroke-width="1.3"/>
<text x="1010.0" y="422.20000000000005" font-size="14" fill="#d4d4d4" text-anchor="end">0,2</text>
<line x1="1283.225" y1="579.3" x2="1283.225" y2="585.3" stroke="#d0d0d0" stroke-width="1.3"/>
<text x="1283.225" y="601" font-size="14" fill="#d4d4d4" text-anchor="middle">0,25</text>
<line x1="1010.5" y1="374.95000000000005" x2="1016.5" y2="374.95000000000005" stroke="#d0d0d0" stroke-width="1.3"/>
<text x="1010.0" y="381.25000000000006" font-size="14" fill="#d4d4d4" text-anchor="end">0,25</text>
<line x1="1336.45" y1="579.3" x2="1336.45" y2="585.3" stroke="#d0d0d0" stroke-width="1.3"/>
<text x="1336.45" y="601" font-size="14" fill="#d4d4d4" text-anchor="middle">0,3</text>
<line x1="1010.5" y1="334.0" x2="1016.5" y2="334.0" stroke="#d0d0d0" stroke-width="1.3"/>
<text x="1010.0" y="340.3" font-size="14" fill="#d4d4d4" text-anchor="end">0,3</text>
<line x1="1389.675" y1="579.3" x2="1389.675" y2="585.3" stroke="#d0d0d0" stroke-width="1.3"/>
<text x="1389.675" y="601" font-size="14" fill="#d4d4d4" text-anchor="middle">0,35</text>
<line x1="1010.5" y1="293.05" x2="1016.5" y2="293.05" stroke="#d0d0d0" stroke-width="1.3"/>
<text x="1010.0" y="299.35" font-size="14" fill="#d4d4d4" text-anchor="end">0,35</text>
<line x1="1442.9" y1="579.3" x2="1442.9" y2="585.3" stroke="#d0d0d0" stroke-width="1.3"/>
<text x="1442.9" y="601" font-size="14" fill="#d4d4d4" text-anchor="middle">0,4</text>
<line x1="1010.5" y1="252.10000000000002" x2="1016.5" y2="252.10000000000002" stroke="#d0d0d0" stroke-width="1.3"/>
<text x="1010.0" y="258.40000000000003" font-size="14" fill="#d4d4d4" text-anchor="end">0,4</text>
<line x1="1496.125" y1="579.3" x2="1496.125" y2="585.3" stroke="#d0d0d0" stroke-width="1.3"/>
<text x="1496.125" y="601" font-size="14" fill="#d4d4d4" text-anchor="middle">0,45</text>
<line x1="1010.5" y1="211.15000000000003" x2="1016.5" y2="211.15000000000003" stroke="#d0d0d0" stroke-width="1.3"/>
<text x="1010.0" y="217.45000000000005" font-size="14" fill="#d4d4d4" text-anchor="end">0,45</text>
<line x1="1549.35" y1="579.3" x2="1549.35" y2="585.3" stroke="#d0d0d0" stroke-width="1.3"/>
<text x="1549.35" y="601" font-size="14" fill="#d4d4d4" text-anchor="middle">0,5</text>
<line x1="1010.5" y1="170.20000000000005" x2="1016.5" y2="170.20000000000005" stroke="#d0d0d0" stroke-width="1.3"/>
<text x="1010.0" y="176.50000000000006" font-size="14" fill="#d4d4d4" text-anchor="end">0,5</text>
<line x1="1602.575" y1="579.3" x2="1602.575" y2="585.3" stroke="#d0d0d0" stroke-width="1.3"/>
<text x="1602.575" y="601" font-size="14" fill="#d4d4d4" text-anchor="middle">0,55</text>
<line x1="1010.5" y1="129.25" x2="1016.5" y2="129.25" stroke="#d0d0d0" stroke-width="1.3"/>
<text x="1010.0" y="135.55" font-size="14" fill="#d4d4d4" text-anchor="end">0,55</text>
<rect x="1142.9" y="111.0" width="13" height="13" fill="none" stroke="#ffffff" stroke-width="1.8"/>
<rect x="1155.1" y="122.7" width="13" height="13" fill="none" stroke="#ffffff" stroke-width="1.8"/>
<rect x="1167.1" y="135.0" width="13" height="13" fill="none" stroke="#ffffff" stroke-width="1.8"/>
<rect x="1181.9" y="149.7" width="13" height="13" fill="none" stroke="#ffffff" stroke-width="1.8"/>
<rect x="1199.7" y="167.0" width="13" height="13" fill="none" stroke="#ffffff" stroke-width="1.8"/>
<rect x="1157.7" y="199.1" width="13" height="13" fill="none" stroke="#ffffff" stroke-width="1.8"/>
<rect x="1169.9" y="196.6" width="13" height="13" fill="none" stroke="#ffffff" stroke-width="1.8"/>
<rect x="1182.6" y="194.3" width="13" height="13" fill="none" stroke="#ffffff" stroke-width="1.8"/>
<rect x="1195.6" y="192.2" width="13" height="13" fill="none" stroke="#ffffff" stroke-width="1.8"/>
<rect x="1208.6" y="190.5" width="13" height="13" fill="none" stroke="#ffffff" stroke-width="1.8"/>
<rect x="1227.2" y="118.9" width="13" height="13" fill="none" stroke="#ffffff" stroke-width="1.8"/>
<rect x="1225.9" y="131.1" width="13" height="13" fill="none" stroke="#ffffff" stroke-width="1.8"/>
<rect x="1225.9" y="142.6" width="13" height="13" fill="none" stroke="#ffffff" stroke-width="1.8"/>
<rect x="1224.1" y="156.1" width="13" height="13" fill="none" stroke="#ffffff" stroke-width="1.8"/>
<rect x="1222.8" y="170.1" width="13" height="13" fill="none" stroke="#ffffff" stroke-width="1.8"/>
<rect x="1268.9" y="179.8" width="13" height="13" fill="none" stroke="#ffffff" stroke-width="1.8"/>
<rect x="1321.9" y="171.1" width="13" height="13" fill="none" stroke="#ffffff" stroke-width="1.8"/>
<rect x="1370.9" y="163.6" width="13" height="13" fill="none" stroke="#ffffff" stroke-width="1.8"/>
<rect x="1426.1" y="153.5" width="13" height="13" fill="none" stroke="#ffffff" stroke-width="1.8"/>
<rect x="1489.9" y="143.5" width="13" height="13" fill="none" stroke="#ffffff" stroke-width="1.8"/>
<rect x="1237.9" y="204.7" width="13" height="13" fill="none" stroke="#ffffff" stroke-width="1.8"/>
<rect x="1256.7" y="223.8" width="13" height="13" fill="none" stroke="#ffffff" stroke-width="1.8"/>
<rect x="1275.8" y="243.7" width="13" height="13" fill="none" stroke="#ffffff" stroke-width="1.8"/>
<rect x="1301.8" y="269.9" width="13" height="13" fill="none" stroke="#ffffff" stroke-width="1.8"/>
<rect x="1334.5" y="300.5" width="13" height="13" fill="none" stroke="#ffffff" stroke-width="1.8"/>
<rect x="1217.2" y="217.7" width="13" height="13" fill="none" stroke="#ffffff" stroke-width="1.8"/>
<rect x="1214.7" y="254.9" width="13" height="13" fill="none" stroke="#ffffff" stroke-width="1.8"/>
<rect x="1210.9" y="299.7" width="13" height="13" fill="none" stroke="#ffffff" stroke-width="1.8"/>
<rect x="1205.0" y="357.1" width="13" height="13" fill="none" stroke="#ffffff" stroke-width="1.8"/>
<rect x="1197.1" y="442.4" width="13" height="13" fill="none" stroke="#ffffff" stroke-width="1.8"/>
<circle cx="1126.0" cy="106.3" r="4.6" fill="#189c18" stroke="#111" stroke-width="1.3"/>
<circle cx="1139.5" cy="118.5" r="4.6" fill="#70aa70" stroke="#111" stroke-width="1.3"/>
<circle cx="1155.8" cy="134.8" r="4.6" fill="#80aa80" stroke="#111" stroke-width="1.3"/>
<circle cx="1174.9" cy="152.4" r="4.6" fill="#93ad93" stroke="#111" stroke-width="1.3"/>
<circle cx="1197.0" cy="175.8" r="4.6" fill="#a6b4a6" stroke="#111" stroke-width="1.3"/>
<circle cx="1150.2" cy="211.5" r="4.6" fill="#1aa2a2" stroke="#111" stroke-width="1.3"/>
<circle cx="1165.7" cy="209.7" r="4.6" fill="#78b0b0" stroke="#111" stroke-width="1.3"/>
<circle cx="1178.9" cy="208.2" r="4.6" fill="#8cb2b2" stroke="#111" stroke-width="1.3"/>
<circle cx="1194.0" cy="205.9" r="4.6" fill="#9cb5b5" stroke="#111" stroke-width="1.3"/>
<circle cx="1207.4" cy="203.1" r="4.6" fill="#aab9b9" stroke="#111" stroke-width="1.3"/>
<circle cx="1227.8" cy="116.0" r="4.6" fill="#c8c022" stroke="#111" stroke-width="1.3"/>
<circle cx="1226.3" cy="130.8" r="4.6" fill="#c0bc6a" stroke="#111" stroke-width="1.3"/>
<circle cx="1226.3" cy="144.3" r="4.6" fill="#c0bc84" stroke="#111" stroke-width="1.3"/>
<circle cx="1225.3" cy="161.1" r="4.6" fill="#bdba92" stroke="#111" stroke-width="1.3"/>
<circle cx="1225.3" cy="179.9" r="4.6" fill="#bab8a2" stroke="#111" stroke-width="1.3"/>
<circle cx="1278.2" cy="191.1" r="4.6" fill="#b08282" stroke="#111" stroke-width="1.3"/>
<circle cx="1339.5" cy="181.0" r="4.6" fill="#b06c6c" stroke="#111" stroke-width="1.3"/>
<circle cx="1399.3" cy="170.1" r="4.6" fill="#b45252" stroke="#111" stroke-width="1.3"/>
<circle cx="1470.4" cy="157.8" r="4.6" fill="#b83c3c" stroke="#111" stroke-width="1.3"/>
<circle cx="1538.0" cy="148.5" r="4.6" fill="#c41c1c" stroke="#111" stroke-width="1.3"/>
<circle cx="1244.4" cy="220.9" r="4.6" fill="#b8a2b8" stroke="#111" stroke-width="1.3"/>
<circle cx="1267.3" cy="242.5" r="4.6" fill="#b892b8" stroke="#111" stroke-width="1.3"/>
<circle cx="1291.7" cy="265.4" r="4.6" fill="#b87eb8" stroke="#111" stroke-width="1.3"/>
<circle cx="1321.8" cy="294.2" r="4.6" fill="#b86ab8" stroke="#111" stroke-width="1.3"/>
<circle cx="1354.0" cy="328.3" r="4.6" fill="#c242c2" stroke="#111" stroke-width="1.3"/>
<circle cx="1222.2" cy="235.9" r="4.6" fill="#a2a2ba" stroke="#111" stroke-width="1.3"/>
<circle cx="1219.7" cy="279.4" r="4.6" fill="#9292bc" stroke="#111" stroke-width="1.3"/>
<circle cx="1216.9" cy="328.3" r="4.6" fill="#7878c0" stroke="#111" stroke-width="1.3"/>
<circle cx="1214.4" cy="392.2" r="4.6" fill="#5c5cc2" stroke="#111" stroke-width="1.3"/>
<circle cx="1211.8" cy="466.3" r="4.6" fill="#2020c0" stroke="#111" stroke-width="1.3"/>
<rect x="1220.0" y="187.9" width="13" height="13" fill="none" stroke="#000000" stroke-width="2"/>
<circle cx="1222.5" cy="199.3" r="4.6" fill="#ffffff" stroke="#111" stroke-width="1.3"/>
<g clip-path="url(#clipIns)">
<rect x="1438.2" y="426.8" width="212.0" height="144.59999999999997" fill="url(#insBright)"/>
<path d="M1438.2,426.8 L1650.2,426.8 L1650.2,554.8 L1438.2,442.8 Z" fill="url(#insDark)"/>
<path d="M1632,426.8 L1650.2,426.8 L1650.2,438.8 Z" fill="#232323"/>
<rect x="1536.3" y="490.9" width="14.5" height="14.5" fill="none" stroke="#ffffff" stroke-width="1.8"/>
<rect x="1478.5" y="556.0" width="14.5" height="14.5" fill="none" stroke="#ffffff" stroke-width="1.8"/>
<circle cx="1566.5" cy="436.6" r="4.4" fill="#c8c832" stroke="#111" stroke-width="1.3"/>
<circle cx="1494.2" cy="520.8" r="4.6" fill="#a8a860" stroke="#111" stroke-width="1.3"/>
</g>
<rect x="1438.2" y="426.8" width="212.0" height="144.59999999999997" fill="none" stroke="#8a8a8a" stroke-width="2"/>
</svg></body></html>
